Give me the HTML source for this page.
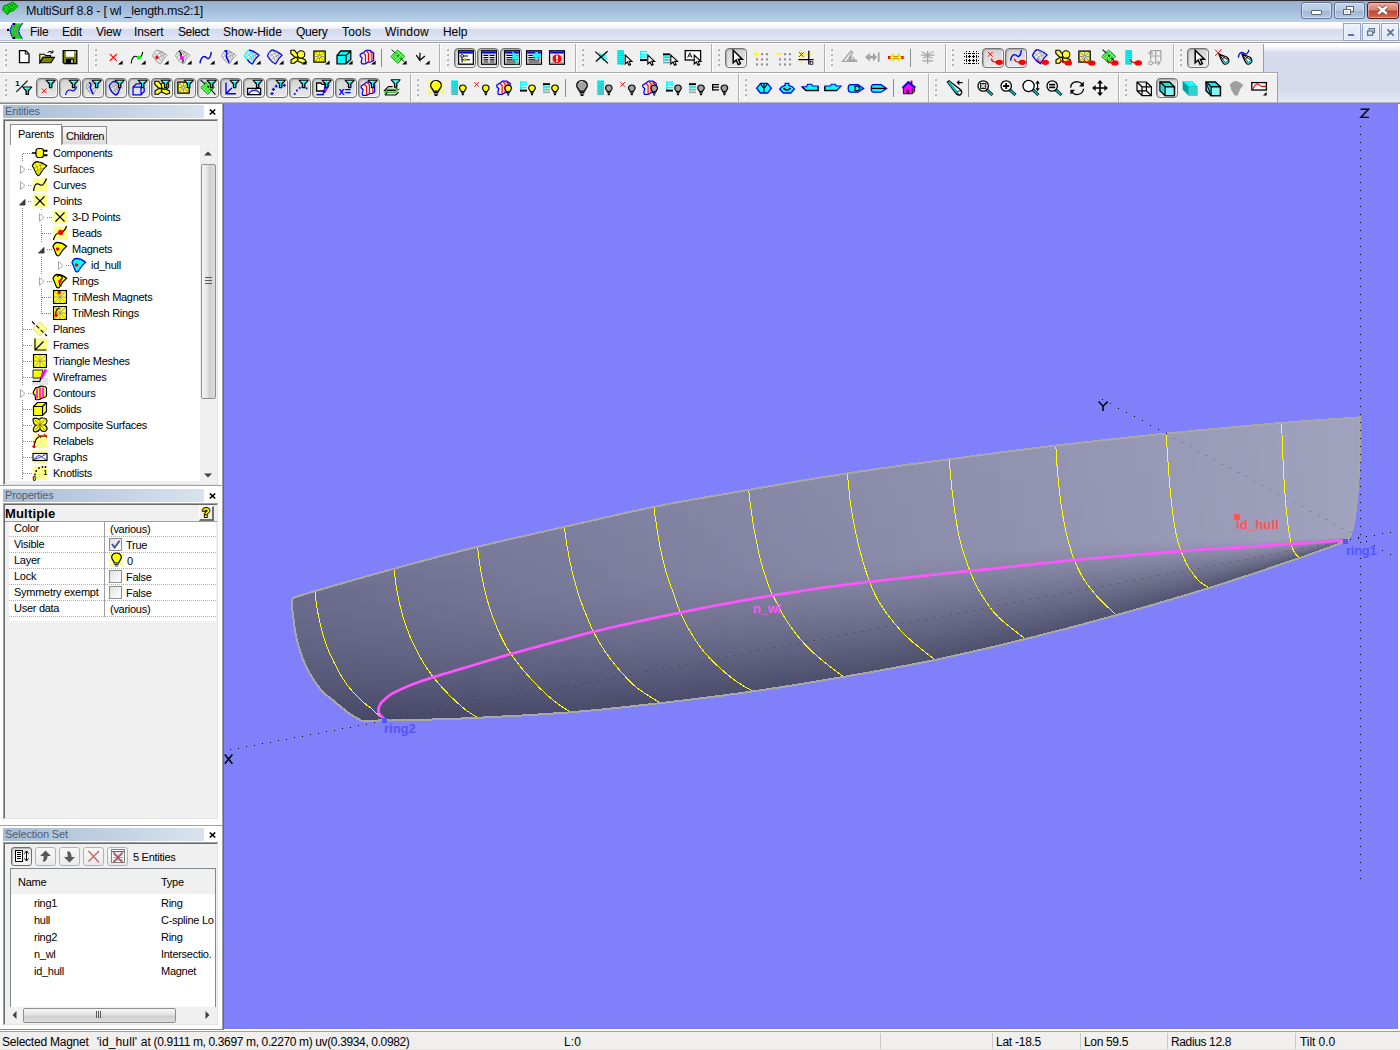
<!DOCTYPE html>
<html><head><meta charset="utf-8"><title>MultiSurf 8.8</title>
<style>

html,body{margin:0;padding:0;}
body{width:1400px;height:1050px;position:relative;overflow:hidden;background:#f0f0f0;
 font-family:"Liberation Sans",sans-serif;font-size:11px;color:#000;}
.a{position:absolute;}
.t{position:absolute;white-space:nowrap;line-height:1;}
/* title bar */
#title{left:0;top:0;width:1400px;height:22px;background:linear-gradient(#7f99b8 0px,#98b3d2 2px,#9eb9d7 8px,#adc6e1 15px,#b9d1ea 22px);}
#titletop{left:0;top:0;width:1400px;height:1px;background:#2b2b30;}
#menubar{left:0;top:22px;width:1400px;height:20px;background:linear-gradient(#ffffff 0px,#fafbfe 3px,#eceef8 7px,#d4d8ec 7px,#e2e7f6 18px,#b5bbd0 18px,#b5bbd0 19px,#f4f4f4 19px);}
.menu{font-size:12px;top:26px;color:#000;}
#rebar{left:0;top:42px;width:1400px;height:61px;background:linear-gradient(#ffffff 0,#ffffff 2px,#fdfdfe 4px,#d6daed 11px,#d5d9ec 48px,#e3e8f6 60px);}
.tb{position:absolute;background:#f0f0f0;height:29px;}
.grip{position:absolute;width:4px;height:22px;
 background:repeating-linear-gradient(#b4b4b4 0,#b4b4b4 2px,transparent 2px,transparent 5px) 1.5px 1px/2px 18px no-repeat,
 repeating-linear-gradient(#ffffff 0,#ffffff 2px,transparent 2px,transparent 5px) 0.5px 0px/2px 22px no-repeat;}
.vsep{position:absolute;width:1px;background:#a0a0a0;}
.btnp{position:absolute;width:20px;height:18px;border:1px solid #727272;border-radius:4px;
 background:linear-gradient(#d3d3d3,#e9e9e9);box-shadow:inset 1px 1px 1px #a8a8a8, inset -1px -1px 0 #f8f8f8;}
svg{position:absolute;overflow:visible;}
/* panels */
.phead{position:absolute;left:3px;width:201px;height:13px;background:linear-gradient(90deg,#a8bdd4,#c4d3e4 60%,#d9e3ef);}
.phead span{position:absolute;left:2px;top:0px;font-size:11px;color:#4f5f74;line-height:13px;letter-spacing:-0.15px;}
.tree{font-size:11px;letter-spacing:-0.28px;}
.dot-h{position:absolute;height:1px;background-image:linear-gradient(90deg,#808080 1px,transparent 1px);background-size:2px 1px;}
.dot-v{position:absolute;width:1px;background-image:linear-gradient(#808080 1px,transparent 1px);background-size:1px 2px;}
.dotl-h{position:absolute;height:1px;background-image:linear-gradient(90deg,#b0b0b0 1px,transparent 1px);background-size:2px 1px;}
</style></head>
<body>
<div class="a" id="title"></div><div class="a" id="titletop"></div>
<svg style="left:0px;top:0px" width="20" height="17" viewBox="0 0 20 17"><path d="M3 7.3 L4.5 5.3 L7 5 L9.5 3.5 L12.9 1.9 L18 6.4 L14.1 10.3 L9.3 12.2 L7.5 14.8 L3 10.3 Z" fill="#00f000" stroke="#008000" stroke-width="0.9"/><path d="M4.5 5.3 L8.6 9.6 L7.5 14.8 M7 5 L11.3 9 L9.3 12.2 M9.5 3.5 L14.3 7.8 M3 10.3 L5.2 8 M5 12.4 L7 9.6 L9 7 L11.4 5 L15.4 4.2 M8.6 9.6 L11.3 9 L14.3 7.8 L16.4 5" fill="none" stroke="#008000" stroke-width="0.8"/></svg>
<div class="t" style="left:26px;top:5px;font-size:12.5px;letter-spacing:-0.24px;color:#0a0a14">MultiSurf 8.8 - [ wl _length.ms2:1]</div>
<div class="a" style="left:1301px;top:2px;width:29px;height:15px;border:1px solid #5f7696;border-radius:3px;box-shadow:inset 0 0 0 1px rgba(255,255,255,0.45);background:linear-gradient(#c3d5ea,#b4c9e2 50%,#9cb4d3 51%,#b4c8e0)"></div>
<div class="a" style="left:1311px;top:10px;width:9px;height:3px;background:#fff;border:1px solid #56657a;border-radius:1px"></div>
<div class="a" style="left:1334px;top:2px;width:29px;height:15px;border:1px solid #5f7696;border-radius:3px;box-shadow:inset 0 0 0 1px rgba(255,255,255,0.45);background:linear-gradient(#c3d5ea,#b4c9e2 50%,#9cb4d3 51%,#b4c8e0)"></div>
<svg style="left:1342px;top:5px" width="13" height="11" viewBox="0 0 13 11"><rect x="4.5" y="1.5" width="7" height="5" fill="#fff" stroke="#56657a"/><rect x="1.5" y="4.5" width="7" height="5" fill="#fff" stroke="#56657a"/><rect x="3.5" y="6.5" width="3" height="1" fill="#9ab2d2" stroke="none"/></svg>
<div class="a" style="left:1367px;top:2px;width:30px;height:15px;border:1px solid #5c1c16;border-radius:3px;box-shadow:inset 0 0 0 1px rgba(255,200,190,0.55);background:linear-gradient(#e6aca2,#d4806f 48%,#c0432f 52%,#cf6e56)"></div>
<svg style="left:1376px;top:5px" width="13" height="10" viewBox="0 0 13 10"><path d="M2.2 1.4 L10.8 8.8 M10.8 1.4 L2.2 8.8" stroke="#6a3630" stroke-width="4"/><path d="M2.2 1.4 L10.8 8.8 M10.8 1.4 L2.2 8.8" stroke="#fff" stroke-width="2.6"/></svg>
<div class="a" id="menubar"></div>
<svg style="left:6px;top:23px" width="18" height="17" viewBox="0 0 18 17"><path d="M7.3 0.4 H16.7 Q13.6 3.4 12.9 8 Q13.6 12.8 16.7 15.8 H7.3 Q4.8 12.4 4.3 8 Q4.8 3.6 7.3 0.4 Z" fill="#00f000"/><path d="M10 0.6 Q7.4 4 7.2 8 Q7.4 12 10 15.6 M13.2 0.6 Q10.4 4 10 8 Q10.4 12 13.2 15.6 M5.4 4.2 H13.6 M4.4 8 H13 M5.4 11.8 H13.6" stroke="#808080" stroke-width="0.9" fill="none"/><path d="M7.3 0.4 Q4.8 3.6 4.3 8 Q4.8 12.4 7.3 15.8 M16.7 0.4 Q13.6 3.4 12.9 8 Q13.6 12.8 16.7 15.8" stroke="#0000ff" stroke-width="1.3" fill="none" stroke-dasharray="1.6 0.8"/><rect x="1" y="5.8" width="2.2" height="2.2" rx="0.6" fill="#000"/><rect x="7" y="0" width="2.2" height="2.2" rx="0.6" fill="#000"/><rect x="7" y="13.8" width="2.2" height="2.2" rx="0.6" fill="#000"/></svg>
<div class="t menu" style="left:30px;letter-spacing:-0.21px">File</div>
<div class="t menu" style="left:62px;letter-spacing:-0.17px">Edit</div>
<div class="t menu" style="left:96px;letter-spacing:-0.2px">View</div>
<div class="t menu" style="left:134px;letter-spacing:-0.09px">Insert</div>
<div class="t menu" style="left:178px;letter-spacing:-0.39px">Select</div>
<div class="t menu" style="left:223px;letter-spacing:0.03px">Show-Hide</div>
<div class="t menu" style="left:296px;letter-spacing:-0.24px">Query</div>
<div class="t menu" style="left:342px;letter-spacing:0.2px">Tools</div>
<div class="t menu" style="left:385px;letter-spacing:0.22px">Window</div>
<div class="t menu" style="left:443px;letter-spacing:-0.05px">Help</div>
<div class="a" style="left:1343px;top:23px;width:16px;height:16px;border:1px solid #94a3bf;background:linear-gradient(#eaf1fb,#dde8f7);box-shadow:inset 0 0 0 1px #f2f6fc"></div>
<div class="a" style="left:1362px;top:23px;width:16px;height:16px;border:1px solid #94a3bf;background:linear-gradient(#eaf1fb,#dde8f7);box-shadow:inset 0 0 0 1px #f2f6fc"></div>
<div class="a" style="left:1381px;top:23px;width:16px;height:16px;border:1px solid #94a3bf;background:linear-gradient(#eaf1fb,#dde8f7);box-shadow:inset 0 0 0 1px #f2f6fc"></div>
<div class="a" style="left:1348px;top:34px;width:6px;height:2px;background:#66758f"></div>
<svg style="left:1366px;top:27px" width="10" height="10" viewBox="0 0 10 10"><path d="M3.2 3.4 V1.6 H8.4 V5.6 H6.6" fill="none" stroke="#66758f" stroke-width="1.3"/><rect x="1.6" y="4" width="5" height="4.2" fill="none" stroke="#66758f" stroke-width="1.3"/></svg>
<svg style="left:1386px;top:28px" width="9" height="9" viewBox="0 0 9 9"><path d="M1.4 1.4 L7.6 7.6 M7.6 1.4 L1.4 7.6" stroke="#66758f" stroke-width="1.9"/></svg>
<div class="a" id="rebar"></div>
<div class="a" style="left:0;top:42px;width:1400px;height:1px;background:#a0a0a0"></div>
<div class="a" style="left:0;top:43px;width:1400px;height:1px;background:#ffffff"></div>
<div class="tb" style="left:0;top:44px;width:1263px;height:28px"></div>
<div class="a" style="left:0;top:72px;width:1278px;height:1px;background:#a8a8a8"></div>
<div class="a" style="left:0;top:73px;width:1278px;height:1px;background:#ffffff"></div>
<div class="tb" style="left:0;top:74px;width:1278px;height:28px"></div>
<div class="a" style="left:1263px;top:44px;width:1px;height:29px;background:#a0a0a0"></div>
<div class="a" style="left:1277px;top:73px;width:1px;height:29px;background:#a0a0a0"></div>
<div class="a" style="left:0;top:102px;width:1400px;height:1px;background:#b4b4b4"></div>
<div class="a" style="left:0;top:103px;width:1400px;height:1px;background:#8c8c8c"></div>
<div class="a" style="left:0;top:1030px;width:1400px;height:1px;background:#ffffff"></div>
<div class="a" style="left:0;top:1031px;width:1400px;height:1px;background:#a0a0a0"></div>
<div class="a" style="left:0;top:1032px;width:1400px;height:18px;background:#f1eeee"></div>
<div class="t" style="left:2px;top:1036px;font-size:12px;letter-spacing:-0.23px">Selected Magnet</div>
<div class="t" style="left:96.7px;top:1036px;font-size:12px;letter-spacing:0.14px">'id_hull' at</div>
<div class="t" style="left:153.6px;top:1036px;font-size:12px;letter-spacing:-0.364px">(0.9111 m, 0.3697 m, 0.2270 m) uv(0.3934, 0.0982)</div>
<div class="t" style="left:564px;top:1036px;font-size:12px;letter-spacing:0.1px">L:0</div>
<div class="a" style="left:880px;top:1033px;width:1px;height:16px;background:#c8c8c8"></div>
<div class="a" style="left:992px;top:1033px;width:1px;height:16px;background:#c8c8c8"></div>
<div class="a" style="left:1080px;top:1033px;width:1px;height:16px;background:#c8c8c8"></div>
<div class="a" style="left:1167px;top:1033px;width:1px;height:16px;background:#c8c8c8"></div>
<div class="a" style="left:1295px;top:1033px;width:1px;height:16px;background:#c8c8c8"></div>
<div class="t" style="left:996px;top:1036px;font-size:12px;letter-spacing:-0.26px">Lat -18.5</div>
<div class="t" style="left:1084px;top:1036px;font-size:12px;letter-spacing:-0.34px">Lon 59.5</div>
<div class="t" style="left:1171px;top:1036px;font-size:12px;letter-spacing:-0.37px">Radius 12.8</div>
<div class="t" style="left:1300px;top:1036px;font-size:12px;letter-spacing:-0.07px">Tilt 0.0</div>
<div class="a" style="left:0;top:1049px;width:1400px;height:1px;background:#e0e0e0"></div>
<div class="grip" style="left:3px;top:48px"></div>
<svg style="left:15px;top:48px" width="18" height="18" viewBox="0 0 18 18"><path d="M4.5 2.6 H10.7 L14 5.9 V14.6 H4.5 Z" fill="#fff" stroke="#000" stroke-width="1.3"/><path d="M10.3 2.8 V6 H13.4" fill="none" stroke="#000" stroke-width="1"/></svg>
<svg style="left:38px;top:48px" width="18" height="18" viewBox="0 0 18 18"><path d="M1.8 6.2 H6.4 L7.6 7.6 H12.6 V9.4 H5 L1.8 14.6 Z" fill="#ffff80" stroke="#000" stroke-width="1.1"/><path d="M1.8 14.8 L5 9.4 H16.4 L13 14.8 Z" fill="#808000" stroke="#000" stroke-width="1.1"/><path d="M9.6 4.6 Q12 2 14.4 4.4 M14.8 2.4 V4.9 H12.3" fill="none" stroke="#000" stroke-width="1"/></svg>
<svg style="left:61px;top:48px" width="18" height="18" viewBox="0 0 18 18"><path d="M2.2 2.6 H15.8 V15.6 H3.4 L2.2 14.4 Z" fill="#808000" stroke="#000" stroke-width="1.3"/><rect x="4.8" y="3.2" width="8.4" height="5.6" fill="#fff"/><rect x="5" y="10.8" width="8" height="4.6" fill="#000"/><rect x="10" y="11.8" width="2" height="3" fill="#c0c0c0"/><rect x="13.9" y="3.6" width="1.2" height="1.2" fill="#fff"/></svg>
<div class="vsep" style="left:88px;top:44px;height:28px;background:#b0b0b0"></div>
<div class="vsep" style="left:89px;top:44px;height:28px;background:#ffffff"></div>
<div class="grip" style="left:93px;top:48px"></div>
<svg style="left:105px;top:48px" width="18" height="18" viewBox="0 0 18 18"><path d="M4.8 5.8 L11.8 12.8 M11.8 5.8 L4.8 12.8" stroke="#ff0000" stroke-width="1.1"/><path d="M13 16.6 H17.6 V12.6 Z" fill="#000"/></svg>
<svg style="left:128px;top:48px" width="18" height="18" viewBox="0 0 18 18"><path d="M3.2 15.6 Q3.4 11 5.6 8.8 Q8 7.4 11 9.8 Q14 9 14.7 4" fill="none" stroke="#000" stroke-width="1.15"/><circle cx="10.9" cy="9.7" r="2.1" fill="#00ff00"/><path d="M13 16.6 H17.6 V12.6 Z" fill="#000"/></svg>
<svg style="left:151px;top:48px" width="18" height="18" viewBox="0 0 18 18"><path d="M1.5 8 Q3 3.5 6 2 Q11.5 3 16 7.3 Q12.5 10 9.5 16 Q5.5 14 4 11.5 Q2.5 9.5 1.5 8 Z" fill="none" stroke="#909090" stroke-width="0.9"/><path d="M3.6 5 Q8 7.5 9.8 13.5 M6 2.2 Q11 6 11.2 12.5 M9 2.8 Q13 6 13 10.3 M2.5 9.5 Q7 5 12 4.2 M4.5 12 Q9 8 14.5 6.2" fill="none" stroke="#909090" stroke-width="0.7"/><path d="M4.4 9.4 L5.9 7.6 L7.6 9.4 L5.9 11 Z" fill="#ff0000"/><circle cx="5.9" cy="9.4" r="1.5" fill="#ff0000"/><path d="M13 16.6 H17.6 V12.6 Z" fill="#000"/></svg>
<svg style="left:174px;top:48px" width="18" height="18" viewBox="0 0 18 18"><path d="M1.5 8 Q3 3.5 6 2 Q11.5 3 16 7.3 Q12.5 10 9.5 16 Q5.5 14 4 11.5 Q2.5 9.5 1.5 8 Z" fill="none" stroke="#909090" stroke-width="0.9"/><path d="M3.6 5 Q8 7.5 9.8 13.5 M6 2.2 Q11 6 11.2 12.5 M9 2.8 Q13 6 13 10.3 M2.5 9.5 Q7 5 12 4.2 M4.5 12 Q9 8 14.5 6.2" fill="none" stroke="#909090" stroke-width="0.7"/><path d="M4.8 3 Q7 4.4 7.2 6.6 Q6.6 9 8 10.4 Q9.6 12 8.8 14.6" fill="none" stroke="#000" stroke-width="1.3"/><circle cx="7.9" cy="10" r="2.1" fill="#ff00ff"/><path d="M13 16.6 H17.6 V12.6 Z" fill="#000"/></svg>
<svg style="left:197px;top:48px" width="18" height="18" viewBox="0 0 18 18"><path d="M3 15.4 Q3.4 10.6 6.4 8.6 Q8.4 8.2 10.4 10.4 Q12.6 11.2 13.6 7.4 L14.3 4" fill="none" stroke="#0000ff" stroke-width="1.4"/><path d="M13 16.6 H17.6 V12.6 Z" fill="#000"/></svg>
<svg style="left:220px;top:48px" width="18" height="18" viewBox="0 0 18 18"><path d="M1.5 8 Q3 3.5 6 2 Q11.5 3 16 7.3 Q12.5 10 9.5 16 Q5.5 14 4 11.5 Q2.5 9.5 1.5 8 Z" fill="none" stroke="#909090" stroke-width="0.9"/><path d="M3.6 5 Q8 7.5 9.8 13.5 M6 2.2 Q11 6 11.2 12.5 M9 2.8 Q13 6 13 10.3 M2.5 9.5 Q7 5 12 4.2 M4.5 12 Q9 8 14.5 6.2" fill="none" stroke="#909090" stroke-width="0.7"/><path d="M5 3 Q7.4 4 6.8 6 Q5.6 8.6 7.2 10.8 Q8.4 13 9.2 14.8" fill="none" stroke="#0000ff" stroke-width="1.4"/><path d="M4.4 3.2 Q6 2.2 7 3.4" fill="none" stroke="#0000ff" stroke-width="1.2"/><path d="M13 16.6 H17.6 V12.6 Z" fill="#000"/></svg>
<svg style="left:243px;top:48px" width="18" height="18" viewBox="0 0 18 18"><path d="M3.6 5 Q8 7.5 9.8 13.5 M6 2.2 Q11 6 11.2 12.5 M9 2.8 Q13 6 13 10.3 M2.5 9.5 Q7 5 12 4.2 M4.5 12 Q9 8 14.5 6.2" fill="none" stroke="#909090" stroke-width="0.7"/><path d="M9.5 16 Q5.5 14 4 11.5 Q2.5 9.5 1.5 8 Q3 3.5 6 2" fill="none" stroke="#00ffff" stroke-width="1.3"/><path d="M6 2 Q11.5 3 16 7.3 Q12.5 10 9.5 16 Q6 14.4 4.4 11.6" fill="none" stroke="#0000ff" stroke-width="1.3"/><path d="M4 5.2 Q8 8 9.2 13.4 M6.6 3.6 Q10.6 7 10.8 12" fill="none" stroke="#00ffff" stroke-width="1"/><path d="M13 16.6 H17.6 V12.6 Z" fill="#000"/></svg>
<svg style="left:266px;top:48px" width="18" height="18" viewBox="0 0 18 18"><path d="M1.5 8 Q3 3.5 6 2 Q11.5 3 16 7.3 Q12.5 10 9.5 16 Q5.5 14 4 11.5 Q2.5 9.5 1.5 8 Z" fill="none" stroke="#0000ff" stroke-width="1.3"/><path d="M3.6 5 Q8 7.5 9.8 13.5 M6 2.2 Q11 6 11.2 12.5 M9 2.8 Q13 6 13 10.3 M2.5 9.5 Q7 5 12 4.2 M4.5 12 Q9 8 14.5 6.2" fill="none" stroke="#909090" stroke-width="0.7"/><path d="M13 16.6 H17.6 V12.6 Z" fill="#000"/></svg>
<svg style="left:289px;top:48px" width="18" height="18" viewBox="0 0 18 18"><path d="M1.8 2.2 H5.4 L9.2 6.8 L8.4 9.2 L5.6 9 L1.8 5.4 Z" fill="#ffff00" stroke="#000" stroke-width="1.1" stroke-linejoin="round"/><path d="M2 15.2 V12 L6 9.4 L8.8 10 L8.4 12.6 L5.2 15.2 Z" fill="#ffff00" stroke="#000" stroke-width="1.1" stroke-linejoin="round"/><path d="M8.6 10.2 L11.4 9.4 L16.2 11.8 L16.6 14.2 L13.6 15.2 L9 13.2 Z" fill="#ffff00" stroke="#000" stroke-width="1.1" stroke-linejoin="round"/><circle cx="12.1" cy="6.4" r="3.7" fill="#ffff00" stroke="#000" stroke-width="1.1"/><path d="M10.6 4.8 h1.2 v1.2 h-1.2 Z M12.8 4.8 h1.2 v1.2 h-1.2 Z M11.7 6 h1.2 v1.2 h-1.2 Z M10.6 7.2 h1.2 v1.2 h-1.2 Z M12.8 7.2 h1.2 v1.2 h-1.2 Z" fill="#ffffc8"/><path d="M3.4 3.6 L7.4 7.8 M3.4 13.8 L7 11 M10 11.4 L14.8 13.6" stroke="#ffffb0" stroke-width="0.9" fill="none"/><path d="M13 16.6 H17.6 V12.6 Z" fill="#000"/></svg>
<svg style="left:312px;top:48px" width="18" height="18" viewBox="0 0 18 18"><rect x="1.9" y="3.1" width="11.3" height="11" fill="#ffff00" stroke="#000" stroke-width="1.3"/><path d="M2.6 3.8 L12.5 13.4 M12.5 3.8 L2.6 13.4 M7.55 3.8 V13.4 M2.6 8.6 H12.5" stroke="#8c8c8c" stroke-width="1"/><circle cx="7.55" cy="8.6" r="0.9" fill="#e8e8e8"/><path d="M13 16.6 H17.6 V12.6 Z" fill="#000"/></svg>
<svg style="left:335px;top:48px" width="18" height="18" viewBox="0 0 18 18"><path d="M2 7.4 L5.7 3 H15.8 V11.4 L11.1 15.8 H2 Z" fill="#00ffff" stroke="#000" stroke-width="1.3"/><path d="M2 7.4 H11.1 V15.8 M11.1 7.4 L15.8 3" fill="none" stroke="#000" stroke-width="1.3"/><path d="M13 16.6 H17.6 V12.6 Z" fill="#000"/></svg>
<svg style="left:358px;top:48px" width="18" height="18" viewBox="0 0 18 18"><path d="M2.2 6.4 L6.2 4 L7.9 2.4 H12.2 L15.6 5 V12.4 L13.2 13.8 L10.2 14.1 L7.5 15.8 H3.8 L3.2 13.8 L4.2 10.1 L2.2 8.1 Z" fill="#f0f0f0" stroke="#0000ff" stroke-width="1.25" stroke-linejoin="round"/><path d="M5.2 4.7 L7.5 7 V14.8 M8.5 3 L10.5 5.4 V13.8 M11.9 3.4 L13.9 5.4 V12.8" fill="none" stroke="#ff0000" stroke-width="1.2"/><path d="M13 16.6 H17.6 V12.6 Z" fill="#000"/></svg>
<div class="vsep" style="left:381px;top:49px;height:18px;background:#8c8c8c"></div>
<svg style="left:389px;top:48px" width="18" height="18" viewBox="0 0 18 18"><path d="M8.6 2 L15.5 8.2 L8.8 15.4 L1.8 8.6 Z" fill="#80ff80" stroke="#00a000" stroke-width="1"/><path d="M5 5.6 L12 12.2 M6.8 3.8 L13.8 10.2 M3.4 7.2 L10.4 13.8 M3.2 10 L10.2 3.4 M5 11.8 L12 5 M7 13.6 L14 6.8" stroke="#00c000" stroke-width="0.7"/><path d="M2.6 1.6 L6.4 5.2 M8.2 7 L10 8.6 M11.4 10 L15.4 14" stroke="#000" stroke-width="0.9"/><path d="M13 16.6 H17.6 V12.6 Z" fill="#000"/></svg>
<svg style="left:412px;top:48px" width="18" height="18" viewBox="0 0 18 18"><path d="M4.2 7.2 L7.8 12.2 L8 4.8 M7.8 12.2 L13 8" fill="none" stroke="#000" stroke-width="1.2"/><path d="M13 16.6 H17.6 V12.6 Z" fill="#000"/></svg>
<div class="vsep" style="left:439px;top:44px;height:28px;background:#b0b0b0"></div>
<div class="vsep" style="left:440px;top:44px;height:28px;background:#ffffff"></div>
<div class="grip" style="left:445px;top:48px"></div>
<div class="btnp" style="left:454px;top:48px"></div>
<svg style="left:457px;top:48px" width="18" height="18" viewBox="0 0 18 18"><rect x="1.6" y="2.8" width="14.8" height="13.4" fill="#fff" stroke="#000" stroke-width="1.3"/><rect x="2.2" y="3.4" width="13.6" height="2.2" fill="#0000f0"/><path d="M5 7.6 V14.6 M5.6 8 H11 M5.2 11.8 H7 M9 11.8 H13" stroke="#000" stroke-width="1.1" fill="none"/><circle cx="5.2" cy="8" r="1.4" fill="#fff" stroke="#000" stroke-width="0.9"/><circle cx="7.8" cy="11.8" r="1.2" fill="#ffff00" stroke="#606000" stroke-width="0.6"/></svg>
<div class="btnp" style="left:477px;top:48px"></div>
<svg style="left:480px;top:48px" width="18" height="18" viewBox="0 0 18 18"><rect x="1.6" y="2.8" width="14.8" height="13.4" fill="#fff" stroke="#000" stroke-width="1.3"/><rect x="2.2" y="3.4" width="13.6" height="2.2" fill="#0000f0"/><path d="M3.4 7.4 H8.2 M9.8 7.4 H14.6 M3.4 9.6 H8.2 M9.8 9.6 H14.6 M3.4 11.8 H8.2 M9.8 11.8 H14.6 M3.4 14 H8.2 M9.8 14 H14.6" stroke="#000" stroke-width="1.2"/><path d="M9 6 V15.6" stroke="#909090" stroke-width="0.7"/></svg>
<div class="btnp" style="left:500px;top:48px"></div>
<svg style="left:503px;top:48px" width="18" height="18" viewBox="0 0 18 18"><rect x="1.6" y="2.8" width="14.8" height="13.4" fill="#fff" stroke="#000" stroke-width="1.3"/><rect x="2.2" y="3.4" width="13.6" height="2.2" fill="#0000f0"/><path d="M3.4 7.4 H14.6 M3.4 9.6 H14.6 M3.4 11.8 H14.6 M3.4 14 H14.6" stroke="#000" stroke-width="1.2"/><path d="M9.4 3 V12.6 L11.6 10.8 L13.2 16.4 L14.6 16 L13.4 10.6 L16.6 10.2 Z" fill="#00ffff"/></svg>
<svg style="left:525px;top:48px" width="18" height="18" viewBox="0 0 18 18"><rect x="1.6" y="2.8" width="14.8" height="13.4" fill="#fff" stroke="#000" stroke-width="1.3"/><rect x="2.2" y="3.4" width="13.6" height="2.2" fill="#0000f0"/><path d="M3.4 7.4 H14.6 M3.4 9.6 H14.6 M3.4 11.8 H14.6 M3.4 14 H14.6" stroke="#000" stroke-width="1.2"/><path d="M10.2 4 H13 V6.6 H15.6 V9.4 H13 V12 H10.2 V9.4 H7.6 V6.6 H10.2 Z" fill="#00ffff"/></svg>
<svg style="left:548px;top:48px" width="18" height="18" viewBox="0 0 18 18"><rect x="1.6" y="2.8" width="14.8" height="13.4" fill="#fff" stroke="#000" stroke-width="1.3"/><rect x="2.2" y="3.4" width="13.6" height="2.2" fill="#0000f0"/><path d="M3.4 8 H14.6 M3.4 10.4 H14.6 M3.4 12.8 H14.6 M3.4 14.6 H14.6" stroke="#909090" stroke-width="0.9"/><path d="M7.2 6.4 H10.8 L13.2 8.8 V12.4 L10.8 14.8 H7.2 L4.8 12.4 V8.8 Z" fill="#ff0000"/><path d="M9 7.6 V11.4" stroke="#fff" stroke-width="1.8"/><rect x="8.1" y="12.3" width="1.8" height="1.6" fill="#fff"/></svg>
<div class="vsep" style="left:575px;top:44px;height:28px;background:#b0b0b0"></div>
<div class="vsep" style="left:576px;top:44px;height:28px;background:#ffffff"></div>
<div class="grip" style="left:580px;top:48px"></div>
<svg style="left:592px;top:48px" width="18" height="18" viewBox="0 0 18 18"><path d="M5.6 6.4 V14.4 L7.8 12.4 L9.6 16 L11.4 15.2 L9.8 12 H13 Z" fill="#00ffff" transform="translate(1.5 -2.4)"/><text x="10.2" y="12.4" font-size="7" font-weight="bold" fill="#00ffff" font-family="Liberation Sans">S</text><path d="M3.4 3.6 L16 15.4 M15.6 3.2 L3.8 13.6" stroke="#000" stroke-width="1.3"/></svg>
<svg style="left:615px;top:48px" width="18" height="18" viewBox="0 0 18 18"><rect x="2" y="2" width="7" height="14.6" fill="#00ffff"/><rect x="3.3" y="2.7" width="5.7" height="1.04286" fill="#909090"/><rect x="3.3" y="4.78571" width="5.7" height="1.04286" fill="#909090"/><rect x="3.3" y="6.87143" width="5.7" height="1.04286" fill="#909090"/><rect x="3.3" y="8.95714" width="5.7" height="1.04286" fill="#909090"/><rect x="3.3" y="11.0429" width="5.7" height="1.04286" fill="#909090"/><rect x="3.3" y="13.1286" width="5.7" height="1.04286" fill="#909090"/><rect x="3.3" y="15.2143" width="5.7" height="1.04286" fill="#909090"/><g transform="translate(10.2 7)"><path d="M0 0 V9 L2.2 7 L3.8 10.3 L5.4 9.6 L3.9 6.4 H6.8 Z" fill="#fff" stroke="#000" stroke-width="1.1" stroke-linejoin="miter"/></g></svg>
<svg style="left:638px;top:48px" width="18" height="18" viewBox="0 0 18 18"><rect x="2" y="2.9" width="1.4" height="10.2" fill="#00ffff"/><rect x="2" y="2.9" width="7" height="1.4" fill="#00ffff"/><rect x="2" y="5.65" width="7" height="1.4" fill="#00ffff"/><rect x="2" y="8.4" width="7" height="1.4" fill="#00ffff"/><rect x="2" y="11.15" width="7" height="1.9" fill="#000"/><g transform="translate(9.8 7)"><path d="M0 0 V9 L2.2 7 L3.8 10.3 L5.4 9.6 L3.9 6.4 H6.8 Z" fill="#fff" stroke="#000" stroke-width="1.1" stroke-linejoin="miter"/></g></svg>
<svg style="left:661px;top:48px" width="18" height="18" viewBox="0 0 18 18"><rect x="2" y="5.4" width="1.4" height="10.2" fill="#00ffff"/><rect x="2" y="5.4" width="7" height="1.9" fill="#000"/><rect x="2" y="8.15" width="7" height="1.4" fill="#00ffff"/><rect x="2" y="10.9" width="7" height="1.4" fill="#00ffff"/><rect x="2" y="13.65" width="7" height="1.4" fill="#00ffff"/><rect x="3.4" y="8.9" width="5.6" height="1" fill="#909090"/><rect x="3.4" y="11.6" width="5.6" height="1" fill="#909090"/><rect x="3.4" y="14.3" width="5.6" height="1" fill="#909090"/><g transform="translate(9.8 7)"><path d="M0 0 V9 L2.2 7 L3.8 10.3 L5.4 9.6 L3.9 6.4 H6.8 Z" fill="#fff" stroke="#000" stroke-width="1.1" stroke-linejoin="miter"/></g></svg>
<svg style="left:684px;top:48px" width="18" height="18" viewBox="0 0 18 18"><rect x="1.2" y="2.6" width="15.4" height="9.4" fill="#fff" stroke="#000" stroke-width="1.3"/><path d="M3.6 9.6 L5.8 4.8 L8 9.6 M4.5 8 H7.1" fill="none" stroke="#000" stroke-width="0.9"/><g transform="translate(10.2 7)"><path d="M0 0 V9 L2.2 7 L3.8 10.3 L5.4 9.6 L3.9 6.4 H6.8 Z" fill="#fff" stroke="#000" stroke-width="1.1" stroke-linejoin="miter"/></g></svg>
<div class="vsep" style="left:711px;top:44px;height:28px;background:#b0b0b0"></div>
<div class="vsep" style="left:712px;top:44px;height:28px;background:#ffffff"></div>
<div class="grip" style="left:716px;top:48px"></div>
<div class="btnp" style="left:725px;top:48px"></div>
<svg style="left:728px;top:48px" width="18" height="18" viewBox="0 0 18 18"><path d="M5.2 2.2 V14.8 L8.2 12 L10.2 16.6 L12.4 15.6 L10.4 11.2 H14.4 Z" fill="#fff" stroke="#000" stroke-width="1.5" stroke-linejoin="miter"/></svg>
<svg style="left:751px;top:48px" width="18" height="18" viewBox="0 0 18 18"><rect x="5" y="5.2" width="2" height="2" fill="#8c8c8c"/><rect x="10" y="5.2" width="2" height="2" fill="#8c8c8c"/><rect x="15" y="5.2" width="2" height="2" fill="#8c8c8c"/><rect x="5" y="10.4" width="2" height="2" fill="#8c8c8c"/><rect x="10" y="10.4" width="2" height="2" fill="#8c8c8c"/><rect x="15" y="10.4" width="2" height="2" fill="#8c8c8c"/><rect x="5" y="15.4" width="2" height="2" fill="#8c8c8c"/><rect x="10" y="15.4" width="2" height="2" fill="#8c8c8c"/><rect x="15" y="15.4" width="2" height="2" fill="#8c8c8c"/><rect x="1.6" y="2.6" width="7" height="6.4" fill="#f0f0f0"/><path d="M2 5.8 H8 M5 2.8 V8.6" stroke="#ffff00" stroke-width="1.8"/></svg>
<svg style="left:774px;top:48px" width="18" height="18" viewBox="0 0 18 18"><rect x="5" y="5.2" width="2" height="2" fill="#8c8c8c"/><rect x="10" y="5.2" width="2" height="2" fill="#8c8c8c"/><rect x="15" y="5.2" width="2" height="2" fill="#8c8c8c"/><rect x="5" y="10.4" width="2" height="2" fill="#8c8c8c"/><rect x="10" y="10.4" width="2" height="2" fill="#8c8c8c"/><rect x="15" y="10.4" width="2" height="2" fill="#8c8c8c"/><rect x="5" y="15.4" width="2" height="2" fill="#8c8c8c"/><rect x="10" y="15.4" width="2" height="2" fill="#8c8c8c"/><rect x="15" y="15.4" width="2" height="2" fill="#8c8c8c"/><rect x="1.6" y="4" width="7" height="4" fill="#f0f0f0"/><path d="M2 5.8 H8" stroke="#ffff00" stroke-width="1.8"/></svg>
<svg style="left:797px;top:48px" width="18" height="18" viewBox="0 0 18 18"><path d="M4.4 1.8 V16.6 M1.4 6.6 H15" stroke="#ffff00" stroke-width="1.3"/><path d="M11.8 2.8 V16.6 M1.4 11.6 H16.6" stroke="#000" stroke-width="1.3"/><path d="M2 4 L6.8 9 M6.8 4 L2 9" stroke="#ff0000" stroke-width="1"/><text x="12.6" y="17" font-size="5.6" font-weight="bold" font-family="Liberation Sans">D</text></svg>
<div class="vsep" style="left:824px;top:44px;height:28px;background:#b0b0b0"></div>
<div class="vsep" style="left:825px;top:44px;height:28px;background:#ffffff"></div>
<div class="grip" style="left:829px;top:48px"></div>
<svg style="left:840px;top:48px" width="18" height="18" viewBox="0 0 18 18"><path d="M2.6 13.4 L11 3 L12.6 4.6 L7 13.4 Z M2.6 13.4 H16.4 V11.8" fill="none" stroke="#a4a4a4" stroke-width="1.4"/><path d="M9.6 8.2 Q14.2 7.8 15.8 12.6 L15 13 H9 Z" fill="#a4a4a4"/><circle cx="12.4" cy="10.6" r="1.1" fill="#f0f0f0"/></svg>
<svg style="left:863px;top:48px" width="18" height="18" viewBox="0 0 18 18"><path d="M2 9.2 L6.8 4.8 V7.8 H10 V4.8 L14 9.2 L10 13.6 V10.6 H6.8 V13.6 Z" fill="#a4a4a4"/><rect x="14.8" y="4.4" width="1.8" height="9.6" fill="#a4a4a4"/></svg>
<svg style="left:886px;top:48px" width="18" height="18" viewBox="0 0 18 18"><rect x="2" y="8" width="15.6" height="3" fill="#ff0000"/><path d="M3.6 9.5 L7.4 5.8 V8.4 H12.2 V5.8 L16 9.5 L12.2 13.2 V10.6 H7.4 V13.2 Z" fill="#ffff00" stroke="#a0a000" stroke-width="0.4"/></svg>
<div class="vsep" style="left:910px;top:49px;height:18px;background:#8c8c8c"></div>
<svg style="left:918px;top:48px" width="18" height="18" viewBox="0 0 18 18"><path d="M9.6 2.8 V15.8 M3 7.2 H16.4 M4.4 12.8 H15" stroke="#a4a4a4" stroke-width="1.3" fill="none"/><path d="M3.6 4 Q6.4 4.4 9.4 7.2 Q12.4 4.6 15.6 3.6 M4.8 10 Q7.4 10 9.4 7.4 Q11.6 10.2 14.6 10" stroke="#a4a4a4" stroke-width="1.1" fill="none"/></svg>
<div class="vsep" style="left:945px;top:44px;height:28px;background:#b0b0b0"></div>
<div class="vsep" style="left:946px;top:44px;height:28px;background:#ffffff"></div>
<div class="grip" style="left:950px;top:48px"></div>
<svg style="left:961px;top:48px" width="18" height="18" viewBox="0 0 18 18"><g shape-rendering="crispEdges"><path d="M5.5 3 V17" stroke="#000" stroke-width="1" stroke-dasharray="1 1"/><path d="M8.5 3 V17" stroke="#000" stroke-width="1" stroke-dasharray="1 1"/><path d="M12.5 3 V17" stroke="#000" stroke-width="1" stroke-dasharray="1 1"/><path d="M15.5 3 V17" stroke="#000" stroke-width="1" stroke-dasharray="1 1"/><path d="M3 5.5 H18" stroke="#000" stroke-width="1" stroke-dasharray="1 1"/><path d="M3 8.5 H18" stroke="#000" stroke-width="1" stroke-dasharray="1 1"/><path d="M3 12.5 H18" stroke="#000" stroke-width="1" stroke-dasharray="1 1"/><path d="M3 15.5 H18" stroke="#000" stroke-width="1" stroke-dasharray="1 1"/><rect x="5" y="5" width="1" height="1" fill="#000"/><rect x="5" y="8" width="1" height="1" fill="#000"/><rect x="5" y="12" width="1" height="1" fill="#000"/><rect x="5" y="15" width="1" height="1" fill="#000"/><rect x="8" y="5" width="1" height="1" fill="#000"/><rect x="8" y="8" width="1" height="1" fill="#000"/><rect x="8" y="12" width="1" height="1" fill="#000"/><rect x="8" y="15" width="1" height="1" fill="#000"/><rect x="12" y="5" width="1" height="1" fill="#000"/><rect x="12" y="8" width="1" height="1" fill="#000"/><rect x="12" y="12" width="1" height="1" fill="#000"/><rect x="12" y="15" width="1" height="1" fill="#000"/><rect x="15" y="5" width="1" height="1" fill="#000"/><rect x="15" y="8" width="1" height="1" fill="#000"/><rect x="15" y="12" width="1" height="1" fill="#000"/><rect x="15" y="15" width="1" height="1" fill="#000"/></g></svg>
<div class="btnp" style="left:982px;top:48px"></div>
<svg style="left:985px;top:48px" width="18" height="18" viewBox="0 0 18 18"><path d="M3 4 L7.6 8.6 M7.6 4 L3 8.6" stroke="#ff0000" stroke-width="1"/><path d="M6.4 10.6 Q6.8 13.8 10 14 L11.5 14.2" fill="none" stroke="#ff0000" stroke-width="1.2"/><ellipse cx="14.3" cy="14.3" rx="3.7" ry="2.6" fill="#ff0000"/></svg>
<div class="btnp" style="left:1005px;top:48px"></div>
<svg style="left:1008px;top:48px" width="18" height="18" viewBox="0 0 18 18"><path d="M2.6 12.6 Q3 8 6 6.6 Q8 6.4 9.6 8.4 Q11.8 9 12.8 5 L13.4 2.2" fill="none" stroke="#0000ff" stroke-width="1.4"/><path d="M6.4 10.6 Q6.8 13.8 10 14 L11.5 14.2" fill="none" stroke="#ff0000" stroke-width="1.2"/><ellipse cx="14.3" cy="14.3" rx="3.7" ry="2.6" fill="#ff0000"/></svg>
<svg style="left:1031px;top:48px" width="18" height="18" viewBox="0 0 18 18"><g transform="translate(0 -0.4)"><path d="M1.5 8 Q3 3.5 6 2 Q11.5 3 16 7.3 Q12.5 10 9.5 16 Q5.5 14 4 11.5 Q2.5 9.5 1.5 8 Z" fill="none" stroke="#0000ff" stroke-width="1.3"/><path d="M3.6 5 Q8 7.5 9.8 13.5 M6 2.2 Q11 6 11.2 12.5 M9 2.8 Q13 6 13 10.3 M2.5 9.5 Q7 5 12 4.2 M4.5 12 Q9 8 14.5 6.2" fill="none" stroke="#909090" stroke-width="0.7"/></g><path d="M6.4 10.6 Q6.8 13.8 10 14 L11.5 14.2" fill="none" stroke="#ff0000" stroke-width="1.2"/><ellipse cx="14.3" cy="14.3" rx="3.7" ry="2.6" fill="#ff0000"/></svg>
<svg style="left:1054px;top:48px" width="18" height="18" viewBox="0 0 18 18"><path d="M1.8 2.2 H5.4 L9.2 6.8 L8.4 9.2 L5.6 9 L1.8 5.4 Z" fill="#ffff00" stroke="#000" stroke-width="1.1" stroke-linejoin="round"/><path d="M2 15.2 V12 L6 9.4 L8.8 10 L8.4 12.6 L5.2 15.2 Z" fill="#ffff00" stroke="#000" stroke-width="1.1" stroke-linejoin="round"/><path d="M8.6 10.2 L11.4 9.4 L16.2 11.8 L16.6 14.2 L13.6 15.2 L9 13.2 Z" fill="#ffff00" stroke="#000" stroke-width="1.1" stroke-linejoin="round"/><circle cx="12.1" cy="6.4" r="3.7" fill="#ffff00" stroke="#000" stroke-width="1.1"/><path d="M10.6 4.8 h1.2 v1.2 h-1.2 Z M12.8 4.8 h1.2 v1.2 h-1.2 Z M11.7 6 h1.2 v1.2 h-1.2 Z M10.6 7.2 h1.2 v1.2 h-1.2 Z M12.8 7.2 h1.2 v1.2 h-1.2 Z" fill="#ffffc8"/><path d="M3.4 3.6 L7.4 7.8 M3.4 13.8 L7 11 M10 11.4 L14.8 13.6" stroke="#ffffb0" stroke-width="0.9" fill="none"/><g transform="translate(0 0.6)"><path d="M6.4 10.6 Q6.8 13.8 10 14 L11.5 14.2" fill="none" stroke="#ff0000" stroke-width="1.2"/><ellipse cx="14.3" cy="14.3" rx="3.7" ry="2.6" fill="#ff0000"/></g></svg>
<svg style="left:1077px;top:48px" width="18" height="18" viewBox="0 0 18 18"><rect x="1.9" y="3.1" width="11.3" height="11" fill="#ffff00" stroke="#000" stroke-width="1.3"/><path d="M2.6 3.8 L12.5 13.4 M12.5 3.8 L2.6 13.4 M7.55 3.8 V13.4 M2.6 8.6 H12.5" stroke="#8c8c8c" stroke-width="1"/><circle cx="7.55" cy="8.6" r="0.9" fill="#e8e8e8"/><g transform="translate(0.6 0.8)"><path d="M6.4 10.6 Q6.8 13.8 10 14 L11.5 14.2" fill="none" stroke="#ff0000" stroke-width="1.2"/><ellipse cx="14.3" cy="14.3" rx="3.7" ry="2.6" fill="#ff0000"/></g></svg>
<svg style="left:1100px;top:48px" width="18" height="18" viewBox="0 0 18 18"><path d="M8.6 2 L15.5 8.2 L8.8 15.4 L1.8 8.6 Z" fill="#80ff80" stroke="#00a000" stroke-width="1"/><path d="M5 5.6 L12 12.2 M6.8 3.8 L13.8 10.2 M3.4 7.2 L10.4 13.8 M3.2 10 L10.2 3.4 M5 11.8 L12 5 M7 13.6 L14 6.8" stroke="#00c000" stroke-width="0.7"/><path d="M2.6 1.6 L6.4 5.2 M8.2 7 L10 8.6 M11.4 10 L14 12.6" stroke="#000" stroke-width="1.1"/><g transform="translate(0.6 0.6)"><path d="M6.4 10.6 Q6.8 13.8 10 14 L11.5 14.2" fill="none" stroke="#ff0000" stroke-width="1.2"/><ellipse cx="14.3" cy="14.3" rx="3.7" ry="2.6" fill="#ff0000"/></g></svg>
<svg style="left:1123px;top:48px" width="18" height="18" viewBox="0 0 18 18"><rect x="2" y="2" width="7" height="14.6" fill="#00ffff"/><rect x="3.3" y="2.7" width="5.7" height="1.04286" fill="#909090"/><rect x="3.3" y="4.78571" width="5.7" height="1.04286" fill="#909090"/><rect x="3.3" y="6.87143" width="5.7" height="1.04286" fill="#909090"/><rect x="3.3" y="8.95714" width="5.7" height="1.04286" fill="#909090"/><rect x="3.3" y="11.0429" width="5.7" height="1.04286" fill="#909090"/><rect x="3.3" y="13.1286" width="5.7" height="1.04286" fill="#909090"/><rect x="3.3" y="15.2143" width="5.7" height="1.04286" fill="#909090"/><g transform="translate(1 0.6)"><path d="M6.4 10.6 Q6.8 13.8 10 14 L11.5 14.2" fill="none" stroke="#ff0000" stroke-width="1.2"/><ellipse cx="14.3" cy="14.3" rx="3.7" ry="2.6" fill="#ff0000"/></g></svg>
<svg style="left:1146px;top:48px" width="18" height="18" viewBox="0 0 18 18"><path d="M4.6 2.6 H14.8 V13.4 M4.6 2.6 V12 M9.6 2.6 V15 M4.6 8 H14.8 M6 15 H13 M2.4 6 L4.6 3.4 L6.8 6 M11.6 13 L13.8 15 L11.6 17" fill="none" stroke="#a4a4a4" stroke-width="1.2"/><circle cx="4.6" cy="15" r="1.8" fill="none" stroke="#a4a4a4" stroke-width="1.1"/></svg>
<div class="vsep" style="left:1173px;top:44px;height:28px;background:#b0b0b0"></div>
<div class="vsep" style="left:1174px;top:44px;height:28px;background:#ffffff"></div>
<div class="grip" style="left:1178px;top:48px"></div>
<div class="btnp" style="left:1187px;top:48px"></div>
<svg style="left:1190px;top:48px" width="18" height="18" viewBox="0 0 18 18"><path d="M5.2 2.2 V14.8 L8.2 12 L10.2 16.6 L12.4 15.6 L10.4 11.2 H14.4 Z" fill="#fff" stroke="#000" stroke-width="1.5" stroke-linejoin="miter"/></svg>
<svg style="left:1213px;top:48px" width="18" height="18" viewBox="0 0 18 18"><path d="M2 1.6 L9 8.6 M8.6 1.4 L2 7.8" stroke="#ff0000" stroke-width="1"/><path d="M6 6 L13.6 9 Q16.6 11.4 15.6 14 Q14.4 16.8 11 15.8 Q8.6 13.6 6 6 Z" fill="#fff" stroke="#000" stroke-width="1.3"/><path d="M6.4 6.6 L12.6 15.2 M6.6 6.4 L15 12.4 M9 10.6 L12 9.4" stroke="#000" stroke-width="0.8"/><path d="M10.2 13.6 Q12.6 14.6 15 11.8 L15.4 13.8 Q14 16.4 11.2 15.6 Z" fill="#00d0d0"/></svg>
<svg style="left:1236px;top:48px" width="18" height="18" viewBox="0 0 18 18"><path d="M2.4 9.6 Q2.6 5.4 5.6 4.4 Q7.6 4.6 9 6 Q11.4 6.4 12.4 3.4 L12.8 1.8" fill="none" stroke="#0000ff" stroke-width="1.3"/><path d="M6 6 L13.6 9 Q16.6 11.4 15.6 14 Q14.4 16.8 11 15.8 Q8.6 13.6 6 6 Z" fill="#fff" stroke="#000" stroke-width="1.3"/><path d="M6.4 6.6 L12.6 15.2 M6.6 6.4 L15 12.4 M9 10.6 L12 9.4" stroke="#000" stroke-width="0.8"/><path d="M10.2 13.6 Q12.6 14.6 15 11.8 L15.4 13.8 Q14 16.4 11.2 15.6 Z" fill="#00d0d0"/></svg>
<div class="grip" style="left:3px;top:78px"></div>
<svg style="left:14px;top:79px" width="18" height="18" viewBox="0 0 18 18"><text x="1.2" y="6.8" font-size="8" font-weight="bold" font-family="Liberation Sans">1</text><path d="M2.4 12.8 L13.6 1.6" stroke="#000" stroke-width="1.1"/><g transform="translate(0.6 6.8)"><path d="M8.3 1.3 H17 L13.8 5 V8.6 H11.5 V5 Z" fill="#00ffff" stroke="#000" stroke-width="1.3" stroke-linejoin="round"/><path d="M9.5 2.2 H15.8" stroke="#a0ffff" stroke-width="0.8"/></g></svg>
<div class="btnp" style="left:36px;top:78px"></div>
<svg style="left:38px;top:79px" width="18" height="18" viewBox="0 0 18 18"><path d="M3.8 9.4 L8.6 14.2 M8.6 9.4 L3.8 14.2" stroke="#ff0000" stroke-width="1"/><g transform="translate(0 0)"><path d="M8.3 1.3 H17 L13.8 5 V8.6 H11.5 V5 Z" fill="#00ffff" stroke="#000" stroke-width="1.3" stroke-linejoin="round"/><path d="M9.5 2.2 H15.8" stroke="#a0ffff" stroke-width="0.8"/></g></svg>
<div class="btnp" style="left:59px;top:78px"></div>
<svg style="left:61px;top:79px" width="18" height="18" viewBox="0 0 18 18"><path d="M4.6 16 Q5.2 12 8 11 Q10 10.8 11.4 11.8 Q13.8 12 15.8 7.4" fill="none" stroke="#0000ff" stroke-width="1.15"/><g transform="translate(0 0)"><path d="M8.3 1.3 H17 L13.8 5 V8.6 H11.5 V5 Z" fill="#00ffff" stroke="#000" stroke-width="1.3" stroke-linejoin="round"/><path d="M9.5 2.2 H15.8" stroke="#a0ffff" stroke-width="0.8"/></g></svg>
<div class="btnp" style="left:82px;top:78px"></div>
<svg style="left:84px;top:79px" width="18" height="18" viewBox="0 0 18 18"><g transform="translate(0 0)"><path d="M2 8 Q3 4.4 5.4 3 Q8 3.4 9.6 5 M2 8 Q4.4 13 9.4 16 Q10.4 13 12 10.6" fill="none" stroke="#909090" stroke-width="0.8"/><path d="M3.6 5.4 Q7 8 8.6 14 M2.6 10 Q6 7 9 5.6 M4.6 12.6 Q8 9.4 11 9.4" stroke="#909090" stroke-width="0.7" fill="none"/><path d="M5 3.6 Q7.4 4.6 6.8 6.6 Q5.6 9 7.2 11.2 Q8.4 13.2 9 15" fill="none" stroke="#0000ff" stroke-width="1.4"/></g><g transform="translate(0 0)"><path d="M8.3 1.3 H17 L13.8 5 V8.6 H11.5 V5 Z" fill="#00ffff" stroke="#000" stroke-width="1.3" stroke-linejoin="round"/><path d="M9.5 2.2 H15.8" stroke="#a0ffff" stroke-width="0.8"/></g></svg>
<div class="btnp" style="left:105px;top:78px"></div>
<svg style="left:107px;top:79px" width="18" height="18" viewBox="0 0 18 18"><path d="M2.2 7 Q3.6 3.6 6.6 2.4 L9.4 3.4 M2.2 7 Q3.4 12.6 8.6 16 Q11 15.6 11.6 12.4 L13 9" fill="none" stroke="#0000ff" stroke-width="1.3"/><path d="M4.2 4.6 Q8 8 9 14 M6.6 3 Q10 7 10.6 12 M2.8 9.6 Q7 7 10 5.4 M5 13 Q9 10 12 9.6" fill="none" stroke="#909090" stroke-width="0.7"/><g transform="translate(0 0)"><path d="M8.3 1.3 H17 L13.8 5 V8.6 H11.5 V5 Z" fill="#00ffff" stroke="#000" stroke-width="1.3" stroke-linejoin="round"/><path d="M9.5 2.2 H15.8" stroke="#a0ffff" stroke-width="0.8"/></g></svg>
<div class="btnp" style="left:128px;top:78px"></div>
<svg style="left:130px;top:79px" width="18" height="18" viewBox="0 0 18 18"><path d="M3 8.2 L6.2 4.8 H10 M14.2 8.8 V12.4 L11 15.8 H3 V8.2 H11 V15.8 M11 8.2 L12.6 6.6" fill="none" stroke="#0000ff" stroke-width="1.3"/><g transform="translate(0 0)"><path d="M8.3 1.3 H17 L13.8 5 V8.6 H11.5 V5 Z" fill="#00ffff" stroke="#000" stroke-width="1.3" stroke-linejoin="round"/><path d="M9.5 2.2 H15.8" stroke="#a0ffff" stroke-width="0.8"/></g></svg>
<div class="btnp" style="left:151px;top:78px"></div>
<svg style="left:153px;top:79px" width="18" height="18" viewBox="0 0 18 18"><path d="M1.8 2.2 H5.4 L9.2 6.8 L8.4 9.2 L5.6 9 L1.8 5.4 Z" fill="#ffff00" stroke="#000" stroke-width="1.1" stroke-linejoin="round"/><path d="M2 15.2 V12 L6 9.4 L8.8 10 L8.4 12.6 L5.2 15.2 Z" fill="#ffff00" stroke="#000" stroke-width="1.1" stroke-linejoin="round"/><path d="M8.6 10.2 L11.4 9.4 L16.2 11.8 L16.6 14.2 L13.6 15.2 L9 13.2 Z" fill="#ffff00" stroke="#000" stroke-width="1.1" stroke-linejoin="round"/><circle cx="12.1" cy="6.4" r="3.7" fill="#ffff00" stroke="#000" stroke-width="1.1"/><path d="M10.6 4.8 h1.2 v1.2 h-1.2 Z M12.8 4.8 h1.2 v1.2 h-1.2 Z M11.7 6 h1.2 v1.2 h-1.2 Z M10.6 7.2 h1.2 v1.2 h-1.2 Z M12.8 7.2 h1.2 v1.2 h-1.2 Z" fill="#ffffc8"/><path d="M3.4 3.6 L7.4 7.8 M3.4 13.8 L7 11 M10 11.4 L14.8 13.6" stroke="#ffffb0" stroke-width="0.9" fill="none"/><g transform="translate(0 0)"><path d="M8.3 1.3 H17 L13.8 5 V8.6 H11.5 V5 Z" fill="#00ffff" stroke="#000" stroke-width="1.3" stroke-linejoin="round"/><path d="M9.5 2.2 H15.8" stroke="#a0ffff" stroke-width="0.8"/></g></svg>
<div class="btnp" style="left:174px;top:78px"></div>
<svg style="left:176px;top:79px" width="18" height="18" viewBox="0 0 18 18"><rect x="1.9" y="3.1" width="11.3" height="11" fill="#ffff00" stroke="#000" stroke-width="1.3"/><path d="M2.6 3.8 L12.5 13.4 M12.5 3.8 L2.6 13.4 M7.55 3.8 V13.4 M2.6 8.6 H12.5" stroke="#8c8c8c" stroke-width="1"/><circle cx="7.55" cy="8.6" r="0.9" fill="#e8e8e8"/><g transform="translate(0 0)"><path d="M8.3 1.3 H17 L13.8 5 V8.6 H11.5 V5 Z" fill="#00ffff" stroke="#000" stroke-width="1.3" stroke-linejoin="round"/><path d="M9.5 2.2 H15.8" stroke="#a0ffff" stroke-width="0.8"/></g></svg>
<div class="btnp" style="left:197px;top:78px"></div>
<svg style="left:199px;top:79px" width="18" height="18" viewBox="0 0 18 18"><path d="M8.6 2 L15.5 8.2 L8.8 15.4 L1.8 8.6 Z" fill="#80ff80" stroke="#00a000" stroke-width="1"/><path d="M5 5.6 L12 12.2 M6.8 3.8 L13.8 10.2 M3.4 7.2 L10.4 13.8 M3.2 10 L10.2 3.4 M5 11.8 L12 5 M7 13.6 L14 6.8" stroke="#00c000" stroke-width="0.7"/><path d="M1.6 1.2 L6.4 5.2 M8.2 7 L10 8.6 M11.4 10 L16.4 15.6" stroke="#000" stroke-width="1.1"/><g transform="translate(0 0)"><path d="M8.3 1.3 H17 L13.8 5 V8.6 H11.5 V5 Z" fill="#00ffff" stroke="#000" stroke-width="1.3" stroke-linejoin="round"/><path d="M9.5 2.2 H15.8" stroke="#a0ffff" stroke-width="0.8"/></g></svg>
<div class="btnp" style="left:220px;top:78px"></div>
<svg style="left:222px;top:79px" width="18" height="18" viewBox="0 0 18 18"><path d="M4 3.4 V14.8 H14 M4 14.8 L9.8 9" fill="none" stroke="#0000ff" stroke-width="1.4"/><g transform="translate(0 0)"><path d="M8.3 1.3 H17 L13.8 5 V8.6 H11.5 V5 Z" fill="#00ffff" stroke="#000" stroke-width="1.3" stroke-linejoin="round"/><path d="M9.5 2.2 H15.8" stroke="#a0ffff" stroke-width="0.8"/></g></svg>
<div class="btnp" style="left:243px;top:78px"></div>
<svg style="left:245px;top:79px" width="18" height="18" viewBox="0 0 18 18"><rect x="2.6" y="9.4" width="13" height="6.2" fill="#fff" stroke="#000" stroke-width="1.3"/><path d="M3.4 15 Q6 10 9 11.4 Q12 9 14.8 15 M3.6 14.8 Q9 8.6 14.6 14" fill="none" stroke="#0000ff" stroke-width="0.9"/><path d="M12.6 8.6 V9.6" stroke="#000" stroke-width="2.2"/><g transform="translate(0 0)"><path d="M8.3 1.3 H17 L13.8 5 V8.6 H11.5 V5 Z" fill="#00ffff" stroke="#000" stroke-width="1.3" stroke-linejoin="round"/><path d="M9.5 2.2 H15.8" stroke="#a0ffff" stroke-width="0.8"/></g></svg>
<div class="btnp" style="left:266px;top:78px"></div>
<svg style="left:268px;top:79px" width="18" height="18" viewBox="0 0 18 18"><path d="M2.4 14.6 h3.2 M4 13 v3.2" stroke="#0000ff" stroke-width="1.1"/><path d="M3.8 10.4 h3.2 M5.4 8.8 v3.2" stroke="#0000ff" stroke-width="1.1"/><path d="M6.6 7.2 h3.2 M8.2 5.6 v3.2" stroke="#0000ff" stroke-width="1.1"/><path d="M14.6 6.4 h3.2 M16.2 4.8 v3.2" stroke="#0000ff" stroke-width="1.1"/><g transform="translate(0 0)"><path d="M8.3 1.3 H17 L13.8 5 V8.6 H11.5 V5 Z" fill="#00ffff" stroke="#000" stroke-width="1.3" stroke-linejoin="round"/><path d="M9.5 2.2 H15.8" stroke="#a0ffff" stroke-width="0.8"/></g></svg>
<div class="btnp" style="left:289px;top:78px"></div>
<svg style="left:291px;top:79px" width="18" height="18" viewBox="0 0 18 18"><rect x="2.8" y="14" width="1.8" height="1.8" fill="#0000ff"/><rect x="5" y="10.6" width="1.8" height="1.8" fill="#0000ff"/><rect x="7.8" y="8" width="1.8" height="1.8" fill="#0000ff"/><rect x="10.6" y="7" width="1.8" height="1.8" fill="#0000ff"/><rect x="14.6" y="8.4" width="1.8" height="1.8" fill="#0000ff"/><g transform="translate(0 0)"><path d="M8.3 1.3 H17 L13.8 5 V8.6 H11.5 V5 Z" fill="#00ffff" stroke="#000" stroke-width="1.3" stroke-linejoin="round"/><path d="M9.5 2.2 H15.8" stroke="#a0ffff" stroke-width="0.8"/></g></svg>
<div class="btnp" style="left:312px;top:78px"></div>
<svg style="left:314px;top:79px" width="18" height="18" viewBox="0 0 18 18"><path d="M2.6 4 H7 L8 5.4 H11 V12 H2.6 Z" fill="#fff" stroke="#000" stroke-width="1.3"/><path d="M2.4 15.6 H10" stroke="#0000ff" stroke-width="1.4"/><path d="M14.2 5 L9.6 13.4" stroke="#0000ff" stroke-width="3.2"/><path d="M13 7.4 L10.6 11.6" stroke="#ff00ff" stroke-width="1.8"/><path d="M9.6 13.2 L8.8 15.4" stroke="#0000ff" stroke-width="1.2"/><g transform="translate(0 0)"><path d="M8.3 1.3 H17 L13.8 5 V8.6 H11.5 V5 Z" fill="#00ffff" stroke="#000" stroke-width="1.3" stroke-linejoin="round"/><path d="M9.5 2.2 H15.8" stroke="#a0ffff" stroke-width="0.8"/></g></svg>
<div class="btnp" style="left:335px;top:78px"></div>
<svg style="left:337px;top:79px" width="18" height="18" viewBox="0 0 18 18"><text x="1.4" y="15.8" font-size="11" font-weight="bold" fill="#0000ff" font-family="Liberation Sans">x=</text><g transform="translate(0 0)"><path d="M8.3 1.3 H17 L13.8 5 V8.6 H11.5 V5 Z" fill="#00ffff" stroke="#000" stroke-width="1.3" stroke-linejoin="round"/><path d="M9.5 2.2 H15.8" stroke="#a0ffff" stroke-width="0.8"/></g></svg>
<div class="btnp" style="left:358px;top:78px"></div>
<svg style="left:360px;top:79px" width="18" height="18" viewBox="0 0 18 18"><g transform="translate(-1 0.6)"><path d="M2.2 6.4 L6.2 4 L7.9 2.4 H12.2 L15.6 5 V12.4 L13.2 13.8 L10.2 14.1 L7.5 15.8 H3.8 L3.2 13.8 L4.2 10.1 L2.2 8.1 Z" fill="#f0f0f0" stroke="#0000ff" stroke-width="1.25" stroke-linejoin="round"/><path d="M5.2 4.7 L7.5 7 V14.8 M8.5 3 L10.5 5.4 V13.8 M11.9 3.4 L13.9 5.4 V12.8" fill="none" stroke="#ff0000" stroke-width="1.2"/></g><g transform="translate(0 0)"><path d="M8.3 1.3 H17 L13.8 5 V8.6 H11.5 V5 Z" fill="#00ffff" stroke="#000" stroke-width="1.3" stroke-linejoin="round"/><path d="M9.5 2.2 H15.8" stroke="#a0ffff" stroke-width="0.8"/></g></svg>
<svg style="left:383px;top:79px" width="18" height="18" viewBox="0 0 18 18"><path d="M5.4 7.6 H9.6 M14 9.4 L12 11.4 H1.6 L5.4 7.6" fill="none" stroke="#000" stroke-width="1.1"/><path d="M1.8 13.2 L4.6 10.4 H15.6 L12.6 13.2 Z" fill="none" stroke="#00c000" stroke-width="1.2"/><path d="M1.8 16 L4.6 13.4 M12.6 16 H1.8 M12.6 16 L15.6 13.2" fill="none" stroke="#000" stroke-width="1.1"/><g transform="translate(0 -0.4)"><path d="M8.3 1.3 H17 L13.8 5 V8.6 H11.5 V5 Z" fill="#00ffff" stroke="#000" stroke-width="1.3" stroke-linejoin="round"/><path d="M9.5 2.2 H15.8" stroke="#a0ffff" stroke-width="0.8"/></g></svg>
<div class="vsep" style="left:410px;top:74px;height:28px;background:#b0b0b0"></div>
<div class="vsep" style="left:411px;top:74px;height:28px;background:#ffffff"></div>
<div class="grip" style="left:415px;top:78px"></div>
<svg style="left:427px;top:79px" width="18" height="18" viewBox="0 0 18 18"><path d="M1 1.4 L4.4 4.2 M17 1.4 L13.6 4.2 M0.6 7 H3.2 M17.4 7 H14.8 M1 15.6 L5.4 11.4 M17 15.6 L12.6 11.4 M1.4 11.4 L4 9.8 M16.6 11.4 L14 9.8" stroke="#ffff00" stroke-width="1.2"/><path d="M9 1.6 C4.6 1.6 3.2 5 3.8 7.4 C4.4 9.4 6.2 10.4 6.4 12.2 H11.6 C11.8 10.4 13.6 9.4 14.2 7.4 C14.8 5 13.4 1.6 9 1.6 Z" fill="#ffff00" stroke="#000" stroke-width="1.3"/><path d="M6.2 3.4 Q8 2.2 10 2.6" stroke="#ffffc0" stroke-width="1.2" fill="none"/><path d="M6.6 13.4 H11.4 M6.8 15 H11.2 M7.6 16.4 H10.4" stroke="#000" stroke-width="1.1"/></svg>
<svg style="left:450px;top:79px" width="18" height="18" viewBox="0 0 18 18"><rect x="1" y="1.4" width="7" height="14.6" fill="#00ffff"/><rect x="2.3" y="2.1" width="5.7" height="1.04286" fill="#909090"/><rect x="2.3" y="4.18571" width="5.7" height="1.04286" fill="#909090"/><rect x="2.3" y="6.27143" width="5.7" height="1.04286" fill="#909090"/><rect x="2.3" y="8.35714" width="5.7" height="1.04286" fill="#909090"/><rect x="2.3" y="10.4429" width="5.7" height="1.04286" fill="#909090"/><rect x="2.3" y="12.5286" width="5.7" height="1.04286" fill="#909090"/><rect x="2.3" y="14.6143" width="5.7" height="1.04286" fill="#909090"/><g transform="translate(8.8 5.4)"><path d="M4 0.6 C1.6 0.6 0.6 2.4 0.7 3.8 C0.8 5.3 2.2 6 2.5 7.2 H5.5 C5.8 6 7.2 5.3 7.3 3.8 C7.4 2.4 6.4 0.6 4 0.6 Z" fill="#ffff00" stroke="#000" stroke-width="1.2"/><path d="M2.6 8.6 H5.4 M3 10.2 H5" stroke="#000" stroke-width="1.3"/></g></svg>
<svg style="left:473px;top:79px" width="18" height="18" viewBox="0 0 18 18"><path d="M1.4 3.2 L5.8 7.6 M5.8 3.2 L1.4 7.6" stroke="#ff0000" stroke-width="1"/><g transform="translate(8.8 5.4)"><path d="M4 0.6 C1.6 0.6 0.6 2.4 0.7 3.8 C0.8 5.3 2.2 6 2.5 7.2 H5.5 C5.8 6 7.2 5.3 7.3 3.8 C7.4 2.4 6.4 0.6 4 0.6 Z" fill="#ffff00" stroke="#000" stroke-width="1.2"/><path d="M2.6 8.6 H5.4 M3 10.2 H5" stroke="#000" stroke-width="1.3"/></g></svg>
<svg style="left:496px;top:79px" width="18" height="18" viewBox="0 0 18 18"><g transform="translate(-1.4 -0.4)"><path d="M2.2 6.4 L6.2 4 L7.9 2.4 H12.2 L15.6 5 V12.4 L13.2 13.8 L10.2 14.1 L7.5 15.8 H3.8 L3.2 13.8 L4.2 10.1 L2.2 8.1 Z" fill="#f0f0f0" stroke="#0000ff" stroke-width="1.25" stroke-linejoin="round"/><path d="M5.2 4.7 L7.5 7 V14.8 M8.5 3 L10.5 5.4 V13.8 M11.9 3.4 L13.9 5.4 V12.8" fill="none" stroke="#ff0000" stroke-width="1.2"/></g><g transform="translate(8.2 5.6)"><path d="M4 0.6 C1.6 0.6 0.6 2.4 0.7 3.8 C0.8 5.3 2.2 6 2.5 7.2 H5.5 C5.8 6 7.2 5.3 7.3 3.8 C7.4 2.4 6.4 0.6 4 0.6 Z" fill="#ffff00" stroke="#000" stroke-width="1.2"/><path d="M2.6 8.6 H5.4 M3 10.2 H5" stroke="#000" stroke-width="1.3"/></g></svg>
<svg style="left:519px;top:79px" width="18" height="18" viewBox="0 0 18 18"><rect x="1" y="2.4" width="1.4" height="10.2" fill="#00ffff"/><rect x="1" y="2.4" width="7" height="1.4" fill="#00ffff"/><rect x="1" y="5.15" width="7" height="1.4" fill="#00ffff"/><rect x="1" y="7.9" width="7" height="1.4" fill="#00ffff"/><rect x="1" y="10.65" width="7" height="1.9" fill="#000"/><g transform="translate(9 5.4)"><path d="M4 0.6 C1.6 0.6 0.6 2.4 0.7 3.8 C0.8 5.3 2.2 6 2.5 7.2 H5.5 C5.8 6 7.2 5.3 7.3 3.8 C7.4 2.4 6.4 0.6 4 0.6 Z" fill="#ffff00" stroke="#000" stroke-width="1.2"/><path d="M2.6 8.6 H5.4 M3 10.2 H5" stroke="#000" stroke-width="1.3"/></g></svg>
<svg style="left:542px;top:79px" width="18" height="18" viewBox="0 0 18 18"><rect x="1" y="4.2" width="1.4" height="10.2" fill="#00ffff"/><rect x="1" y="4.2" width="7" height="1.9" fill="#000"/><rect x="1" y="6.95" width="7" height="1.4" fill="#00ffff"/><rect x="1" y="9.7" width="7" height="1.4" fill="#00ffff"/><rect x="1" y="12.45" width="7" height="1.4" fill="#00ffff"/><rect x="2.4" y="7.7" width="5.6" height="1" fill="#c09090"/><rect x="2.4" y="10.4" width="5.6" height="1" fill="#c09090"/><rect x="2.4" y="13.1" width="5.6" height="1" fill="#c09090"/><g transform="translate(9 5.4)"><path d="M4 0.6 C1.6 0.6 0.6 2.4 0.7 3.8 C0.8 5.3 2.2 6 2.5 7.2 H5.5 C5.8 6 7.2 5.3 7.3 3.8 C7.4 2.4 6.4 0.6 4 0.6 Z" fill="#ffff00" stroke="#000" stroke-width="1.2"/><path d="M2.6 8.6 H5.4 M3 10.2 H5" stroke="#000" stroke-width="1.3"/></g></svg>
<div class="vsep" style="left:565px;top:79px;height:18px;background:#8c8c8c"></div>
<svg style="left:573px;top:79px" width="18" height="18" viewBox="0 0 18 18"><path d="M9 1.6 C4.6 1.6 3.2 5 3.8 7.4 C4.4 9.4 6.2 10.4 6.4 12.2 H11.6 C11.8 10.4 13.6 9.4 14.2 7.4 C14.8 5 13.4 1.6 9 1.6 Z" fill="#a0a0a0" stroke="#000" stroke-width="1.3"/><path d="M6.2 3.4 Q8 2.2 10 2.6" stroke="#d0d0d0" stroke-width="1.2" fill="none"/><path d="M6.6 13.4 H11.4 M6.8 15 H11.2 M7.6 16.4 H10.4" stroke="#000" stroke-width="1.1"/></svg>
<svg style="left:596px;top:79px" width="18" height="18" viewBox="0 0 18 18"><rect x="1" y="1.4" width="7" height="14.6" fill="#00ffff"/><rect x="2.3" y="2.1" width="5.7" height="1.04286" fill="#909090"/><rect x="2.3" y="4.18571" width="5.7" height="1.04286" fill="#909090"/><rect x="2.3" y="6.27143" width="5.7" height="1.04286" fill="#909090"/><rect x="2.3" y="8.35714" width="5.7" height="1.04286" fill="#909090"/><rect x="2.3" y="10.4429" width="5.7" height="1.04286" fill="#909090"/><rect x="2.3" y="12.5286" width="5.7" height="1.04286" fill="#909090"/><rect x="2.3" y="14.6143" width="5.7" height="1.04286" fill="#909090"/><g transform="translate(8.8 5.4)"><path d="M4 0.6 C1.6 0.6 0.6 2.4 0.7 3.8 C0.8 5.3 2.2 6 2.5 7.2 H5.5 C5.8 6 7.2 5.3 7.3 3.8 C7.4 2.4 6.4 0.6 4 0.6 Z" fill="#a0a0a0" stroke="#000" stroke-width="1.2"/><path d="M2.6 8.6 H5.4 M3 10.2 H5" stroke="#000" stroke-width="1.3"/></g></svg>
<svg style="left:619px;top:79px" width="18" height="18" viewBox="0 0 18 18"><path d="M1.4 3.2 L5.8 7.6 M5.8 3.2 L1.4 7.6" stroke="#ff0000" stroke-width="1"/><g transform="translate(8.8 5.4)"><path d="M4 0.6 C1.6 0.6 0.6 2.4 0.7 3.8 C0.8 5.3 2.2 6 2.5 7.2 H5.5 C5.8 6 7.2 5.3 7.3 3.8 C7.4 2.4 6.4 0.6 4 0.6 Z" fill="#a0a0a0" stroke="#000" stroke-width="1.2"/><path d="M2.6 8.6 H5.4 M3 10.2 H5" stroke="#000" stroke-width="1.3"/></g></svg>
<svg style="left:642px;top:79px" width="18" height="18" viewBox="0 0 18 18"><g transform="translate(-1.4 -0.4)"><path d="M2.2 6.4 L6.2 4 L7.9 2.4 H12.2 L15.6 5 V12.4 L13.2 13.8 L10.2 14.1 L7.5 15.8 H3.8 L3.2 13.8 L4.2 10.1 L2.2 8.1 Z" fill="#f0f0f0" stroke="#0000ff" stroke-width="1.25" stroke-linejoin="round"/><path d="M5.2 4.7 L7.5 7 V14.8 M8.5 3 L10.5 5.4 V13.8 M11.9 3.4 L13.9 5.4 V12.8" fill="none" stroke="#ff0000" stroke-width="1.2"/></g><g transform="translate(8.2 5.6)"><path d="M4 0.6 C1.6 0.6 0.6 2.4 0.7 3.8 C0.8 5.3 2.2 6 2.5 7.2 H5.5 C5.8 6 7.2 5.3 7.3 3.8 C7.4 2.4 6.4 0.6 4 0.6 Z" fill="#a0a0a0" stroke="#000" stroke-width="1.2"/><path d="M2.6 8.6 H5.4 M3 10.2 H5" stroke="#000" stroke-width="1.3"/></g></svg>
<svg style="left:665px;top:79px" width="18" height="18" viewBox="0 0 18 18"><rect x="1" y="2.4" width="1.4" height="10.2" fill="#00ffff"/><rect x="1" y="2.4" width="7" height="1.4" fill="#00ffff"/><rect x="1" y="5.15" width="7" height="1.4" fill="#00ffff"/><rect x="1" y="7.9" width="7" height="1.4" fill="#00ffff"/><rect x="1" y="10.65" width="7" height="1.9" fill="#000"/><g transform="translate(9 5.4)"><path d="M4 0.6 C1.6 0.6 0.6 2.4 0.7 3.8 C0.8 5.3 2.2 6 2.5 7.2 H5.5 C5.8 6 7.2 5.3 7.3 3.8 C7.4 2.4 6.4 0.6 4 0.6 Z" fill="#a0a0a0" stroke="#000" stroke-width="1.2"/><path d="M2.6 8.6 H5.4 M3 10.2 H5" stroke="#000" stroke-width="1.3"/></g></svg>
<svg style="left:688px;top:79px" width="18" height="18" viewBox="0 0 18 18"><rect x="1" y="4.2" width="1.4" height="10.2" fill="#00ffff"/><rect x="1" y="4.2" width="7" height="1.9" fill="#000"/><rect x="1" y="6.95" width="7" height="1.4" fill="#00ffff"/><rect x="1" y="9.7" width="7" height="1.4" fill="#00ffff"/><rect x="1" y="12.45" width="7" height="1.4" fill="#00ffff"/><rect x="2.4" y="7.7" width="5.6" height="1" fill="#c09090"/><rect x="2.4" y="10.4" width="5.6" height="1" fill="#c09090"/><rect x="2.4" y="13.1" width="5.6" height="1" fill="#c09090"/><g transform="translate(9 5.4)"><path d="M4 0.6 C1.6 0.6 0.6 2.4 0.7 3.8 C0.8 5.3 2.2 6 2.5 7.2 H5.5 C5.8 6 7.2 5.3 7.3 3.8 C7.4 2.4 6.4 0.6 4 0.6 Z" fill="#a0a0a0" stroke="#000" stroke-width="1.2"/><path d="M2.6 8.6 H5.4 M3 10.2 H5" stroke="#000" stroke-width="1.3"/></g></svg>
<svg style="left:711px;top:79px" width="18" height="18" viewBox="0 0 18 18"><path d="M1 5.6 H8 M1 8.2 H8 M1 10.8 H8" stroke="#000" stroke-width="1.3"/><rect x="1" y="5" width="1.3" height="6.4" fill="#000"/><g transform="translate(9.4 5.4)"><path d="M4 0.6 C1.6 0.6 0.6 2.4 0.7 3.8 C0.8 5.3 2.2 6 2.5 7.2 H5.5 C5.8 6 7.2 5.3 7.3 3.8 C7.4 2.4 6.4 0.6 4 0.6 Z" fill="#a0a0a0" stroke="#000" stroke-width="1.2"/><path d="M2.6 8.6 H5.4 M3 10.2 H5" stroke="#000" stroke-width="1.3"/></g></svg>
<div class="vsep" style="left:738px;top:74px;height:28px;background:#b0b0b0"></div>
<div class="vsep" style="left:739px;top:74px;height:28px;background:#ffffff"></div>
<div class="grip" style="left:743px;top:78px"></div>
<svg style="left:755px;top:79px" width="18" height="18" viewBox="0 0 18 18"><path d="M5.6 4.4 H12.4 L16.4 9.2 L12.6 14 H5.4 L1.6 9.2 Z" fill="#00ffff" stroke="#0000ff" stroke-width="1.3"/><path d="M9 4.6 V14 M5.8 5.2 L8.6 9 M12.2 5.2 L9.4 9" stroke="#000" stroke-width="1.1" fill="none"/></svg>
<svg style="left:778px;top:79px" width="18" height="18" viewBox="0 0 18 18"><path d="M7.2 4.4 H10.8 V6.4 Q14.8 7.4 16.4 10 L12.8 14 H5.2 L1.6 10 Q3.2 7.4 7.2 6.4 Z" fill="#00ffff" stroke="#0000ff" stroke-width="1.3"/><path d="M5.4 9 Q9 13 12.6 9" fill="none" stroke="#000" stroke-width="1.6"/></svg>
<svg style="left:801px;top:79px" width="18" height="18" viewBox="0 0 18 18"><path d="M6.6 5.2 H10.6 L11.6 7 H17.2 V11.4 H5 L1 7.8 H5.6 Z" fill="#00ffff" stroke="#0000ff" stroke-width="1.1"/><path d="M1.4 8.2 L5 11.6 H17.2 V8" fill="none" stroke="#000" stroke-width="1.2"/></svg>
<svg style="left:824px;top:79px" width="18" height="18" viewBox="0 0 18 18"><path d="M7.4 5.2 H11.4 L12.4 7 H17 L13 11.4 H0.8 V7 H6.4 Z" fill="#00ffff" stroke="#0000ff" stroke-width="1.1"/><path d="M0.8 7.6 V11.6 H13" fill="none" stroke="#000" stroke-width="1.2"/></svg>
<svg style="left:847px;top:79px" width="18" height="18" viewBox="0 0 18 18"><path d="M3.6 5.6 H11 L16.6 9.4 L11 13.2 H3.6 Q1.2 13 1.2 9.4 Q1.2 5.8 3.6 5.6 Z" fill="#00ffff" stroke="#0000ff" stroke-width="1.3"/><path d="M8 7.2 H11 L13 9.4 L11 11.6 H8 Z" fill="none" stroke="#000" stroke-width="1.2"/></svg>
<svg style="left:870px;top:79px" width="18" height="18" viewBox="0 0 18 18"><path d="M3.6 5.6 H11 L16.6 9.4 L11 13.2 H3.6 Q1.2 13 1.2 9.4 Q1.2 5.8 3.6 5.6 Z" fill="#00ffff" stroke="#0000ff" stroke-width="1.3"/><path d="M1.6 9.4 H15.6" stroke="#000" stroke-width="1.3"/></svg>
<div class="vsep" style="left:893px;top:79px;height:18px;background:#8c8c8c"></div>
<svg style="left:900px;top:79px" width="18" height="18" viewBox="0 0 18 18"><rect x="10.6" y="1.6" width="1.8" height="5" fill="#a00000"/><path d="M3.4 8.6 L8.4 3.6 L14.6 8.6 V12.6 L12.4 14.8 H3.4 Z" fill="#ff00ff" stroke="#000" stroke-width="0.9"/><path d="M2.4 9 L8.4 3 L15.4 8.8" fill="none" stroke="#0000ff" stroke-width="1.8"/><rect x="6.6" y="10.6" width="2.2" height="4.2" fill="#000"/><path d="M12.4 9.6 V14.8" stroke="#000" stroke-width="0.9"/></svg>
<div class="vsep" style="left:928px;top:74px;height:28px;background:#b0b0b0"></div>
<div class="vsep" style="left:929px;top:74px;height:28px;background:#ffffff"></div>
<div class="grip" style="left:933px;top:78px"></div>
<svg style="left:945px;top:79px" width="18" height="18" viewBox="0 0 18 18"><path d="M2.4 3 L4 1.8 L16.2 11.2 Q17.6 14 15.6 15.6 Q13.4 16.8 11.4 15 Z" fill="#fff" stroke="#000" stroke-width="1.2"/><path d="M3.6 3 L13 14.4" stroke="#00c0c0" stroke-width="2.2"/><ellipse cx="14.4" cy="13.6" rx="2.2" ry="1.8" fill="#fff" stroke="#000" stroke-width="0.9"/><path d="M17.6 3.6 H12.6 M14.4 1.6 L12.4 3.6 L14.4 5.6" fill="none" stroke="#000" stroke-width="1.1"/></svg>
<div class="vsep" style="left:968px;top:79px;height:18px;background:#8c8c8c"></div>
<svg style="left:976px;top:79px" width="18" height="18" viewBox="0 0 18 18"><path d="M10.6 10.6 L16.4 16" stroke="#000" stroke-width="3"/><path d="M11 11 L16 15.6" stroke="#00c0c0" stroke-width="1.6"/><circle cx="7.2" cy="7" r="5.2" fill="#fff" stroke="#000" stroke-width="1.3"/><rect x="4.6" y="4.4" width="5.2" height="5.2" fill="#a0a0a0" stroke="#000" stroke-width="0.9"/><path d="M5 4.8 L9.4 9.2 M9.4 4.8 L5 9.2" stroke="#fff" stroke-width="0.7"/></svg>
<svg style="left:999px;top:79px" width="18" height="18" viewBox="0 0 18 18"><path d="M10.6 10.6 L16.4 16" stroke="#000" stroke-width="3"/><path d="M11 11 L16 15.6" stroke="#00c0c0" stroke-width="1.6"/><circle cx="7.2" cy="7" r="5.2" fill="#fff" stroke="#000" stroke-width="1.3"/><path d="M4.2 7 H10.2 M7.2 4 V10" stroke="#000" stroke-width="1.8"/></svg>
<svg style="left:1022px;top:79px" width="18" height="18" viewBox="0 0 18 18"><path d="M10.6 10.6 L16.4 16" stroke="#000" stroke-width="3"/><path d="M11 11 L16 15.6" stroke="#00c0c0" stroke-width="1.6"/><circle cx="6.6" cy="7" r="5.6" fill="#fff" stroke="#000" stroke-width="1.3"/><path d="M15.6 2.6 V11 M14 4.6 L15.6 2.4 L17.2 4.6 M14 9.2 L15.6 11.4 L17.2 9.2" fill="none" stroke="#000" stroke-width="1.1"/></svg>
<svg style="left:1045px;top:79px" width="18" height="18" viewBox="0 0 18 18"><path d="M10.6 10.6 L16.4 16" stroke="#000" stroke-width="3"/><path d="M11 11 L16 15.6" stroke="#00c0c0" stroke-width="1.6"/><circle cx="7.2" cy="7" r="5.2" fill="#fff" stroke="#000" stroke-width="1.3"/><path d="M4.2 5.6 H10.2 M4.2 8.4 H10.2" stroke="#000" stroke-width="1.6"/></svg>
<svg style="left:1068px;top:79px" width="18" height="18" viewBox="0 0 18 18"><path d="M2.6 8.6 Q3 3 9 2.6 Q12.6 2.8 14.6 5.6 M15.6 9.8 Q15 15.2 9 15.6 Q5.4 15.4 3.6 12.6" fill="none" stroke="#000" stroke-width="1.3"/><path d="M15.8 2.6 V7.4 H11 Z M2.4 15.6 V10.8 H7.2 Z" fill="#000"/></svg>
<svg style="left:1091px;top:79px" width="18" height="18" viewBox="0 0 18 18"><path d="M9 2.4 V15.6 M2.4 9 H15.6" stroke="#000" stroke-width="1.6"/><path d="M9 1 L12 4.6 H6 Z M9 17 L12 13.4 H6 Z M1 9 L4.6 6 V12 Z M17 9 L13.4 6 V12 Z" fill="#000"/></svg>
<div class="vsep" style="left:1118px;top:74px;height:28px;background:#b0b0b0"></div>
<div class="vsep" style="left:1119px;top:74px;height:28px;background:#ffffff"></div>
<div class="grip" style="left:1123px;top:78px"></div>
<svg style="left:1135px;top:79px" width="18" height="18" viewBox="0 0 18 18"><path d="M2 3 H11.4 L16.4 7.8 V16.6 H7 L2 11.8 Z M2 3 L7 7.8 H16.4 M7 7.8 V16.6 M11.4 3 V11.8 H2 M11.4 11.8 L16.4 16.6" fill="none" stroke="#000" stroke-width="1.2"/></svg>
<div class="btnp" style="left:1156px;top:78px"></div>
<svg style="left:1158px;top:79px" width="18" height="18" viewBox="0 0 18 18"><path d="M2 3 H11.4 L16.4 7.8 V16.6 H7 L2 11.8 Z" fill="#00f0f0" stroke="#000" stroke-width="1.4"/><path d="M7 7.8 H16.4 V16.6 H7 Z" fill="#80f8f8" stroke="#000" stroke-width="1.4"/><path d="M2 3 L7 7.8" stroke="#000" stroke-width="1.4"/><path d="M2.6 4.6 L6.4 8.2 V15 L2.6 11.4 Z" fill="#40c8d0"/></svg>
<svg style="left:1181px;top:79px" width="18" height="18" viewBox="0 0 18 18"><path d="M1.6 2 H11 L16.4 7.4 V16.4 H7.4 L1.6 10.6 Z" fill="#00a0a0"/><path d="M1.6 2 H11 L16.4 7.4 H7.4 Z" fill="#00ffff"/><path d="M7.4 7.4 H16.4 V16.4 H7.4 Z" fill="#30d0d0"/><path d="M10 3 L12 5 M9 4.4 L10.4 5.8" stroke="#e0ffff" stroke-width="0.9"/></svg>
<svg style="left:1204px;top:79px" width="18" height="18" viewBox="0 0 18 18"><path d="M2 3 H11.4 L16.4 7.8 V16.6 H7 L2 11.8 Z" fill="#00f0f0" stroke="#000" stroke-width="1.4"/><path d="M7 7.8 H16.4 V16.6 H7 Z" fill="#80f8f8" stroke="#000" stroke-width="1.4"/><path d="M2 3 L7 7.8" stroke="#000" stroke-width="1.4"/><path d="M3 4.6 L6.4 8 V14.6 L3 11.2 Z" fill="#40c8d0"/><path d="M2 3.4 L7 16" stroke="#000" stroke-width="1"/></svg>
<svg style="left:1227px;top:79px" width="18" height="18" viewBox="0 0 18 18"><path d="M2.8 5.4 Q6 1.6 9.4 2 Q13 3 16.4 6 Q13 10 12 13 L10.6 16.4 H7.6 Q3.4 11 2.8 5.4 Z" fill="#a0a0a0"/></svg>
<svg style="left:1250px;top:79px" width="18" height="18" viewBox="0 0 18 18"><rect x="1.8" y="3.6" width="14.6" height="7.4" fill="#fff" stroke="#000" stroke-width="1.3"/><path d="M2.8 10 Q4.4 6 7.6 4.6 Q9.6 6.6 11.6 7.4 H16" fill="none" stroke="#ff0000" stroke-width="1.1"/><path d="M13 16.6 H16.6 V13 Z" fill="#000"/></svg>
<div class="a" style="left:0;top:104px;width:222px;height:926px;background:#ffffff"></div>
<div class="a" style="left:222px;top:104px;width:1px;height:926px;background:#a0a0a0"></div>
<div class="a" style="left:223px;top:104px;width:1px;height:926px;background:#696969"></div>
<div class="phead" style="top:105px"><span>Entities</span></div>
<svg style="left:209px;top:109px" width="7" height="6" viewBox="0 0 7 6"><path d="M0.8 0.5 L6.2 5.5 M6.2 0.5 L0.8 5.5" stroke="#000" stroke-width="1.7"/></svg>
<div class="a" style="left:3px;top:119px;width:215px;height:366px;background:#f0f0f0"></div><div class="a" style="left:3px;top:119px;width:215px;height:1px;background:#a0a0a0"></div><div class="a" style="left:3px;top:120px;width:214px;height:1px;background:#696969"></div><div class="a" style="left:3px;top:119px;width:1px;height:366px;background:#a0a0a0"></div><div class="a" style="left:4px;top:120px;width:1px;height:365px;background:#696969"></div><div class="a" style="left:217px;top:120px;width:1px;height:365px;background:#e3e3e3"></div><div class="a" style="left:4px;top:484px;width:214px;height:1px;background:#e3e3e3"></div>
<div class="a" style="left:10px;top:126px;width:97px;height:18px;"></div>
<div class="a" style="left:62px;top:126px;width:45px;height:18px;background:linear-gradient(#f8f8f8,#f0f0f0 45%,#dadada);border:1px solid #8e8e8e;border-bottom:none;box-sizing:border-box"></div>
<div class="a" style="left:10px;top:124px;width:52px;height:21px;background:#ffffff;border:1px solid #8e8e8e;border-bottom:none;box-sizing:border-box"></div>
<div class="t tree" style="left:18px;top:129px;">Parents</div>
<div class="t tree" style="left:66px;top:131px;letter-spacing:-0.37px">Children</div>
<div class="a" style="left:10px;top:145px;width:190px;height:336px;background:#ffffff"></div>
<div class="a" style="left:200px;top:145px;width:17px;height:336px;background:#f0f0f0"></div>
<div class="a" style="left:201px;top:164px;width:13px;height:233px;border:1px solid #8f8f8f;border-radius:2px;background:linear-gradient(90deg,#f6f6f6,#e2e2e2 45%,#cfcfcf 55%,#dcdcdc)"></div>
<div class="a" style="left:205px;top:277px;width:7px;height:1px;background:#5a5a5a"></div>
<div class="a" style="left:205px;top:280px;width:7px;height:1px;background:#5a5a5a"></div>
<div class="a" style="left:205px;top:283px;width:7px;height:1px;background:#5a5a5a"></div>
<svg style="left:204px;top:151px" width="8" height="5" viewBox="0 0 8 5"><path d="M0 4.5 L4 0.5 L8 4.5 Z" fill="#404040"/></svg>
<svg style="left:204px;top:473px" width="8" height="5" viewBox="0 0 8 5"><path d="M0 0.5 L4 4.5 L8 0.5 Z" fill="#404040"/></svg>
<div class="dot-v" style="left:22px;top:154px;height:8px"></div>
<div class="dot-v" style="left:22px;top:208px;height:272px"></div>
<div class="dot-v" style="left:41px;top:209px;height:105px"></div>
<div class="dot-h" style="left:23px;top:153px;width:9px"></div>
<svg style="left:32px;top:145px" width="16" height="16" viewBox="0 0 16 16"><path d="M0 8 H4" stroke="#000" stroke-width="1.6"/><rect x="4" y="3.5" width="7.5" height="9" rx="2.5" fill="#ffff00" stroke="#000" stroke-width="1.2"/><path d="M11.5 5.7 H15.5 M11.5 10.3 H15.5" stroke="#000" stroke-width="2"/></svg>
<div class="t tree" style="left:53px;top:148px">Components</div>
<div class="dot-h" style="left:28px;top:169px;width:4px"></div>
<div class="a" style="left:19px;top:162px;width:7px;height:14px;background:#fff"></div>
<svg style="left:20px;top:165px" width="6" height="9" viewBox="0 0 6 9"><path d="M0.5 0.5 L5 4.5 L0.5 8.5 Z" fill="#fff" stroke="#a6a6a6" stroke-width="1"/></svg>
<svg style="left:32px;top:161px" width="16" height="16" viewBox="0 0 16 16"><path d="M0.3 4.8 Q1.6 1.4 4.8 0.6 Q10 1 14.8 4.8 Q10.8 8.2 8.8 12 Q7.8 14.4 6.4 14.8 Q4.6 14.2 3.6 11.4 Q2 7.4 0.3 4.8 Z" fill="#ffff00" stroke="#000" stroke-width="1.1"/><path d="M2.6 2.2 Q6 6 6.6 13.6 M7.6 1 Q9.6 5 8 11.6 M2 7.4 Q7 4 12.4 3.2 M3.6 11 Q7.6 7.4 11.6 6.8" stroke="#8a8a50" stroke-width="0.7" fill="none"/></svg>
<div class="t tree" style="left:53px;top:164px">Surfaces</div>
<div class="dot-h" style="left:28px;top:185px;width:4px"></div>
<div class="a" style="left:19px;top:178px;width:7px;height:14px;background:#fff"></div>
<svg style="left:20px;top:181px" width="6" height="9" viewBox="0 0 6 9"><path d="M0.5 0.5 L5 4.5 L0.5 8.5 Z" fill="#fff" stroke="#a6a6a6" stroke-width="1"/></svg>
<svg style="left:32px;top:177px" width="16" height="16" viewBox="0 0 16 16"><rect x="0.8" y="1.4" width="14.6" height="13.6" fill="#ffff8c"/><path d="M1.5 14 Q2.5 5.5 6.5 7 Q10 9.5 11.5 7 Q13.5 4.5 14.5 1.5" fill="none" stroke="#000" stroke-width="1.2"/></svg>
<div class="t tree" style="left:53px;top:180px">Curves</div>
<div class="dot-h" style="left:28px;top:201px;width:4px"></div>
<div class="a" style="left:19px;top:194px;width:7px;height:14px;background:#fff"></div>
<svg style="left:19px;top:199px" width="7" height="7" viewBox="0 0 7 7"><path d="M6 0.5 L6 6 L0.5 6 Z" fill="#404040" stroke="#262626" stroke-width="0.8"/></svg>
<svg style="left:32px;top:193px" width="16" height="16" viewBox="0 0 16 16"><rect x="0.8" y="1.4" width="14.6" height="13.6" fill="#ffff8c"/><path d="M3.5 3.5 L12.5 12.5 M12.5 3.5 L3.5 12.5" stroke="#000" stroke-width="1.1"/></svg>
<div class="t tree" style="left:53px;top:196px">Points</div>
<div class="dot-h" style="left:47px;top:217px;width:5px"></div>
<div class="a" style="left:38px;top:210px;width:7px;height:14px;background:#fff"></div>
<svg style="left:39px;top:213px" width="6" height="9" viewBox="0 0 6 9"><path d="M0.5 0.5 L5 4.5 L0.5 8.5 Z" fill="#fff" stroke="#a6a6a6" stroke-width="1"/></svg>
<svg style="left:52px;top:209px" width="16" height="16" viewBox="0 0 16 16"><rect x="0.8" y="1.4" width="14.6" height="13.6" fill="#ffff8c"/><path d="M3.5 3.5 L12.5 12.5 M12.5 3.5 L3.5 12.5" stroke="#000" stroke-width="1.1"/></svg>
<div class="t tree" style="left:72px;top:212px">3-D Points</div>
<div class="dot-h" style="left:42px;top:233px;width:10px"></div>
<svg style="left:52px;top:225px" width="16" height="16" viewBox="0 0 16 16"><rect x="0.8" y="1.4" width="14.6" height="13.6" fill="#ffff8c"/><path d="M1.5 15 Q3 8 8 7.5 Q13 7 14.5 1" fill="none" stroke="#000" stroke-width="1.15"/><circle cx="8.6" cy="7.4" r="2.6" fill="#ff0000"/></svg>
<div class="t tree" style="left:72px;top:228px">Beads</div>
<div class="dot-h" style="left:47px;top:249px;width:5px"></div>
<div class="a" style="left:38px;top:242px;width:7px;height:14px;background:#fff"></div>
<svg style="left:38px;top:247px" width="7" height="7" viewBox="0 0 7 7"><path d="M6 0.5 L6 6 L0.5 6 Z" fill="#404040" stroke="#262626" stroke-width="0.8"/></svg>
<svg style="left:52px;top:241px" width="16" height="16" viewBox="0 0 16 16"><path d="M0.9 5.6 Q2 2.2 5 1.4 Q10.2 1.6 14.6 5.2 Q10.6 8.6 8.6 12.2 Q7.6 14.8 6 15 Q4.4 14.6 3.6 12 Q2.2 8 0.9 5.6 Z" fill="#ffff00" stroke="#000" stroke-width="1.15"/><circle cx="5.6" cy="8" r="1.8" fill="#ff0000"/></svg>
<div class="t tree" style="left:72px;top:244px">Magnets</div>
<div class="dot-h" style="left:66px;top:265px;width:5px"></div>
<div class="a" style="left:57px;top:258px;width:7px;height:14px;background:#fff"></div>
<svg style="left:58px;top:261px" width="6" height="9" viewBox="0 0 6 9"><path d="M0.5 0.5 L5 4.5 L0.5 8.5 Z" fill="#fff" stroke="#a6a6a6" stroke-width="1"/></svg>
<svg style="left:71px;top:257px" width="16" height="16" viewBox="0 0 16 16"><path d="M0.9 5.6 Q2 2.2 5 1.4 Q10.2 1.6 14.6 5.2 Q10.6 8.6 8.6 12.2 Q7.6 14.8 6 15 Q4.4 14.6 3.6 12 Q2.2 8 0.9 5.6 Z" fill="#00ffff" stroke="#0000ff" stroke-width="1.15"/><circle cx="5.6" cy="8" r="1.8" fill="#ff0000"/></svg>
<div class="t tree" style="left:91px;top:260px">id_hull</div>
<div class="dot-h" style="left:47px;top:281px;width:5px"></div>
<div class="a" style="left:38px;top:274px;width:7px;height:14px;background:#fff"></div>
<svg style="left:39px;top:277px" width="6" height="9" viewBox="0 0 6 9"><path d="M0.5 0.5 L5 4.5 L0.5 8.5 Z" fill="#fff" stroke="#a6a6a6" stroke-width="1"/></svg>
<svg style="left:52px;top:273px" width="16" height="16" viewBox="0 0 16 16"><path d="M0.9 5.6 Q2 2.2 5 1.4 Q10.2 1.6 14.6 5.2 Q10.6 8.6 8.6 12.2 Q7.6 14.8 6 15 Q4.4 14.6 3.6 12 Q2.2 8 0.9 5.6 Z" fill="#ffff00" stroke="#000" stroke-width="1.15"/><path d="M5 3.5 Q7 1.5 9.5 3 Q11.5 5 8.5 7 L7.5 10.5 Q7.5 13 9.5 13" fill="none" stroke="#000" stroke-width="1.2"/><circle cx="8" cy="8.3" r="1.8" fill="#ff0000"/></svg>
<div class="t tree" style="left:72px;top:276px">Rings</div>
<div class="dot-h" style="left:42px;top:297px;width:10px"></div>
<svg style="left:52px;top:289px" width="16" height="16" viewBox="0 0 16 16"><rect x="1.5" y="1.5" width="13" height="13" fill="#ffff00" stroke="#000" stroke-width="1.1"/><path d="M2 2 L14 14 M14 2 L2 14 M8 2 V14 M2 8 H14" stroke="#909090" stroke-width="0.8"/><circle cx="7.2" cy="3.6" r="1.8" fill="#ff0000"/></svg>
<div class="t tree" style="left:72px;top:292px">TriMesh Magnets</div>
<div class="dot-h" style="left:42px;top:313px;width:10px"></div>
<svg style="left:52px;top:305px" width="16" height="16" viewBox="0 0 16 16"><rect x="1.5" y="1.5" width="13" height="13" fill="#ffff00" stroke="#000" stroke-width="1.1"/><path d="M2 2 L14 14 M14 2 L2 14 M8 2 V14 M2 8 H14" stroke="#909090" stroke-width="0.8"/><path d="M7.5 3 Q3.5 4 3.8 9" fill="none" stroke="#000" stroke-width="1.1"/><circle cx="4" cy="10.2" r="1.7" fill="#ff0000"/><circle cx="5" cy="4.6" r="1.1" fill="#ff0000"/></svg>
<div class="t tree" style="left:72px;top:308px">TriMesh Rings</div>
<div class="dot-h" style="left:23px;top:329px;width:9px"></div>
<svg style="left:32px;top:321px" width="16" height="16" viewBox="0 0 16 16"><path d="M8 1 L15 8 L8 15 L1 8 Z" fill="#ffff8c" stroke="#c8c860" stroke-width="0.6"/><path d="M0 0.5 L15 15" stroke="#000" stroke-width="1.1" stroke-dasharray="4 2"/></svg>
<div class="t tree" style="left:53px;top:324px">Planes</div>
<div class="dot-h" style="left:23px;top:345px;width:9px"></div>
<svg style="left:32px;top:337px" width="16" height="16" viewBox="0 0 16 16"><rect x="0.8" y="1.4" width="14.6" height="13.6" fill="#ffff8c"/><path d="M3 1.5 V13 H14.5 M3 13 L11.5 4.5" fill="none" stroke="#000" stroke-width="1.15"/></svg>
<div class="t tree" style="left:53px;top:340px">Frames</div>
<div class="dot-h" style="left:23px;top:361px;width:9px"></div>
<svg style="left:32px;top:353px" width="16" height="16" viewBox="0 0 16 16"><rect x="1.5" y="1.5" width="13" height="13" fill="#ffff00" stroke="#000" stroke-width="1.1"/><path d="M2 2 L14 14 M14 2 L2 14 M8 2 V14 M2 8 H14" stroke="#909090" stroke-width="0.8"/></svg>
<div class="t tree" style="left:53px;top:356px">Triangle Meshes</div>
<div class="dot-h" style="left:23px;top:377px;width:9px"></div>
<svg style="left:32px;top:369px" width="16" height="16" viewBox="0 0 16 16"><rect x="0" y="9" width="16" height="7" fill="#e4e4e4"/><path d="M1 1 H11 L9 9 H1 Z" fill="#ffff00" stroke="#202020" stroke-width="1"/><path d="M0.5 12.5 H8" stroke="#000" stroke-width="1.1"/><path d="M14 0.5 L9 9.5" stroke="#ff00ff" stroke-width="2.6"/><path d="M9 9 L7.5 13" stroke="#000" stroke-width="1.15"/></svg>
<div class="t tree" style="left:53px;top:372px">Wireframes</div>
<div class="dot-h" style="left:28px;top:393px;width:4px"></div>
<div class="a" style="left:19px;top:386px;width:7px;height:14px;background:#fff"></div>
<svg style="left:20px;top:389px" width="6" height="9" viewBox="0 0 6 9"><path d="M0.5 0.5 L5 4.5 L0.5 8.5 Z" fill="#fff" stroke="#a6a6a6" stroke-width="1"/></svg>
<svg style="left:32px;top:385px" width="16" height="16" viewBox="0 0 16 16"><path d="M2.5 4.5 Q3.5 2 6 2.5 Q9 0.5 12 1.5 Q15 1.5 14.5 5 L14.5 11 Q13 13 10 13 Q7 15.5 3.5 14.5 L3 10 Q0.5 9 1.5 6.5 Z" fill="#ffff00" stroke="#000" stroke-width="1.15"/><path d="M5 3.5 V13.5 M8 2.5 V13 M11 2.5 V12" stroke="#ff00ff" stroke-width="1.6"/></svg>
<div class="t tree" style="left:53px;top:388px">Contours</div>
<div class="dot-h" style="left:23px;top:409px;width:9px"></div>
<svg style="left:32px;top:401px" width="16" height="16" viewBox="0 0 16 16"><path d="M1.5 5.5 L5.5 1.5 H14.5 V10.5 L10.5 14.5 H1.5 Z" fill="#ffff00" stroke="#000" stroke-width="1.15"/><path d="M1.5 5.5 H10.5 V14.5 M10.5 5.5 L14.5 1.5" fill="none" stroke="#000" stroke-width="1.15"/></svg>
<div class="t tree" style="left:53px;top:404px">Solids</div>
<div class="dot-h" style="left:23px;top:425px;width:9px"></div>
<svg style="left:32px;top:417px" width="16" height="16" viewBox="0 0 16 16"><path d="M1 2 Q4 0 7 2.5 Q8.5 0.5 11 1 Q15 1 15 4.5 Q14.5 7 12.5 8 Q15.5 9.5 15 12.5 Q13.5 15.5 10 14 Q8.5 13 8 11.5 Q7 14.5 3.5 15 Q0.5 14.5 1.5 11.5 Q2 9.5 4 8.5 Q1 7 1 2 Z" fill="#ffff00" stroke="#000" stroke-width="1.1"/><path d="M3 3 L13 13 M12.5 3 L3.5 13 M8 2.5 V13 M3 8 H13.5" stroke="#6a6a30" stroke-width="0.8"/></svg>
<div class="t tree" style="left:53px;top:420px">Composite Surfaces</div>
<div class="dot-h" style="left:23px;top:441px;width:9px"></div>
<svg style="left:32px;top:433px" width="16" height="16" viewBox="0 0 16 16"><rect x="0.8" y="1.4" width="14.6" height="13.6" fill="#ffff8c"/><path d="M2 13 Q3 5 8 3.2 L15 3" fill="none" stroke="#000" stroke-width="1.2"/><path d="M6 1 L9 5 M12 1 L15 4.5 M1 8.5 L4 10" stroke="#ff0000" stroke-width="1.2"/><circle cx="2" cy="13.5" r="1.6" fill="#ff0000"/></svg>
<div class="t tree" style="left:53px;top:436px">Relabels</div>
<div class="dot-h" style="left:23px;top:457px;width:9px"></div>
<svg style="left:32px;top:449px" width="16" height="16" viewBox="0 0 16 16"><rect x="0.8" y="1.4" width="14.6" height="13.6" fill="#ffff8c"/><rect x="1" y="4.5" width="14" height="7" fill="#fff" stroke="#000" stroke-width="1.15"/><path d="M2 11 Q6 4 10 8 Q12 10 14 10.5 M2 10.5 Q8 9 13.5 5.5" fill="none" stroke="#2020e0" stroke-width="0.9"/></svg>
<div class="t tree" style="left:53px;top:452px">Graphs</div>
<div class="dot-h" style="left:23px;top:473px;width:9px"></div>
<svg style="left:32px;top:465px" width="16" height="16" viewBox="0 0 16 16"><rect x="0.8" y="1.4" width="14.6" height="13.6" fill="#ffff8c"/><circle cx="3" cy="9.5" r="0.9"/><circle cx="4.2" cy="6" r="0.9"/><circle cx="7" cy="3" r="0.9"/><circle cx="10.5" cy="2" r="0.9"/><circle cx="13.5" cy="2" r="0.9"/><text x="0.5" y="16" font-size="6.5" font-family="Liberation Sans" font-weight="bold">0</text><text x="11.5" y="9.5" font-size="6.5" font-family="Liberation Sans" font-weight="bold">1</text></svg>
<div class="t tree" style="left:53px;top:468px">Knotlists</div>
<div class="a" style="left:0;top:485px;width:222px;height:1px;background:#a0a0a0"></div>
<div class="phead" style="top:489px"><span>Properties</span></div>
<svg style="left:209px;top:493px" width="7" height="6" viewBox="0 0 7 6"><path d="M0.8 0.5 L6.2 5.5 M6.2 0.5 L0.8 5.5" stroke="#000" stroke-width="1.7"/></svg>
<div class="a" style="left:3px;top:503px;width:215px;height:316px;background:#f0f0f0"></div><div class="a" style="left:3px;top:503px;width:215px;height:1px;background:#a0a0a0"></div><div class="a" style="left:3px;top:504px;width:214px;height:1px;background:#696969"></div><div class="a" style="left:3px;top:503px;width:1px;height:316px;background:#a0a0a0"></div><div class="a" style="left:4px;top:504px;width:1px;height:315px;background:#696969"></div><div class="a" style="left:217px;top:504px;width:1px;height:315px;background:#e3e3e3"></div><div class="a" style="left:4px;top:818px;width:214px;height:1px;background:#e3e3e3"></div>
<div class="t" style="left:5px;top:507px;font-size:13px;font-weight:bold;letter-spacing:0.17px">Multiple</div>
<div class="a" style="left:199px;top:506px;width:15px;height:15px;background:#f0f0f0;border-top:1px solid #fff;border-left:1px solid #fff;border-right:2px solid #707070;border-bottom:2px solid #707070;box-sizing:border-box"></div>
<svg style="left:200px;top:506px" width="12" height="13" viewBox="0 0 12 13"><text x="2.2" y="11" font-family="Liberation Sans" font-weight="bold" font-size="12.5" fill="#ffff00" stroke="#000" stroke-width="2" paint-order="stroke" stroke-linejoin="round">?</text></svg>
<div class="a" style="left:5px;top:521px;width:212px;height:1px;background:#a0a0a0"></div>
<div class="a" style="left:9px;top:522px;width:207px;height:99px;background:#ffffff"></div>
<div class="a" style="left:104px;top:522px;width:1px;height:95px;background:#a0a0a0"></div>
<div class="t tree" style="left:14px;top:523px">Color</div>
<div class="t tree" style="left:110px;top:524px">(various)</div>
<div class="dotl-h" style="left:9px;top:536px;width:207px"></div>
<div class="t tree" style="left:14px;top:539px">Visible</div>
<div class="a" style="left:109px;top:538px;width:13px;height:13px;box-sizing:border-box;border:1px solid #8e8f8f;background:linear-gradient(135deg,#dfdfdf,#ffffff)"></div>
<svg style="left:111px;top:540px" width="10" height="9" viewBox="0 0 10 9"><path d="M1 4 L3.6 7.5 L8.6 0.8" fill="none" stroke="#3a4f9a" stroke-width="1.8"/></svg>
<div class="t tree" style="left:126px;top:540px">True</div>
<div class="dotl-h" style="left:9px;top:552px;width:207px"></div>
<div class="t tree" style="left:14px;top:555px">Layer</div>
<svg style="left:108px;top:552px" width="17" height="16" viewBox="0 0 17 16"><path d="M1 2 L5 5 M16 2 L12 5 M0.5 8 L4 8 M16.5 8 L13 8 M2 14 L5 11 M15 14 L12 11" stroke="#ffff00" stroke-width="1.2"/><path d="M8.5 1 C4.5 1 3.2 4 3.8 6.2 C4.3 8 6 9 6.2 11 L10.8 11 C11 9 12.7 8 13.2 6.2 C13.8 4 12.5 1 8.5 1 Z" fill="#ffff00" stroke="#000" stroke-width="1.2"/><path d="M6.3 12.3 H10.7 M6.8 14 H10.2" stroke="#404040" stroke-width="1.2"/></svg>
<div class="t tree" style="left:127px;top:556px">0</div>
<div class="dotl-h" style="left:9px;top:568px;width:207px"></div>
<div class="t tree" style="left:14px;top:571px">Lock</div>
<div class="a" style="left:109px;top:570px;width:13px;height:13px;box-sizing:border-box;border:1px solid #8e8f8f;background:linear-gradient(135deg,#dfdfdf,#ffffff)"></div>
<div class="t tree" style="left:126px;top:572px">False</div>
<div class="dotl-h" style="left:9px;top:584px;width:207px"></div>
<div class="t tree" style="left:14px;top:587px">Symmetry exempt</div>
<div class="a" style="left:109px;top:586px;width:13px;height:13px;box-sizing:border-box;border:1px solid #8e8f8f;background:linear-gradient(135deg,#dfdfdf,#ffffff)"></div>
<div class="t tree" style="left:126px;top:588px">False</div>
<div class="dotl-h" style="left:9px;top:600px;width:207px"></div>
<div class="t tree" style="left:14px;top:603px">User data</div>
<div class="t tree" style="left:110px;top:604px">(various)</div>
<div class="dotl-h" style="left:9px;top:616px;width:207px"></div>
<div class="a" style="left:0;top:825px;width:222px;height:1px;background:#a0a0a0"></div>
<div class="phead" style="top:828px"><span>Selection Set</span></div>
<svg style="left:209px;top:832px" width="7" height="6" viewBox="0 0 7 6"><path d="M0.8 0.5 L6.2 5.5 M6.2 0.5 L0.8 5.5" stroke="#000" stroke-width="1.7"/></svg>
<div class="a" style="left:3px;top:842px;width:215px;height:183px;background:#f0f0f0"></div><div class="a" style="left:3px;top:842px;width:215px;height:1px;background:#a0a0a0"></div><div class="a" style="left:3px;top:843px;width:214px;height:1px;background:#696969"></div><div class="a" style="left:3px;top:842px;width:1px;height:183px;background:#a0a0a0"></div><div class="a" style="left:4px;top:843px;width:1px;height:182px;background:#696969"></div><div class="a" style="left:217px;top:843px;width:1px;height:182px;background:#e3e3e3"></div><div class="a" style="left:4px;top:1024px;width:214px;height:1px;background:#e3e3e3"></div>
<div class="a" style="left:11px;top:847px;width:21px;height:19px;box-sizing:border-box;border:1px solid #707070;border-radius:3px;background:linear-gradient(#e2e2e2,#f4f4f4);box-shadow:inset 1px 1px 0 #b8b8b8"></div>
<div class="a" style="left:35px;top:847px;width:21px;height:19px;box-sizing:border-box;border:1px solid #b4b4b4;border-radius:3px;background:linear-gradient(#f8f8f8,#ebebeb)"></div>
<div class="a" style="left:59px;top:847px;width:21px;height:19px;box-sizing:border-box;border:1px solid #b4b4b4;border-radius:3px;background:linear-gradient(#f8f8f8,#ebebeb)"></div>
<div class="a" style="left:83px;top:847px;width:21px;height:19px;box-sizing:border-box;border:1px solid #b4b4b4;border-radius:3px;background:linear-gradient(#f8f8f8,#ebebeb)"></div>
<div class="a" style="left:107px;top:847px;width:21px;height:19px;box-sizing:border-box;border:1px solid #b4b4b4;border-radius:3px;background:linear-gradient(#f8f8f8,#ebebeb)"></div>
<svg style="left:15px;top:850px" width="15" height="13" viewBox="0 0 15 13" shape-rendering="crispEdges"><rect x="0.5" y="0.5" width="7" height="11" fill="#fff" stroke="#000"/><path d="M2 2.5 H6 M2 4.5 H6 M2 6.5 H6 M2 8.5 H6" stroke="#000" stroke-width="1"/><path d="M11.5 1 V11" stroke="#000" stroke-width="1"/><path d="M9.5 3.5 L11.5 1 L13.5 3.5 M9.5 8.5 L11.5 11 L13.5 8.5" stroke="#000" stroke-width="1" fill="none" shape-rendering="auto"/></svg>
<svg style="left:39px;top:850px" width="13" height="13" viewBox="0 0 13 13"><path d="M6.5 0.5 L12 6 H8.6 Q8.6 9.6 6 11.6 H3.6 Q5 9 4.6 6 H1 Z" fill="#5a5a5a"/></svg>
<svg style="left:63px;top:850px" width="13" height="13" viewBox="0 0 13 13"><path d="M6.5 12.5 L12 7 H8.6 Q8.6 3.4 6.6 1.4 H4 Q5 4 4.6 7 H1 Z" fill="#5a5a5a"/></svg>
<svg style="left:87px;top:850px" width="14" height="14" viewBox="0 0 14 14"><path d="M1.5 1 L12 12.5 M12 1 L1.5 11.5" stroke="#c07070" stroke-width="1.5"/></svg>
<svg style="left:111px;top:849px" width="14" height="15" viewBox="0 0 14 15"><rect x="0.5" y="0.5" width="13" height="13" fill="#fff" stroke="#808080"/><rect x="1" y="2" width="12" height="1.2" fill="#5050e8"/><path d="M2 6 H12 M2 8.5 H12 M2 11 H12" stroke="#a0a0a0" stroke-width="1"/><path d="M2.5 3.5 L11.5 13.5 M11.5 3.5 L2.5 13.5" stroke="#b05060" stroke-width="1.8"/></svg>
<div class="t tree" style="left:133px;top:852px">5 Entities</div>
<div class="a" style="left:10px;top:868px;width:206px;height:139px;box-sizing:border-box;border:1px solid #828790;border-bottom:none;background:#ffffff"></div>
<div class="a" style="left:11px;top:869px;width:204px;height:25px;background:#f0f0f0"></div>
<div class="t tree" style="left:18px;top:877px">Name</div>
<div class="t tree" style="left:161px;top:877px">Type</div>
<div class="t tree" style="left:34px;top:898px">ring1</div>
<div class="t tree" style="left:161px;top:898px">Ring</div>
<div class="t tree" style="left:34px;top:915px">hull</div>
<div class="t tree" style="left:161px;top:915px">C-spline Lo</div>
<div class="t tree" style="left:34px;top:932px">ring2</div>
<div class="t tree" style="left:161px;top:932px">Ring</div>
<div class="t tree" style="left:34px;top:949px">n_wl</div>
<div class="t tree" style="left:161px;top:949px">Intersectio.</div>
<div class="t tree" style="left:34px;top:966px">id_hull</div>
<div class="t tree" style="left:161px;top:966px">Magnet</div>
<div class="a" style="left:10px;top:1007px;width:206px;height:16px;background:#f0f0f0"></div>
<div class="a" style="left:23px;top:1008px;width:151px;height:13px;border:1px solid #8f8f8f;border-radius:2px;background:linear-gradient(#f6f6f6,#e2e2e2 45%,#cfcfcf 55%,#dcdcdc)"></div>
<div class="a" style="left:96px;top:1011px;width:1px;height:7px;background:#5a5a5a"></div>
<div class="a" style="left:98px;top:1011px;width:1px;height:7px;background:#5a5a5a"></div>
<div class="a" style="left:100px;top:1011px;width:1px;height:7px;background:#5a5a5a"></div>
<svg style="left:12px;top:1011px" width="5" height="8" viewBox="0 0 5 8"><path d="M4.5 0 L0.5 4 L4.5 8 Z" fill="#404040"/></svg>
<svg style="left:205px;top:1011px" width="5" height="8" viewBox="0 0 5 8"><path d="M0.5 0 L4.5 4 L0.5 8 Z" fill="#404040"/></svg>
<div class="a" style="left:0;top:1029px;width:224px;height:1px;background:#868686"></div>
<div class="a" style="left:0;top:1030px;width:224px;height:1px;background:#ffffff"></div>
<div class="a" style="left:224px;top:104px;width:1174px;height:926px;background:#8080fb"></div>
<div class="a" style="left:1398px;top:104px;width:2px;height:926px;background:#ffffff"></div>
<div class="a" style="left:224px;top:1029px;width:1176px;height:1px;background:#ffffff"></div>
<svg style="left:0;top:0" width="1400" height="1050" viewBox="0 0 1400 1050">
<defs><clipPath id="hc"><path d="M291.5 598.6 L292.2 598.4 L292.9 598.1 L293.5 597.9 L294.3 597.6 L295.0 597.4 L295.9 597.1 L296.8 596.7 L297.9 596.4 L299.1 596.0 L300.6 595.5 L302.2 595.0 L304.0 594.4 L306.2 593.7 L308.6 593.0 L311.3 592.2 L314.3 591.3 L317.7 590.3 L321.6 589.2 L325.7 588.0 L330.2 586.7 L335.0 585.3 L340.0 583.9 L345.2 582.4 L350.6 580.8 L356.1 579.3 L361.7 577.7 L367.3 576.1 L372.9 574.6 L378.4 573.0 L383.9 571.5 L389.2 570.0 L394.4 568.6 L399.5 567.2 L404.6 565.8 L409.7 564.4 L414.8 563.1 L419.9 561.7 L425.0 560.3 L430.1 558.9 L435.3 557.6 L440.4 556.2 L445.6 554.9 L450.8 553.5 L456.0 552.2 L461.2 550.8 L466.4 549.5 L471.7 548.2 L477.0 546.9 L482.3 545.6 L487.6 544.3 L493.0 543.1 L498.4 541.8 L503.8 540.6 L509.2 539.3 L514.6 538.1 L520.0 536.9 L525.5 535.6 L531.0 534.4 L536.4 533.2 L541.9 531.9 L547.4 530.7 L553.0 529.5 L558.5 528.2 L564.0 527.0 L569.5 525.7 L575.1 524.5 L580.6 523.2 L586.2 521.9 L591.8 520.6 L597.4 519.3 L603.0 518.0 L608.6 516.8 L614.2 515.5 L619.8 514.2 L625.5 513.0 L631.1 511.7 L636.8 510.5 L642.5 509.3 L648.3 508.1 L654.0 506.9 L659.8 505.8 L665.5 504.6 L671.3 503.5 L677.1 502.4 L682.9 501.4 L688.7 500.3 L694.6 499.3 L700.4 498.2 L706.3 497.2 L712.2 496.2 L718.1 495.2 L724.1 494.1 L730.0 493.1 L736.0 492.1 L742.0 491.0 L748.0 490.0 L754.0 488.9 L760.1 487.9 L766.2 486.8 L772.3 485.8 L778.5 484.7 L784.6 483.6 L790.8 482.6 L797.0 481.5 L803.2 480.5 L809.4 479.4 L815.7 478.4 L821.9 477.4 L828.2 476.4 L834.4 475.4 L840.7 474.4 L847.0 473.4 L853.3 472.4 L859.6 471.5 L865.9 470.6 L872.2 469.7 L878.5 468.8 L884.8 467.9 L891.2 467.0 L897.5 466.2 L903.9 465.3 L910.3 464.4 L916.7 463.6 L923.1 462.7 L929.5 461.9 L936.0 461.0 L942.5 460.2 L949.0 459.3 L955.5 458.4 L962.1 457.6 L968.7 456.7 L975.3 455.8 L981.9 454.9 L988.6 454.1 L995.3 453.2 L1001.9 452.3 L1008.6 451.5 L1015.4 450.6 L1022.1 449.7 L1028.8 448.9 L1035.6 448.1 L1042.4 447.2 L1049.1 446.4 L1055.9 445.6 L1062.7 444.8 L1069.5 444.0 L1076.3 443.2 L1083.1 442.4 L1089.9 441.7 L1096.7 440.9 L1103.6 440.2 L1110.4 439.4 L1117.3 438.7 L1124.2 437.9 L1131.1 437.2 L1138.0 436.5 L1145.0 435.7 L1152.0 435.0 L1159.0 434.3 L1166.0 433.6 L1173.1 432.9 L1180.4 432.2 L1187.8 431.5 L1195.3 430.7 L1202.9 430.0 L1210.4 429.3 L1218.0 428.6 L1225.6 427.9 L1233.1 427.2 L1240.5 426.6 L1247.8 425.9 L1254.9 425.3 L1261.8 424.7 L1268.6 424.1 L1275.1 423.5 L1281.3 423.0 L1287.4 422.5 L1293.5 422.0 L1299.5 421.5 L1305.5 421.1 L1311.3 420.7 L1317.1 420.3 L1322.7 419.9 L1328.1 419.5 L1333.2 419.1 L1338.1 418.8 L1342.7 418.5 L1347.0 418.2 L1351.0 417.9 L1354.5 417.7 L1357.7 417.5 L1360.4 417.3 L1360.4 418.2 L1360.4 419.3 L1360.4 420.5 L1360.4 421.9 L1360.4 423.4 L1360.4 425.0 L1360.4 426.7 L1360.4 428.5 L1360.4 430.3 L1360.3 432.1 L1360.3 434.0 L1360.3 435.8 L1360.3 437.7 L1360.3 439.5 L1360.2 441.2 L1360.2 442.8 L1360.2 444.4 L1360.1 445.9 L1360.1 447.5 L1360.0 449.0 L1360.0 450.6 L1359.9 452.1 L1359.9 453.6 L1359.8 455.2 L1359.8 456.7 L1359.7 458.3 L1359.6 459.8 L1359.6 461.4 L1359.5 463.0 L1359.4 464.7 L1359.3 466.3 L1359.2 468.0 L1359.1 469.7 L1359.0 471.5 L1358.9 473.4 L1358.7 475.3 L1358.6 477.2 L1358.5 479.2 L1358.3 481.1 L1358.2 483.1 L1358.0 485.0 L1357.9 486.9 L1357.7 488.8 L1357.6 490.6 L1357.4 492.4 L1357.3 494.1 L1357.1 495.8 L1357.0 497.3 L1356.9 498.8 L1356.7 500.2 L1356.6 501.5 L1356.5 502.8 L1356.4 504.1 L1356.3 505.3 L1356.2 506.4 L1356.1 507.6 L1355.9 508.7 L1355.8 509.7 L1355.7 510.8 L1355.6 511.8 L1355.4 512.9 L1355.3 513.9 L1355.2 515.0 L1355.0 516.0 L1354.8 517.0 L1354.7 518.1 L1354.5 519.1 L1354.3 520.1 L1354.1 521.1 L1353.9 522.1 L1353.7 523.0 L1353.5 524.0 L1353.3 524.9 L1353.1 525.8 L1352.9 526.7 L1352.7 527.6 L1352.5 528.4 L1352.3 529.2 L1352.0 530.0 L1351.8 530.8 L1351.6 531.6 L1351.3 532.3 L1351.0 533.0 L1350.8 533.7 L1350.5 534.4 L1350.2 535.1 L1349.9 535.7 L1349.6 536.4 L1349.3 537.0 L1349.1 537.5 L1348.8 538.1 L1348.5 538.6 L1348.3 539.0 L1348.0 539.5 L1347.8 539.9 L1347.6 540.2 L1347.4 540.5 L1347.2 540.7 L1347.0 540.9 L1346.9 541.1 L1346.7 541.2 L1346.6 541.3 L1346.4 541.3 L1346.3 541.3 L1346.2 541.3 L1346.0 541.3 L1345.9 541.3 L1345.8 541.3 L1345.7 541.3 L1345.6 541.3 L1345.6 541.3 L1345.5 541.3 L1344.0 541.9 L1342.3 542.5 L1340.4 543.2 L1338.3 544.0 L1336.0 544.8 L1333.6 545.8 L1331.0 546.7 L1328.2 547.8 L1325.2 548.9 L1322.0 550.0 L1318.7 551.2 L1315.2 552.5 L1311.5 553.8 L1307.7 555.2 L1303.7 556.6 L1299.5 558.0 L1295.1 559.5 L1290.3 561.1 L1285.3 562.8 L1280.0 564.6 L1274.6 566.5 L1268.9 568.4 L1263.1 570.4 L1257.1 572.4 L1251.1 574.4 L1245.0 576.4 L1238.9 578.4 L1232.8 580.4 L1226.7 582.4 L1220.7 584.3 L1214.8 586.2 L1209.0 588.0 L1203.3 589.8 L1197.6 591.5 L1191.8 593.3 L1186.1 595.0 L1180.3 596.7 L1174.6 598.4 L1168.8 600.1 L1163.0 601.8 L1157.3 603.5 L1151.5 605.2 L1145.7 606.8 L1140.0 608.5 L1134.2 610.1 L1128.5 611.7 L1122.7 613.3 L1117.0 614.9 L1111.3 616.5 L1105.6 618.1 L1099.9 619.6 L1094.2 621.2 L1088.5 622.7 L1082.8 624.2 L1077.1 625.8 L1071.4 627.3 L1065.7 628.8 L1060.0 630.2 L1054.3 631.7 L1048.6 633.2 L1043.0 634.6 L1037.3 636.1 L1031.6 637.5 L1025.9 638.9 L1020.2 640.3 L1014.5 641.7 L1008.9 643.1 L1003.2 644.5 L997.5 645.8 L991.9 647.2 L986.2 648.5 L980.5 649.8 L974.8 651.1 L969.2 652.4 L963.5 653.7 L957.8 655.0 L952.1 656.2 L946.4 657.5 L940.7 658.7 L935.0 659.9 L929.3 661.1 L923.5 662.2 L917.8 663.4 L912.0 664.5 L906.3 665.6 L900.5 666.7 L894.8 667.8 L889.0 668.8 L883.2 669.9 L877.4 670.9 L871.7 672.0 L865.9 673.0 L860.1 674.0 L854.4 675.0 L848.6 676.0 L842.9 677.0 L837.2 678.0 L831.4 679.0 L825.7 679.9 L819.9 680.9 L814.2 681.9 L808.5 682.8 L802.7 683.7 L797.0 684.7 L791.3 685.6 L785.6 686.5 L779.9 687.4 L774.2 688.2 L768.5 689.1 L762.8 689.9 L757.1 690.8 L751.4 691.6 L745.7 692.4 L740.1 693.2 L734.4 694.0 L728.8 694.7 L723.2 695.5 L717.5 696.2 L711.9 696.9 L706.3 697.6 L700.7 698.3 L695.1 699.0 L689.5 699.7 L683.9 700.4 L678.3 701.0 L672.6 701.7 L667.0 702.4 L661.4 703.0 L655.8 703.6 L650.2 704.3 L644.6 704.9 L639.0 705.5 L633.4 706.2 L627.8 706.8 L622.3 707.4 L616.7 708.0 L611.1 708.5 L605.5 709.1 L599.8 709.7 L594.2 710.2 L588.5 710.7 L582.9 711.2 L577.1 711.7 L571.4 712.2 L565.6 712.7 L559.6 713.1 L553.4 713.5 L547.2 713.9 L541.0 714.3 L534.7 714.7 L528.4 715.1 L522.1 715.5 L515.9 715.8 L509.9 716.1 L503.9 716.4 L498.1 716.7 L492.4 717.0 L487.0 717.3 L481.9 717.6 L477.0 717.8 L472.4 718.0 L467.9 718.2 L463.7 718.4 L459.7 718.6 L455.8 718.7 L452.0 718.9 L448.4 719.0 L444.9 719.1 L441.5 719.2 L438.3 719.3 L435.1 719.4 L432.0 719.5 L428.9 719.6 L425.9 719.6 L422.9 719.7 L420.0 719.8 L417.1 719.9 L414.3 719.9 L411.6 720.0 L409.0 720.1 L406.5 720.1 L404.0 720.1 L401.6 720.2 L399.3 720.2 L397.1 720.2 L394.9 720.3 L392.8 720.3 L390.7 720.3 L388.7 720.3 L386.8 720.4 L384.9 720.4 L383.0 720.4 L381.2 720.4 L379.4 720.4 L377.6 720.5 L375.9 720.5 L374.3 720.5 L372.7 720.5 L371.2 720.5 L369.7 720.5 L368.3 720.5 L367.0 720.5 L365.7 720.5 L364.6 720.5 L363.5 720.5 L362.6 720.5 L361.7 720.5 L361.0 720.5 L360.6 720.2 L360.1 719.9 L359.5 719.6 L358.8 719.2 L358.1 718.8 L357.3 718.4 L356.5 717.9 L355.7 717.4 L354.8 716.9 L353.9 716.4 L353.0 715.8 L352.1 715.3 L351.2 714.7 L350.3 714.1 L349.4 713.5 L348.6 712.9 L347.8 712.3 L346.9 711.7 L346.0 711.0 L345.2 710.3 L344.3 709.6 L343.4 708.9 L342.5 708.2 L341.6 707.5 L340.7 706.7 L339.7 706.0 L338.8 705.2 L337.9 704.5 L337.0 703.7 L336.1 702.9 L335.2 702.2 L334.3 701.4 L333.4 700.7 L332.5 699.9 L331.6 699.2 L330.7 698.5 L329.8 697.8 L328.9 697.1 L328.0 696.4 L327.1 695.7 L326.3 695.0 L325.4 694.2 L324.5 693.4 L323.6 692.5 L322.7 691.6 L321.8 690.7 L320.9 689.7 L320.0 688.6 L319.1 687.5 L318.2 686.2 L317.2 685.0 L316.3 683.7 L315.3 682.3 L314.4 680.9 L313.4 679.4 L312.5 678.0 L311.6 676.5 L310.7 674.9 L309.8 673.4 L308.9 671.9 L308.0 670.3 L307.2 668.8 L306.4 667.2 L305.7 665.7 L305.0 664.2 L304.3 662.6 L303.7 661.1 L303.0 659.5 L302.4 657.9 L301.8 656.3 L301.3 654.7 L300.7 653.0 L300.2 651.4 L299.7 649.8 L299.2 648.1 L298.7 646.5 L298.3 644.9 L297.8 643.2 L297.4 641.6 L297.0 640.0 L296.6 638.4 L296.2 636.7 L295.9 635.0 L295.6 633.3 L295.3 631.6 L295.0 629.9 L294.7 628.2 L294.5 626.5 L294.3 624.9 L294.0 623.2 L293.8 621.6 L293.6 620.0 L293.4 618.5 L293.3 617.0 L293.1 615.6 L292.9 614.3 L292.7 613.0 L292.6 611.8 L292.5 610.5 L292.3 609.3 L292.2 608.1 L292.1 607.0 L292.0 605.9 L291.9 604.8 L291.9 603.8 L291.8 602.9 L291.7 602.0 L291.7 601.2 L291.6 600.4 L291.6 599.7 L291.5 599.1 L291.5 598.6 Z"/></clipPath>
<linearGradient id="g0" gradientUnits="userSpaceOnUse" x1="0" y1="598.4" x2="0" y2="720.6"><stop offset="0" stop-color="#696a8a"/><stop offset="0" stop-color="#696a8a"/><stop offset="0.1" stop-color="#686989"/><stop offset="0.25" stop-color="#666787"/><stop offset="0.45" stop-color="#606181"/><stop offset="0.7" stop-color="#565777"/><stop offset="1" stop-color="#464767"/></linearGradient>
<linearGradient id="g1" gradientUnits="userSpaceOnUse" x1="0" y1="595.7" x2="0" y2="720.6"><stop offset="0" stop-color="#707191"/><stop offset="0.00889" stop-color="#6a6b8b"/><stop offset="0.108" stop-color="#696a8a"/><stop offset="0.257" stop-color="#666787"/><stop offset="0.455" stop-color="#616282"/><stop offset="0.703" stop-color="#575878"/><stop offset="1" stop-color="#464767"/></linearGradient>
<linearGradient id="g2" gradientUnits="userSpaceOnUse" x1="0" y1="593.2" x2="0" y2="720.6"><stop offset="0" stop-color="#707191"/><stop offset="0.0178" stop-color="#6a6b8b"/><stop offset="0.116" stop-color="#6a6b8b"/><stop offset="0.263" stop-color="#676888"/><stop offset="0.46" stop-color="#616282"/><stop offset="0.705" stop-color="#575878"/><stop offset="1" stop-color="#464767"/></linearGradient>
<linearGradient id="g3" gradientUnits="userSpaceOnUse" x1="0" y1="590.8" x2="0" y2="720.6"><stop offset="0" stop-color="#717292"/><stop offset="0.0267" stop-color="#6b6c8c"/><stop offset="0.124" stop-color="#6a6b8b"/><stop offset="0.27" stop-color="#676888"/><stop offset="0.465" stop-color="#626383"/><stop offset="0.708" stop-color="#575878"/><stop offset="1" stop-color="#464767"/></linearGradient>
<linearGradient id="g4" gradientUnits="userSpaceOnUse" x1="0" y1="588.5" x2="0" y2="720.6"><stop offset="0" stop-color="#717292"/><stop offset="0.0356" stop-color="#6b6c8c"/><stop offset="0.132" stop-color="#6b6c8b"/><stop offset="0.277" stop-color="#686989"/><stop offset="0.47" stop-color="#626383"/><stop offset="0.711" stop-color="#575878"/><stop offset="1" stop-color="#464767"/></linearGradient>
<linearGradient id="g5" gradientUnits="userSpaceOnUse" x1="0" y1="586.2" x2="0" y2="720.6"><stop offset="0" stop-color="#727392"/><stop offset="0.0444" stop-color="#6c6d8d"/><stop offset="0.14" stop-color="#6b6c8c"/><stop offset="0.283" stop-color="#686989"/><stop offset="0.474" stop-color="#626383"/><stop offset="0.713" stop-color="#585978"/><stop offset="1" stop-color="#474867"/></linearGradient>
<linearGradient id="g6" gradientUnits="userSpaceOnUse" x1="0" y1="583.9" x2="0" y2="720.6"><stop offset="0" stop-color="#727393"/><stop offset="0.0533" stop-color="#6c6d8d"/><stop offset="0.148" stop-color="#6c6d8c"/><stop offset="0.29" stop-color="#696a8a"/><stop offset="0.479" stop-color="#636484"/><stop offset="0.716" stop-color="#585979"/><stop offset="1" stop-color="#474867"/></linearGradient>
<linearGradient id="g7" gradientUnits="userSpaceOnUse" x1="0" y1="581.6" x2="0" y2="720.6"><stop offset="0" stop-color="#737493"/><stop offset="0.0622" stop-color="#6d6e8e"/><stop offset="0.156" stop-color="#6c6d8d"/><stop offset="0.297" stop-color="#696a8a"/><stop offset="0.484" stop-color="#636484"/><stop offset="0.719" stop-color="#585979"/><stop offset="1" stop-color="#474868"/></linearGradient>
<linearGradient id="g8" gradientUnits="userSpaceOnUse" x1="0" y1="579.3" x2="0" y2="720.6"><stop offset="0" stop-color="#737494"/><stop offset="0.0711" stop-color="#6d6e8e"/><stop offset="0.164" stop-color="#6d6e8d"/><stop offset="0.303" stop-color="#6a6b8a"/><stop offset="0.489" stop-color="#636484"/><stop offset="0.721" stop-color="#585979"/><stop offset="1" stop-color="#474868"/></linearGradient>
<linearGradient id="g9" gradientUnits="userSpaceOnUse" x1="0" y1="577.1" x2="0" y2="720.5"><stop offset="0" stop-color="#737494"/><stop offset="0.08" stop-color="#6e6f8f"/><stop offset="0.172" stop-color="#6d6e8e"/><stop offset="0.31" stop-color="#6a6b8b"/><stop offset="0.494" stop-color="#646584"/><stop offset="0.724" stop-color="#595a79"/><stop offset="1" stop-color="#474868"/></linearGradient>
<linearGradient id="g10" gradientUnits="userSpaceOnUse" x1="0" y1="574.8" x2="0" y2="720.5"><stop offset="0" stop-color="#747595"/><stop offset="0.0889" stop-color="#6e6f8f"/><stop offset="0.18" stop-color="#6d6e8e"/><stop offset="0.317" stop-color="#6a6b8b"/><stop offset="0.499" stop-color="#646585"/><stop offset="0.727" stop-color="#595a79"/><stop offset="1" stop-color="#474868"/></linearGradient>
<linearGradient id="g11" gradientUnits="userSpaceOnUse" x1="0" y1="572.6" x2="0" y2="720.4"><stop offset="0" stop-color="#747595"/><stop offset="0.0978" stop-color="#6f708f"/><stop offset="0.188" stop-color="#6e6f8f"/><stop offset="0.323" stop-color="#6b6c8c"/><stop offset="0.504" stop-color="#646585"/><stop offset="0.729" stop-color="#595a7a"/><stop offset="1" stop-color="#474868"/></linearGradient>
<linearGradient id="g12" gradientUnits="userSpaceOnUse" x1="0" y1="570.4" x2="0" y2="720.3"><stop offset="0" stop-color="#757695"/><stop offset="0.107" stop-color="#6f7090"/><stop offset="0.196" stop-color="#6e6f8f"/><stop offset="0.33" stop-color="#6b6c8c"/><stop offset="0.509" stop-color="#656685"/><stop offset="0.732" stop-color="#595a7a"/><stop offset="1" stop-color="#474868"/></linearGradient>
<linearGradient id="g13" gradientUnits="userSpaceOnUse" x1="0" y1="568.2" x2="0" y2="720.3"><stop offset="0" stop-color="#757696"/><stop offset="0.116" stop-color="#707190"/><stop offset="0.204" stop-color="#6f708f"/><stop offset="0.337" stop-color="#6c6d8c"/><stop offset="0.514" stop-color="#656686"/><stop offset="0.735" stop-color="#595a7a"/><stop offset="1" stop-color="#474868"/></linearGradient>
<linearGradient id="g14" gradientUnits="userSpaceOnUse" x1="0" y1="566.0" x2="0" y2="720.1"><stop offset="0" stop-color="#767796"/><stop offset="0.125" stop-color="#707191"/><stop offset="0.213" stop-color="#6f7090"/><stop offset="0.344" stop-color="#6c6d8d"/><stop offset="0.519" stop-color="#656686"/><stop offset="0.738" stop-color="#5a5b7a"/><stop offset="1" stop-color="#474868"/></linearGradient>
<linearGradient id="g15" gradientUnits="userSpaceOnUse" x1="0" y1="563.8" x2="0" y2="720.0"><stop offset="0" stop-color="#767797"/><stop offset="0.136" stop-color="#717291"/><stop offset="0.222" stop-color="#707190"/><stop offset="0.352" stop-color="#6c6d8d"/><stop offset="0.525" stop-color="#666786"/><stop offset="0.741" stop-color="#5a5b7a"/><stop offset="1" stop-color="#484968"/></linearGradient>
<linearGradient id="g16" gradientUnits="userSpaceOnUse" x1="0" y1="561.7" x2="0" y2="719.8"><stop offset="0" stop-color="#767797"/><stop offset="0.146" stop-color="#717292"/><stop offset="0.231" stop-color="#707191"/><stop offset="0.359" stop-color="#6d6e8d"/><stop offset="0.53" stop-color="#666786"/><stop offset="0.744" stop-color="#5a5b7b"/><stop offset="1" stop-color="#484968"/></linearGradient>
<linearGradient id="g17" gradientUnits="userSpaceOnUse" x1="0" y1="559.5" x2="0" y2="719.6"><stop offset="0" stop-color="#777897"/><stop offset="0.156" stop-color="#727392"/><stop offset="0.241" stop-color="#717291"/><stop offset="0.367" stop-color="#6d6e8e"/><stop offset="0.536" stop-color="#666787"/><stop offset="0.747" stop-color="#5a5b7b"/><stop offset="1" stop-color="#484968"/></linearGradient>
<linearGradient id="g18" gradientUnits="userSpaceOnUse" x1="0" y1="557.4" x2="0" y2="719.4"><stop offset="0" stop-color="#777898"/><stop offset="0.167" stop-color="#727393"/><stop offset="0.25" stop-color="#717291"/><stop offset="0.375" stop-color="#6e6f8e"/><stop offset="0.542" stop-color="#666787"/><stop offset="0.75" stop-color="#5a5b7b"/><stop offset="1" stop-color="#484968"/></linearGradient>
<linearGradient id="g19" gradientUnits="userSpaceOnUse" x1="0" y1="555.3" x2="0" y2="719.1"><stop offset="0" stop-color="#787998"/><stop offset="0.177" stop-color="#737493"/><stop offset="0.259" stop-color="#717292"/><stop offset="0.383" stop-color="#6e6f8e"/><stop offset="0.547" stop-color="#676887"/><stop offset="0.753" stop-color="#5b5c7b"/><stop offset="1" stop-color="#484968"/></linearGradient>
<linearGradient id="g20" gradientUnits="userSpaceOnUse" x1="0" y1="553.2" x2="0" y2="718.9"><stop offset="0" stop-color="#787998"/><stop offset="0.188" stop-color="#737493"/><stop offset="0.269" stop-color="#727392"/><stop offset="0.391" stop-color="#6e6f8f"/><stop offset="0.553" stop-color="#676887"/><stop offset="0.756" stop-color="#5b5c7b"/><stop offset="1" stop-color="#484968"/></linearGradient>
<linearGradient id="g21" gradientUnits="userSpaceOnUse" x1="0" y1="551.2" x2="0" y2="718.6"><stop offset="0" stop-color="#787999"/><stop offset="0.198" stop-color="#737494"/><stop offset="0.278" stop-color="#727393"/><stop offset="0.399" stop-color="#6f708f"/><stop offset="0.559" stop-color="#676888"/><stop offset="0.759" stop-color="#5b5c7b"/><stop offset="1" stop-color="#484969"/></linearGradient>
<linearGradient id="g22" gradientUnits="userSpaceOnUse" x1="0" y1="549.1" x2="0" y2="718.2"><stop offset="0" stop-color="#797a99"/><stop offset="0.208" stop-color="#747594"/><stop offset="0.288" stop-color="#737493"/><stop offset="0.406" stop-color="#6f708f"/><stop offset="0.565" stop-color="#686988"/><stop offset="0.763" stop-color="#5b5c7c"/><stop offset="1" stop-color="#484969"/></linearGradient>
<linearGradient id="g23" gradientUnits="userSpaceOnUse" x1="0" y1="547.1" x2="0" y2="717.8"><stop offset="0" stop-color="#797a9a"/><stop offset="0.219" stop-color="#747595"/><stop offset="0.297" stop-color="#737493"/><stop offset="0.414" stop-color="#6f7090"/><stop offset="0.57" stop-color="#686988"/><stop offset="0.766" stop-color="#5b5c7c"/><stop offset="1" stop-color="#484969"/></linearGradient>
<linearGradient id="g24" gradientUnits="userSpaceOnUse" x1="0" y1="545.2" x2="0" y2="717.4"><stop offset="0" stop-color="#7a7b9a"/><stop offset="0.229" stop-color="#757695"/><stop offset="0.306" stop-color="#747594"/><stop offset="0.422" stop-color="#707190"/><stop offset="0.576" stop-color="#686988"/><stop offset="0.769" stop-color="#5c5d7c"/><stop offset="1" stop-color="#494a69"/></linearGradient>
<linearGradient id="g25" gradientUnits="userSpaceOnUse" x1="0" y1="543.3" x2="0" y2="717.0"><stop offset="0" stop-color="#7a7b9a"/><stop offset="0.24" stop-color="#757695"/><stop offset="0.316" stop-color="#747594"/><stop offset="0.43" stop-color="#707190"/><stop offset="0.582" stop-color="#686989"/><stop offset="0.772" stop-color="#5c5d7c"/><stop offset="1" stop-color="#494a69"/></linearGradient>
<linearGradient id="g26" gradientUnits="userSpaceOnUse" x1="0" y1="541.4" x2="0" y2="716.6"><stop offset="0" stop-color="#7a7b9b"/><stop offset="0.25" stop-color="#767796"/><stop offset="0.325" stop-color="#747595"/><stop offset="0.438" stop-color="#707191"/><stop offset="0.588" stop-color="#696a89"/><stop offset="0.775" stop-color="#5c5d7c"/><stop offset="1" stop-color="#494a69"/></linearGradient>
<linearGradient id="g27" gradientUnits="userSpaceOnUse" x1="0" y1="539.6" x2="0" y2="716.2"><stop offset="0" stop-color="#7b7c9b"/><stop offset="0.256" stop-color="#767796"/><stop offset="0.33" stop-color="#757695"/><stop offset="0.442" stop-color="#717291"/><stop offset="0.591" stop-color="#696a89"/><stop offset="0.777" stop-color="#5c5d7c"/><stop offset="1" stop-color="#494a69"/></linearGradient>
<linearGradient id="g28" gradientUnits="userSpaceOnUse" x1="0" y1="537.8" x2="0" y2="715.8"><stop offset="0" stop-color="#7b7c9b"/><stop offset="0.261" stop-color="#777897"/><stop offset="0.335" stop-color="#757695"/><stop offset="0.446" stop-color="#717291"/><stop offset="0.594" stop-color="#696a89"/><stop offset="0.778" stop-color="#5c5d7c"/><stop offset="1" stop-color="#494a69"/></linearGradient>
<linearGradient id="g29" gradientUnits="userSpaceOnUse" x1="0" y1="536.0" x2="0" y2="715.3"><stop offset="0" stop-color="#7c7d9c"/><stop offset="0.267" stop-color="#777897"/><stop offset="0.34" stop-color="#767796"/><stop offset="0.45" stop-color="#727392"/><stop offset="0.597" stop-color="#6a6b8a"/><stop offset="0.78" stop-color="#5c5d7d"/><stop offset="1" stop-color="#494a69"/></linearGradient>
<linearGradient id="g30" gradientUnits="userSpaceOnUse" x1="0" y1="534.2" x2="0" y2="714.9"><stop offset="0" stop-color="#7c7d9c"/><stop offset="0.272" stop-color="#777897"/><stop offset="0.345" stop-color="#767796"/><stop offset="0.454" stop-color="#727392"/><stop offset="0.6" stop-color="#6a6b8a"/><stop offset="0.782" stop-color="#5d5e7d"/><stop offset="1" stop-color="#494a69"/></linearGradient>
<linearGradient id="g31" gradientUnits="userSpaceOnUse" x1="0" y1="532.4" x2="0" y2="714.4"><stop offset="0" stop-color="#7c7d9d"/><stop offset="0.277" stop-color="#787998"/><stop offset="0.35" stop-color="#767797"/><stop offset="0.458" stop-color="#727392"/><stop offset="0.603" stop-color="#6a6b8a"/><stop offset="0.783" stop-color="#5d5e7d"/><stop offset="1" stop-color="#494a69"/></linearGradient>
<linearGradient id="g32" gradientUnits="userSpaceOnUse" x1="0" y1="530.6" x2="0" y2="713.9"><stop offset="0" stop-color="#7d7e9d"/><stop offset="0.283" stop-color="#787998"/><stop offset="0.355" stop-color="#777897"/><stop offset="0.462" stop-color="#737493"/><stop offset="0.606" stop-color="#6a6b8a"/><stop offset="0.785" stop-color="#5d5e7d"/><stop offset="1" stop-color="#494a69"/></linearGradient>
<linearGradient id="g33" gradientUnits="userSpaceOnUse" x1="0" y1="528.8" x2="0" y2="713.3"><stop offset="0" stop-color="#7d7e9d"/><stop offset="0.288" stop-color="#797a99"/><stop offset="0.36" stop-color="#777897"/><stop offset="0.466" stop-color="#737493"/><stop offset="0.609" stop-color="#6b6c8b"/><stop offset="0.787" stop-color="#5d5e7d"/><stop offset="1" stop-color="#494a69"/></linearGradient>
<linearGradient id="g34" gradientUnits="userSpaceOnUse" x1="0" y1="527.0" x2="0" y2="712.8"><stop offset="0" stop-color="#7e7f9e"/><stop offset="0.294" stop-color="#797a99"/><stop offset="0.365" stop-color="#787998"/><stop offset="0.47" stop-color="#737493"/><stop offset="0.612" stop-color="#6b6c8b"/><stop offset="0.788" stop-color="#5d5e7d"/><stop offset="1" stop-color="#4a4b6a"/></linearGradient>
<linearGradient id="g35" gradientUnits="userSpaceOnUse" x1="0" y1="525.2" x2="0" y2="712.2"><stop offset="0" stop-color="#7e7f9e"/><stop offset="0.299" stop-color="#7a7b9a"/><stop offset="0.37" stop-color="#787998"/><stop offset="0.475" stop-color="#747594"/><stop offset="0.615" stop-color="#6b6c8b"/><stop offset="0.79" stop-color="#5d5e7d"/><stop offset="1" stop-color="#4a4b6a"/></linearGradient>
<linearGradient id="g36" gradientUnits="userSpaceOnUse" x1="0" y1="523.3" x2="0" y2="711.5"><stop offset="0" stop-color="#7e7f9e"/><stop offset="0.152" stop-color="#7c7d9c"/><stop offset="0.305" stop-color="#7a7b9a"/><stop offset="0.374" stop-color="#787998"/><stop offset="0.479" stop-color="#747594"/><stop offset="0.618" stop-color="#6b6c8b"/><stop offset="0.791" stop-color="#5e5f7e"/><stop offset="1" stop-color="#4a4b6a"/></linearGradient>
<linearGradient id="g37" gradientUnits="userSpaceOnUse" x1="0" y1="521.5" x2="0" y2="710.8"><stop offset="0" stop-color="#7f809f"/><stop offset="0.155" stop-color="#7d7e9c"/><stop offset="0.31" stop-color="#7a7b9a"/><stop offset="0.379" stop-color="#797a99"/><stop offset="0.483" stop-color="#747594"/><stop offset="0.621" stop-color="#6c6d8b"/><stop offset="0.793" stop-color="#5e5f7e"/><stop offset="1" stop-color="#4a4b6a"/></linearGradient>
<linearGradient id="g38" gradientUnits="userSpaceOnUse" x1="0" y1="519.6" x2="0" y2="710.0"><stop offset="0" stop-color="#7f809f"/><stop offset="0.158" stop-color="#7d7e9d"/><stop offset="0.316" stop-color="#7b7c9b"/><stop offset="0.384" stop-color="#797a99"/><stop offset="0.487" stop-color="#757694"/><stop offset="0.624" stop-color="#6c6d8c"/><stop offset="0.795" stop-color="#5e5f7e"/><stop offset="1" stop-color="#4a4b6a"/></linearGradient>
<linearGradient id="g39" gradientUnits="userSpaceOnUse" x1="0" y1="517.8" x2="0" y2="709.3"><stop offset="0" stop-color="#80819f"/><stop offset="0.161" stop-color="#7d7e9d"/><stop offset="0.322" stop-color="#7b7c9b"/><stop offset="0.389" stop-color="#7a7b99"/><stop offset="0.491" stop-color="#757695"/><stop offset="0.627" stop-color="#6c6d8c"/><stop offset="0.796" stop-color="#5e5f7e"/><stop offset="1" stop-color="#4a4b6a"/></linearGradient>
<linearGradient id="g40" gradientUnits="userSpaceOnUse" x1="0" y1="516.0" x2="0" y2="708.4"><stop offset="0" stop-color="#8081a0"/><stop offset="0.163" stop-color="#7e7f9e"/><stop offset="0.327" stop-color="#7c7d9b"/><stop offset="0.394" stop-color="#7a7b9a"/><stop offset="0.495" stop-color="#757695"/><stop offset="0.63" stop-color="#6c6d8c"/><stop offset="0.798" stop-color="#5e5f7e"/><stop offset="1" stop-color="#4a4b6a"/></linearGradient>
<linearGradient id="g41" gradientUnits="userSpaceOnUse" x1="0" y1="514.2" x2="0" y2="707.6"><stop offset="0" stop-color="#8081a0"/><stop offset="0.166" stop-color="#7e7f9e"/><stop offset="0.333" stop-color="#7c7d9c"/><stop offset="0.399" stop-color="#7a7b9a"/><stop offset="0.499" stop-color="#757695"/><stop offset="0.633" stop-color="#6d6e8c"/><stop offset="0.8" stop-color="#5e5f7e"/><stop offset="1" stop-color="#4a4b6a"/></linearGradient>
<linearGradient id="g42" gradientUnits="userSpaceOnUse" x1="0" y1="512.4" x2="0" y2="706.8"><stop offset="0" stop-color="#8182a0"/><stop offset="0.169" stop-color="#7f809e"/><stop offset="0.338" stop-color="#7d7e9c"/><stop offset="0.404" stop-color="#7b7c9b"/><stop offset="0.503" stop-color="#767796"/><stop offset="0.636" stop-color="#6d6e8d"/><stop offset="0.801" stop-color="#5f607e"/><stop offset="1" stop-color="#4a4b6a"/></linearGradient>
<linearGradient id="g43" gradientUnits="userSpaceOnUse" x1="0" y1="510.7" x2="0" y2="705.9"><stop offset="0" stop-color="#8182a1"/><stop offset="0.172" stop-color="#7f809f"/><stop offset="0.343" stop-color="#7d7e9d"/><stop offset="0.409" stop-color="#7b7c9b"/><stop offset="0.508" stop-color="#767796"/><stop offset="0.639" stop-color="#6d6e8d"/><stop offset="0.803" stop-color="#5f607e"/><stop offset="1" stop-color="#4b4c6a"/></linearGradient>
<linearGradient id="g44" gradientUnits="userSpaceOnUse" x1="0" y1="509.0" x2="0" y2="705.0"><stop offset="0" stop-color="#8182a1"/><stop offset="0.174" stop-color="#7f809f"/><stop offset="0.349" stop-color="#7d7e9d"/><stop offset="0.414" stop-color="#7c7d9b"/><stop offset="0.512" stop-color="#767796"/><stop offset="0.642" stop-color="#6d6e8d"/><stop offset="0.805" stop-color="#5f607f"/><stop offset="1" stop-color="#4b4c6a"/></linearGradient>
<linearGradient id="g45" gradientUnits="userSpaceOnUse" x1="0" y1="507.3" x2="0" y2="704.1"><stop offset="0" stop-color="#8283a1"/><stop offset="0.177" stop-color="#80819f"/><stop offset="0.354" stop-color="#7e7f9d"/><stop offset="0.419" stop-color="#7c7d9c"/><stop offset="0.516" stop-color="#777896"/><stop offset="0.645" stop-color="#6d6e8d"/><stop offset="0.806" stop-color="#5f607f"/><stop offset="1" stop-color="#4b4c6a"/></linearGradient>
<linearGradient id="g46" gradientUnits="userSpaceOnUse" x1="0" y1="505.7" x2="0" y2="703.2"><stop offset="0" stop-color="#8283a2"/><stop offset="0.18" stop-color="#8081a0"/><stop offset="0.36" stop-color="#7e7f9e"/><stop offset="0.424" stop-color="#7c7d9c"/><stop offset="0.52" stop-color="#777897"/><stop offset="0.648" stop-color="#6e6f8d"/><stop offset="0.808" stop-color="#5f607f"/><stop offset="1" stop-color="#4b4c6a"/></linearGradient>
<linearGradient id="g47" gradientUnits="userSpaceOnUse" x1="0" y1="504.2" x2="0" y2="702.2"><stop offset="0" stop-color="#8384a2"/><stop offset="0.182" stop-color="#8182a0"/><stop offset="0.364" stop-color="#7f809e"/><stop offset="0.428" stop-color="#7d7e9c"/><stop offset="0.523" stop-color="#777897"/><stop offset="0.65" stop-color="#6e6f8d"/><stop offset="0.809" stop-color="#5f607f"/><stop offset="1" stop-color="#4b4c6b"/></linearGradient>
<linearGradient id="g48" gradientUnits="userSpaceOnUse" x1="0" y1="502.6" x2="0" y2="701.3"><stop offset="0" stop-color="#8384a2"/><stop offset="0.184" stop-color="#8182a1"/><stop offset="0.368" stop-color="#7f809f"/><stop offset="0.431" stop-color="#7d7e9d"/><stop offset="0.526" stop-color="#787997"/><stop offset="0.652" stop-color="#6e6f8e"/><stop offset="0.81" stop-color="#60617f"/><stop offset="1" stop-color="#4b4c6b"/></linearGradient>
<linearGradient id="g49" gradientUnits="userSpaceOnUse" x1="0" y1="501.2" x2="0" y2="700.4"><stop offset="0" stop-color="#8384a3"/><stop offset="0.186" stop-color="#8182a1"/><stop offset="0.372" stop-color="#7f809f"/><stop offset="0.435" stop-color="#7d7e9d"/><stop offset="0.529" stop-color="#787997"/><stop offset="0.655" stop-color="#6e6f8e"/><stop offset="0.812" stop-color="#60617f"/><stop offset="1" stop-color="#4b4c6b"/></linearGradient>
<linearGradient id="g50" gradientUnits="userSpaceOnUse" x1="0" y1="499.7" x2="0" y2="699.4"><stop offset="0" stop-color="#8485a3"/><stop offset="0.188" stop-color="#8283a1"/><stop offset="0.376" stop-color="#80819f"/><stop offset="0.438" stop-color="#7e7f9d"/><stop offset="0.532" stop-color="#787998"/><stop offset="0.657" stop-color="#6f708e"/><stop offset="0.813" stop-color="#60617f"/><stop offset="1" stop-color="#4b4c6b"/></linearGradient>
<linearGradient id="g51" gradientUnits="userSpaceOnUse" x1="0" y1="498.3" x2="0" y2="698.4"><stop offset="0" stop-color="#8485a4"/><stop offset="0.19" stop-color="#8283a2"/><stop offset="0.38" stop-color="#8081a0"/><stop offset="0.442" stop-color="#7e7f9e"/><stop offset="0.535" stop-color="#797a98"/><stop offset="0.659" stop-color="#6f708e"/><stop offset="0.814" stop-color="#60617f"/><stop offset="1" stop-color="#4b4c6b"/></linearGradient>
<linearGradient id="g52" gradientUnits="userSpaceOnUse" x1="0" y1="496.9" x2="0" y2="697.4"><stop offset="0" stop-color="#8485a4"/><stop offset="0.192" stop-color="#8384a2"/><stop offset="0.384" stop-color="#8182a0"/><stop offset="0.446" stop-color="#7e7f9e"/><stop offset="0.538" stop-color="#797a98"/><stop offset="0.661" stop-color="#6f708e"/><stop offset="0.815" stop-color="#606180"/><stop offset="1" stop-color="#4b4c6b"/></linearGradient>
<linearGradient id="g53" gradientUnits="userSpaceOnUse" x1="0" y1="495.5" x2="0" y2="696.4"><stop offset="0" stop-color="#8586a4"/><stop offset="0.194" stop-color="#8384a2"/><stop offset="0.388" stop-color="#8182a1"/><stop offset="0.449" stop-color="#7f809e"/><stop offset="0.541" stop-color="#797a99"/><stop offset="0.663" stop-color="#6f708f"/><stop offset="0.816" stop-color="#606180"/><stop offset="1" stop-color="#4c4d6b"/></linearGradient>
<linearGradient id="g54" gradientUnits="userSpaceOnUse" x1="0" y1="494.1" x2="0" y2="695.4"><stop offset="0" stop-color="#8586a5"/><stop offset="0.196" stop-color="#8384a3"/><stop offset="0.392" stop-color="#8283a1"/><stop offset="0.453" stop-color="#7f809f"/><stop offset="0.544" stop-color="#797a99"/><stop offset="0.666" stop-color="#6f708f"/><stop offset="0.818" stop-color="#606180"/><stop offset="1" stop-color="#4c4d6b"/></linearGradient>
<linearGradient id="g55" gradientUnits="userSpaceOnUse" x1="0" y1="492.8" x2="0" y2="694.3"><stop offset="0" stop-color="#8687a5"/><stop offset="0.198" stop-color="#8485a3"/><stop offset="0.396" stop-color="#8283a1"/><stop offset="0.456" stop-color="#80819f"/><stop offset="0.547" stop-color="#7a7b99"/><stop offset="0.668" stop-color="#70718f"/><stop offset="0.819" stop-color="#616280"/><stop offset="1" stop-color="#4c4d6b"/></linearGradient>
<linearGradient id="g56" gradientUnits="userSpaceOnUse" x1="0" y1="491.4" x2="0" y2="693.2"><stop offset="0" stop-color="#8687a5"/><stop offset="0.2" stop-color="#8485a3"/><stop offset="0.4" stop-color="#8283a2"/><stop offset="0.46" stop-color="#80819f"/><stop offset="0.55" stop-color="#7a7b99"/><stop offset="0.67" stop-color="#70718f"/><stop offset="0.82" stop-color="#616280"/><stop offset="1" stop-color="#4c4d6b"/></linearGradient>
<linearGradient id="g57" gradientUnits="userSpaceOnUse" x1="0" y1="490.0" x2="0" y2="692.1"><stop offset="0" stop-color="#8687a6"/><stop offset="0.202" stop-color="#8586a4"/><stop offset="0.404" stop-color="#8384a2"/><stop offset="0.464" stop-color="#8081a0"/><stop offset="0.553" stop-color="#7a7b9a"/><stop offset="0.672" stop-color="#70718f"/><stop offset="0.821" stop-color="#616280"/><stop offset="1" stop-color="#4c4d6b"/></linearGradient>
<linearGradient id="g58" gradientUnits="userSpaceOnUse" x1="0" y1="488.6" x2="0" y2="690.9"><stop offset="0" stop-color="#8788a6"/><stop offset="0.204" stop-color="#8586a4"/><stop offset="0.408" stop-color="#8384a2"/><stop offset="0.467" stop-color="#8182a0"/><stop offset="0.556" stop-color="#7b7c9a"/><stop offset="0.674" stop-color="#70718f"/><stop offset="0.822" stop-color="#616280"/><stop offset="1" stop-color="#4c4d6b"/></linearGradient>
<linearGradient id="g59" gradientUnits="userSpaceOnUse" x1="0" y1="487.2" x2="0" y2="689.8"><stop offset="0" stop-color="#8788a6"/><stop offset="0.206" stop-color="#8586a5"/><stop offset="0.412" stop-color="#8485a3"/><stop offset="0.471" stop-color="#8182a0"/><stop offset="0.559" stop-color="#7b7c9a"/><stop offset="0.677" stop-color="#707190"/><stop offset="0.824" stop-color="#616280"/><stop offset="1" stop-color="#4c4d6b"/></linearGradient>
<linearGradient id="g60" gradientUnits="userSpaceOnUse" x1="0" y1="485.8" x2="0" y2="688.6"><stop offset="0" stop-color="#8788a7"/><stop offset="0.208" stop-color="#8687a5"/><stop offset="0.416" stop-color="#8485a3"/><stop offset="0.474" stop-color="#8182a1"/><stop offset="0.562" stop-color="#7b7c9a"/><stop offset="0.679" stop-color="#717290"/><stop offset="0.825" stop-color="#616280"/><stop offset="1" stop-color="#4c4d6b"/></linearGradient>
<linearGradient id="g61" gradientUnits="userSpaceOnUse" x1="0" y1="484.4" x2="0" y2="687.3"><stop offset="0" stop-color="#8889a7"/><stop offset="0.21" stop-color="#8687a5"/><stop offset="0.42" stop-color="#8485a4"/><stop offset="0.478" stop-color="#8283a1"/><stop offset="0.565" stop-color="#7b7c9b"/><stop offset="0.681" stop-color="#717290"/><stop offset="0.826" stop-color="#616281"/><stop offset="1" stop-color="#4c4d6c"/></linearGradient>
<linearGradient id="g62" gradientUnits="userSpaceOnUse" x1="0" y1="483.1" x2="0" y2="686.1"><stop offset="0" stop-color="#8889a7"/><stop offset="0.212" stop-color="#8687a6"/><stop offset="0.424" stop-color="#8586a4"/><stop offset="0.482" stop-color="#8283a1"/><stop offset="0.568" stop-color="#7c7d9b"/><stop offset="0.683" stop-color="#717290"/><stop offset="0.827" stop-color="#616281"/><stop offset="1" stop-color="#4d4e6c"/></linearGradient>
<linearGradient id="g63" gradientUnits="userSpaceOnUse" x1="0" y1="481.7" x2="0" y2="684.8"><stop offset="0" stop-color="#8889a8"/><stop offset="0.214" stop-color="#8788a6"/><stop offset="0.428" stop-color="#8586a4"/><stop offset="0.485" stop-color="#8283a2"/><stop offset="0.571" stop-color="#7c7d9b"/><stop offset="0.685" stop-color="#717290"/><stop offset="0.828" stop-color="#626381"/><stop offset="1" stop-color="#4d4e6c"/></linearGradient>
<linearGradient id="g64" gradientUnits="userSpaceOnUse" x1="0" y1="480.3" x2="0" y2="683.5"><stop offset="0" stop-color="#898aa8"/><stop offset="0.216" stop-color="#8788a6"/><stop offset="0.432" stop-color="#8687a5"/><stop offset="0.489" stop-color="#8384a2"/><stop offset="0.574" stop-color="#7c7d9b"/><stop offset="0.688" stop-color="#717290"/><stop offset="0.83" stop-color="#626381"/><stop offset="1" stop-color="#4d4e6c"/></linearGradient>
<linearGradient id="g65" gradientUnits="userSpaceOnUse" x1="0" y1="479.0" x2="0" y2="682.2"><stop offset="0" stop-color="#898aa8"/><stop offset="0.218" stop-color="#8889a7"/><stop offset="0.436" stop-color="#8687a5"/><stop offset="0.492" stop-color="#8384a2"/><stop offset="0.577" stop-color="#7c7d9b"/><stop offset="0.69" stop-color="#727391"/><stop offset="0.831" stop-color="#626381"/><stop offset="1" stop-color="#4d4e6c"/></linearGradient>
<linearGradient id="g66" gradientUnits="userSpaceOnUse" x1="0" y1="477.7" x2="0" y2="680.9"><stop offset="0" stop-color="#8a8ba9"/><stop offset="0.22" stop-color="#8889a7"/><stop offset="0.44" stop-color="#8687a6"/><stop offset="0.496" stop-color="#8384a2"/><stop offset="0.58" stop-color="#7d7e9c"/><stop offset="0.692" stop-color="#727391"/><stop offset="0.832" stop-color="#626381"/><stop offset="1" stop-color="#4d4e6c"/></linearGradient>
<linearGradient id="g67" gradientUnits="userSpaceOnUse" x1="0" y1="476.4" x2="0" y2="679.5"><stop offset="0" stop-color="#8a8ba9"/><stop offset="0.222" stop-color="#8889a7"/><stop offset="0.444" stop-color="#8788a6"/><stop offset="0.5" stop-color="#8485a3"/><stop offset="0.583" stop-color="#7d7e9c"/><stop offset="0.694" stop-color="#727391"/><stop offset="0.833" stop-color="#626381"/><stop offset="1" stop-color="#4d4e6c"/></linearGradient>
<linearGradient id="g68" gradientUnits="userSpaceOnUse" x1="0" y1="475.1" x2="0" y2="678.2"><stop offset="0" stop-color="#8a8ba9"/><stop offset="0.224" stop-color="#898aa8"/><stop offset="0.448" stop-color="#8788a6"/><stop offset="0.503" stop-color="#8485a3"/><stop offset="0.586" stop-color="#7d7e9c"/><stop offset="0.696" stop-color="#727391"/><stop offset="0.834" stop-color="#626381"/><stop offset="1" stop-color="#4d4e6c"/></linearGradient>
<linearGradient id="g69" gradientUnits="userSpaceOnUse" x1="0" y1="473.9" x2="0" y2="676.8"><stop offset="0" stop-color="#8b8caa"/><stop offset="0.226" stop-color="#898aa8"/><stop offset="0.451" stop-color="#8889a7"/><stop offset="0.506" stop-color="#8485a3"/><stop offset="0.588" stop-color="#7d7e9c"/><stop offset="0.698" stop-color="#727391"/><stop offset="0.835" stop-color="#626381"/><stop offset="1" stop-color="#4d4e6c"/></linearGradient>
<linearGradient id="g70" gradientUnits="userSpaceOnUse" x1="0" y1="472.6" x2="0" y2="675.4"><stop offset="0" stop-color="#8b8caa"/><stop offset="0.227" stop-color="#8a8ba8"/><stop offset="0.454" stop-color="#8889a7"/><stop offset="0.508" stop-color="#8586a4"/><stop offset="0.59" stop-color="#7e7f9d"/><stop offset="0.7" stop-color="#727391"/><stop offset="0.836" stop-color="#626381"/><stop offset="1" stop-color="#4d4e6c"/></linearGradient>
<linearGradient id="g71" gradientUnits="userSpaceOnUse" x1="0" y1="471.5" x2="0" y2="674.0"><stop offset="0" stop-color="#8b8caa"/><stop offset="0.228" stop-color="#8a8ba9"/><stop offset="0.456" stop-color="#898aa7"/><stop offset="0.511" stop-color="#8586a4"/><stop offset="0.592" stop-color="#7e7f9d"/><stop offset="0.701" stop-color="#737491"/><stop offset="0.837" stop-color="#636481"/><stop offset="1" stop-color="#4d4e6c"/></linearGradient>
<linearGradient id="g72" gradientUnits="userSpaceOnUse" x1="0" y1="470.3" x2="0" y2="672.6"><stop offset="0" stop-color="#8c8dab"/><stop offset="0.229" stop-color="#8a8ba9"/><stop offset="0.459" stop-color="#898aa8"/><stop offset="0.513" stop-color="#8586a4"/><stop offset="0.594" stop-color="#7e7f9d"/><stop offset="0.702" stop-color="#737492"/><stop offset="0.838" stop-color="#636482"/><stop offset="1" stop-color="#4e4f6c"/></linearGradient>
<linearGradient id="g73" gradientUnits="userSpaceOnUse" x1="0" y1="469.1" x2="0" y2="671.2"><stop offset="0" stop-color="#8c8dab"/><stop offset="0.231" stop-color="#8b8ca9"/><stop offset="0.461" stop-color="#898aa8"/><stop offset="0.515" stop-color="#8687a5"/><stop offset="0.596" stop-color="#7e7f9d"/><stop offset="0.704" stop-color="#737492"/><stop offset="0.838" stop-color="#636482"/><stop offset="1" stop-color="#4e4f6c"/></linearGradient>
<linearGradient id="g74" gradientUnits="userSpaceOnUse" x1="0" y1="468.0" x2="0" y2="669.8"><stop offset="0" stop-color="#8c8dab"/><stop offset="0.232" stop-color="#8b8caa"/><stop offset="0.464" stop-color="#8a8ba9"/><stop offset="0.517" stop-color="#8687a5"/><stop offset="0.598" stop-color="#7f809d"/><stop offset="0.705" stop-color="#737492"/><stop offset="0.839" stop-color="#636482"/><stop offset="1" stop-color="#4e4f6d"/></linearGradient>
<linearGradient id="g75" gradientUnits="userSpaceOnUse" x1="0" y1="466.9" x2="0" y2="668.3"><stop offset="0" stop-color="#8d8eac"/><stop offset="0.233" stop-color="#8b8caa"/><stop offset="0.466" stop-color="#8a8ba9"/><stop offset="0.52" stop-color="#8687a5"/><stop offset="0.6" stop-color="#7f809e"/><stop offset="0.706" stop-color="#737492"/><stop offset="0.84" stop-color="#636482"/><stop offset="1" stop-color="#4e4f6d"/></linearGradient>
<linearGradient id="g76" gradientUnits="userSpaceOnUse" x1="0" y1="465.8" x2="0" y2="666.8"><stop offset="0" stop-color="#8d8eac"/><stop offset="0.234" stop-color="#8c8dab"/><stop offset="0.469" stop-color="#8b8ca9"/><stop offset="0.522" stop-color="#8788a5"/><stop offset="0.602" stop-color="#7f809e"/><stop offset="0.708" stop-color="#737492"/><stop offset="0.841" stop-color="#636482"/><stop offset="1" stop-color="#4e4f6d"/></linearGradient>
<linearGradient id="g77" gradientUnits="userSpaceOnUse" x1="0" y1="464.8" x2="0" y2="665.3"><stop offset="0" stop-color="#8d8eac"/><stop offset="0.236" stop-color="#8c8dab"/><stop offset="0.471" stop-color="#8b8caa"/><stop offset="0.524" stop-color="#8788a6"/><stop offset="0.603" stop-color="#7f809e"/><stop offset="0.709" stop-color="#747592"/><stop offset="0.841" stop-color="#636482"/><stop offset="1" stop-color="#4e4f6d"/></linearGradient>
<linearGradient id="g78" gradientUnits="userSpaceOnUse" x1="0" y1="463.7" x2="0" y2="663.7"><stop offset="0" stop-color="#8e8fac"/><stop offset="0.237" stop-color="#8d8eab"/><stop offset="0.474" stop-color="#8b8caa"/><stop offset="0.526" stop-color="#8788a6"/><stop offset="0.605" stop-color="#80819e"/><stop offset="0.711" stop-color="#747592"/><stop offset="0.842" stop-color="#636482"/><stop offset="1" stop-color="#4e4f6d"/></linearGradient>
<linearGradient id="g79" gradientUnits="userSpaceOnUse" x1="0" y1="462.6" x2="0" y2="662.1"><stop offset="0" stop-color="#8e8fad"/><stop offset="0.238" stop-color="#8d8eac"/><stop offset="0.476" stop-color="#8c8daa"/><stop offset="0.529" stop-color="#8889a6"/><stop offset="0.607" stop-color="#80819e"/><stop offset="0.712" stop-color="#747592"/><stop offset="0.843" stop-color="#636482"/><stop offset="1" stop-color="#4e4f6d"/></linearGradient>
<linearGradient id="g80" gradientUnits="userSpaceOnUse" x1="0" y1="461.6" x2="0" y2="660.5"><stop offset="0" stop-color="#8f90ad"/><stop offset="0.239" stop-color="#8d8eac"/><stop offset="0.479" stop-color="#8c8dab"/><stop offset="0.531" stop-color="#8889a7"/><stop offset="0.609" stop-color="#80819f"/><stop offset="0.713" stop-color="#747593"/><stop offset="0.844" stop-color="#646582"/><stop offset="1" stop-color="#4e4f6d"/></linearGradient>
<linearGradient id="g81" gradientUnits="userSpaceOnUse" x1="0" y1="460.5" x2="0" y2="658.9"><stop offset="0" stop-color="#8f90ad"/><stop offset="0.241" stop-color="#8e8fac"/><stop offset="0.481" stop-color="#8d8eab"/><stop offset="0.533" stop-color="#8889a7"/><stop offset="0.611" stop-color="#80819f"/><stop offset="0.715" stop-color="#747593"/><stop offset="0.844" stop-color="#646582"/><stop offset="1" stop-color="#4e4f6d"/></linearGradient>
<linearGradient id="g82" gradientUnits="userSpaceOnUse" x1="0" y1="459.4" x2="0" y2="657.1"><stop offset="0" stop-color="#8f90ae"/><stop offset="0.242" stop-color="#8e8fad"/><stop offset="0.484" stop-color="#8d8eab"/><stop offset="0.535" stop-color="#898aa7"/><stop offset="0.613" stop-color="#80819f"/><stop offset="0.716" stop-color="#747593"/><stop offset="0.845" stop-color="#646582"/><stop offset="1" stop-color="#4f506d"/></linearGradient>
<linearGradient id="g83" gradientUnits="userSpaceOnUse" x1="0" y1="458.4" x2="0" y2="655.4"><stop offset="0" stop-color="#9091ae"/><stop offset="0.243" stop-color="#8e8fad"/><stop offset="0.486" stop-color="#8d8eac"/><stop offset="0.538" stop-color="#898aa7"/><stop offset="0.615" stop-color="#81829f"/><stop offset="0.717" stop-color="#747593"/><stop offset="0.846" stop-color="#646582"/><stop offset="1" stop-color="#4f506d"/></linearGradient>
<linearGradient id="g84" gradientUnits="userSpaceOnUse" x1="0" y1="457.3" x2="0" y2="653.6"><stop offset="0" stop-color="#9091ae"/><stop offset="0.244" stop-color="#8f90ad"/><stop offset="0.489" stop-color="#8e8fac"/><stop offset="0.54" stop-color="#898aa8"/><stop offset="0.617" stop-color="#81829f"/><stop offset="0.719" stop-color="#757693"/><stop offset="0.847" stop-color="#646582"/><stop offset="1" stop-color="#4f506d"/></linearGradient>
<linearGradient id="g85" gradientUnits="userSpaceOnUse" x1="0" y1="456.2" x2="0" y2="651.8"><stop offset="0" stop-color="#9091af"/><stop offset="0.246" stop-color="#8f90ae"/><stop offset="0.491" stop-color="#8e8fad"/><stop offset="0.542" stop-color="#8a8ba8"/><stop offset="0.618" stop-color="#8182a0"/><stop offset="0.72" stop-color="#757693"/><stop offset="0.847" stop-color="#646583"/><stop offset="1" stop-color="#4f506d"/></linearGradient>
<linearGradient id="g86" gradientUnits="userSpaceOnUse" x1="0" y1="455.2" x2="0" y2="649.9"><stop offset="0" stop-color="#9192af"/><stop offset="0.247" stop-color="#9091ae"/><stop offset="0.494" stop-color="#8f90ad"/><stop offset="0.544" stop-color="#8a8ba8"/><stop offset="0.62" stop-color="#8283a0"/><stop offset="0.722" stop-color="#757694"/><stop offset="0.848" stop-color="#646583"/><stop offset="1" stop-color="#4f506d"/></linearGradient>
<linearGradient id="g87" gradientUnits="userSpaceOnUse" x1="0" y1="454.1" x2="0" y2="648.1"><stop offset="0" stop-color="#9192af"/><stop offset="0.248" stop-color="#9091ae"/><stop offset="0.496" stop-color="#8f90ad"/><stop offset="0.547" stop-color="#8a8ba9"/><stop offset="0.622" stop-color="#8283a0"/><stop offset="0.723" stop-color="#757694"/><stop offset="0.849" stop-color="#656683"/><stop offset="1" stop-color="#4f506e"/></linearGradient>
<linearGradient id="g88" gradientUnits="userSpaceOnUse" x1="0" y1="453.1" x2="0" y2="646.2"><stop offset="0" stop-color="#9192b0"/><stop offset="0.249" stop-color="#9091af"/><stop offset="0.499" stop-color="#8f90ae"/><stop offset="0.549" stop-color="#8b8ca9"/><stop offset="0.624" stop-color="#8283a1"/><stop offset="0.724" stop-color="#767794"/><stop offset="0.85" stop-color="#656683"/><stop offset="1" stop-color="#4f506e"/></linearGradient>
<linearGradient id="g89" gradientUnits="userSpaceOnUse" x1="0" y1="452.1" x2="0" y2="644.3"><stop offset="0" stop-color="#9293b0"/><stop offset="0.251" stop-color="#9192af"/><stop offset="0.503" stop-color="#9091ae"/><stop offset="0.553" stop-color="#8b8ca9"/><stop offset="0.627" stop-color="#8384a1"/><stop offset="0.727" stop-color="#767794"/><stop offset="0.851" stop-color="#656683"/><stop offset="1" stop-color="#4f506e"/></linearGradient>
<linearGradient id="g90" gradientUnits="userSpaceOnUse" x1="0" y1="451.0" x2="0" y2="642.3"><stop offset="0" stop-color="#9293b0"/><stop offset="0.254" stop-color="#9192af"/><stop offset="0.508" stop-color="#9091ae"/><stop offset="0.558" stop-color="#8c8daa"/><stop offset="0.631" stop-color="#8384a1"/><stop offset="0.73" stop-color="#767795"/><stop offset="0.853" stop-color="#656684"/><stop offset="1" stop-color="#4f506e"/></linearGradient>
<linearGradient id="g91" gradientUnits="userSpaceOnUse" x1="0" y1="450.0" x2="0" y2="640.4"><stop offset="0" stop-color="#9293b1"/><stop offset="0.257" stop-color="#9192b0"/><stop offset="0.514" stop-color="#9192af"/><stop offset="0.563" stop-color="#8c8daa"/><stop offset="0.635" stop-color="#8384a2"/><stop offset="0.733" stop-color="#777895"/><stop offset="0.854" stop-color="#656684"/><stop offset="1" stop-color="#50516e"/></linearGradient>
<linearGradient id="g92" gradientUnits="userSpaceOnUse" x1="0" y1="449.0" x2="0" y2="638.4"><stop offset="0" stop-color="#9394b1"/><stop offset="0.26" stop-color="#9293b0"/><stop offset="0.52" stop-color="#9192af"/><stop offset="0.568" stop-color="#8c8dab"/><stop offset="0.64" stop-color="#8485a2"/><stop offset="0.736" stop-color="#777895"/><stop offset="0.856" stop-color="#666784"/><stop offset="1" stop-color="#50516e"/></linearGradient>
<linearGradient id="g93" gradientUnits="userSpaceOnUse" x1="0" y1="448.0" x2="0" y2="636.4"><stop offset="0" stop-color="#9394b1"/><stop offset="0.263" stop-color="#9293b0"/><stop offset="0.525" stop-color="#9192b0"/><stop offset="0.573" stop-color="#8d8eab"/><stop offset="0.644" stop-color="#8485a2"/><stop offset="0.739" stop-color="#777895"/><stop offset="0.858" stop-color="#666784"/><stop offset="1" stop-color="#50516e"/></linearGradient>
<linearGradient id="g94" gradientUnits="userSpaceOnUse" x1="0" y1="447.3" x2="0" y2="634.9"><stop offset="0" stop-color="#9394b2"/><stop offset="0.265" stop-color="#9293b1"/><stop offset="0.529" stop-color="#9293b0"/><stop offset="0.576" stop-color="#8d8eab"/><stop offset="0.647" stop-color="#8485a2"/><stop offset="0.741" stop-color="#777896"/><stop offset="0.859" stop-color="#666784"/><stop offset="1" stop-color="#50516e"/></linearGradient>
<linearGradient id="g95" gradientUnits="userSpaceOnUse" x1="0" y1="446.8" x2="0" y2="633.9"><stop offset="0" stop-color="#9495b2"/><stop offset="0.266" stop-color="#9394b1"/><stop offset="0.532" stop-color="#9293b0"/><stop offset="0.579" stop-color="#8d8eab"/><stop offset="0.649" stop-color="#8485a3"/><stop offset="0.743" stop-color="#777896"/><stop offset="0.86" stop-color="#666784"/><stop offset="1" stop-color="#50516e"/></linearGradient>
<linearGradient id="g96" gradientUnits="userSpaceOnUse" x1="0" y1="446.3" x2="0" y2="632.8"><stop offset="0" stop-color="#9495b2"/><stop offset="0.267" stop-color="#9394b1"/><stop offset="0.535" stop-color="#9293b0"/><stop offset="0.581" stop-color="#8d8eab"/><stop offset="0.651" stop-color="#8586a3"/><stop offset="0.744" stop-color="#787996"/><stop offset="0.86" stop-color="#666784"/><stop offset="1" stop-color="#50516e"/></linearGradient>
<linearGradient id="g97" gradientUnits="userSpaceOnUse" x1="0" y1="445.8" x2="0" y2="631.8"><stop offset="0" stop-color="#9495b2"/><stop offset="0.269" stop-color="#9394b1"/><stop offset="0.538" stop-color="#9293b0"/><stop offset="0.584" stop-color="#8d8eac"/><stop offset="0.653" stop-color="#8586a3"/><stop offset="0.746" stop-color="#787996"/><stop offset="0.861" stop-color="#666784"/><stop offset="1" stop-color="#50516e"/></linearGradient>
<linearGradient id="g98" gradientUnits="userSpaceOnUse" x1="0" y1="445.4" x2="0" y2="630.8"><stop offset="0" stop-color="#9495b2"/><stop offset="0.27" stop-color="#9394b1"/><stop offset="0.541" stop-color="#9293b1"/><stop offset="0.587" stop-color="#8e8fac"/><stop offset="0.655" stop-color="#8586a3"/><stop offset="0.747" stop-color="#787996"/><stop offset="0.862" stop-color="#666784"/><stop offset="1" stop-color="#50516e"/></linearGradient>
<linearGradient id="g99" gradientUnits="userSpaceOnUse" x1="0" y1="444.9" x2="0" y2="629.7"><stop offset="0" stop-color="#9495b2"/><stop offset="0.272" stop-color="#9394b2"/><stop offset="0.543" stop-color="#9394b1"/><stop offset="0.589" stop-color="#8e8fac"/><stop offset="0.658" stop-color="#8586a3"/><stop offset="0.749" stop-color="#787996"/><stop offset="0.863" stop-color="#666785"/><stop offset="1" stop-color="#50516e"/></linearGradient>
<linearGradient id="g100" gradientUnits="userSpaceOnUse" x1="0" y1="444.4" x2="0" y2="628.7"><stop offset="0" stop-color="#9495b3"/><stop offset="0.273" stop-color="#9495b2"/><stop offset="0.546" stop-color="#9394b1"/><stop offset="0.592" stop-color="#8e8fac"/><stop offset="0.66" stop-color="#8586a3"/><stop offset="0.75" stop-color="#787996"/><stop offset="0.864" stop-color="#676885"/><stop offset="1" stop-color="#50516e"/></linearGradient>
<linearGradient id="g101" gradientUnits="userSpaceOnUse" x1="0" y1="443.9" x2="0" y2="627.6"><stop offset="0" stop-color="#9596b3"/><stop offset="0.274" stop-color="#9495b2"/><stop offset="0.549" stop-color="#9394b1"/><stop offset="0.594" stop-color="#8e8fac"/><stop offset="0.662" stop-color="#8586a3"/><stop offset="0.752" stop-color="#787996"/><stop offset="0.865" stop-color="#676885"/><stop offset="1" stop-color="#50516e"/></linearGradient>
<linearGradient id="g102" gradientUnits="userSpaceOnUse" x1="0" y1="443.5" x2="0" y2="626.6"><stop offset="0" stop-color="#9596b3"/><stop offset="0.276" stop-color="#9495b2"/><stop offset="0.552" stop-color="#9394b1"/><stop offset="0.597" stop-color="#8e8fac"/><stop offset="0.664" stop-color="#8687a4"/><stop offset="0.753" stop-color="#787997"/><stop offset="0.866" stop-color="#676885"/><stop offset="1" stop-color="#50516e"/></linearGradient>
<linearGradient id="g103" gradientUnits="userSpaceOnUse" x1="0" y1="443.0" x2="0" y2="625.5"><stop offset="0" stop-color="#9596b3"/><stop offset="0.277" stop-color="#9495b2"/><stop offset="0.555" stop-color="#9394b1"/><stop offset="0.599" stop-color="#8f90ad"/><stop offset="0.666" stop-color="#8687a4"/><stop offset="0.755" stop-color="#797a97"/><stop offset="0.866" stop-color="#676885"/><stop offset="1" stop-color="#50516e"/></linearGradient>
<linearGradient id="g104" gradientUnits="userSpaceOnUse" x1="0" y1="442.6" x2="0" y2="624.4"><stop offset="0" stop-color="#9596b3"/><stop offset="0.279" stop-color="#9495b2"/><stop offset="0.557" stop-color="#9495b2"/><stop offset="0.602" stop-color="#8f90ad"/><stop offset="0.668" stop-color="#8687a4"/><stop offset="0.757" stop-color="#797a97"/><stop offset="0.867" stop-color="#676885"/><stop offset="1" stop-color="#50516e"/></linearGradient>
<linearGradient id="g105" gradientUnits="userSpaceOnUse" x1="0" y1="442.1" x2="0" y2="623.4"><stop offset="0" stop-color="#9596b3"/><stop offset="0.28" stop-color="#9596b3"/><stop offset="0.56" stop-color="#9495b2"/><stop offset="0.604" stop-color="#8f90ad"/><stop offset="0.67" stop-color="#8687a4"/><stop offset="0.758" stop-color="#797a97"/><stop offset="0.868" stop-color="#676885"/><stop offset="1" stop-color="#50516e"/></linearGradient>
<linearGradient id="g106" gradientUnits="userSpaceOnUse" x1="0" y1="441.7" x2="0" y2="622.3"><stop offset="0" stop-color="#9596b3"/><stop offset="0.281" stop-color="#9596b3"/><stop offset="0.563" stop-color="#9495b2"/><stop offset="0.607" stop-color="#8f90ad"/><stop offset="0.672" stop-color="#8687a4"/><stop offset="0.76" stop-color="#797a97"/><stop offset="0.869" stop-color="#676885"/><stop offset="1" stop-color="#50516e"/></linearGradient>
<linearGradient id="g107" gradientUnits="userSpaceOnUse" x1="0" y1="441.2" x2="0" y2="621.2"><stop offset="0" stop-color="#9697b4"/><stop offset="0.283" stop-color="#9596b3"/><stop offset="0.566" stop-color="#9495b2"/><stop offset="0.609" stop-color="#8f90ad"/><stop offset="0.674" stop-color="#8687a4"/><stop offset="0.761" stop-color="#797a97"/><stop offset="0.87" stop-color="#676885"/><stop offset="1" stop-color="#51526f"/></linearGradient>
<linearGradient id="g108" gradientUnits="userSpaceOnUse" x1="0" y1="440.8" x2="0" y2="620.1"><stop offset="0" stop-color="#9697b4"/><stop offset="0.284" stop-color="#9596b3"/><stop offset="0.569" stop-color="#9495b2"/><stop offset="0.612" stop-color="#9091ae"/><stop offset="0.676" stop-color="#8788a5"/><stop offset="0.763" stop-color="#797a97"/><stop offset="0.871" stop-color="#676885"/><stop offset="1" stop-color="#51526f"/></linearGradient>
<linearGradient id="g109" gradientUnits="userSpaceOnUse" x1="0" y1="440.3" x2="0" y2="619.0"><stop offset="0" stop-color="#9697b4"/><stop offset="0.286" stop-color="#9596b3"/><stop offset="0.572" stop-color="#9596b3"/><stop offset="0.615" stop-color="#9091ae"/><stop offset="0.679" stop-color="#8788a5"/><stop offset="0.765" stop-color="#797a97"/><stop offset="0.872" stop-color="#676885"/><stop offset="1" stop-color="#51526f"/></linearGradient>
<linearGradient id="g110" gradientUnits="userSpaceOnUse" x1="0" y1="439.9" x2="0" y2="617.9"><stop offset="0" stop-color="#9697b4"/><stop offset="0.288" stop-color="#9596b3"/><stop offset="0.577" stop-color="#9596b3"/><stop offset="0.619" stop-color="#9091ae"/><stop offset="0.682" stop-color="#8788a5"/><stop offset="0.767" stop-color="#7a7b98"/><stop offset="0.873" stop-color="#686986"/><stop offset="1" stop-color="#51526f"/></linearGradient>
<linearGradient id="g111" gradientUnits="userSpaceOnUse" x1="0" y1="439.5" x2="0" y2="616.8"><stop offset="0" stop-color="#9697b4"/><stop offset="0.29" stop-color="#9697b4"/><stop offset="0.581" stop-color="#9596b3"/><stop offset="0.623" stop-color="#9091ae"/><stop offset="0.686" stop-color="#8788a5"/><stop offset="0.77" stop-color="#7a7b98"/><stop offset="0.874" stop-color="#686986"/><stop offset="1" stop-color="#51526f"/></linearGradient>
<linearGradient id="g112" gradientUnits="userSpaceOnUse" x1="0" y1="439.0" x2="0" y2="615.7"><stop offset="0" stop-color="#9798b4"/><stop offset="0.293" stop-color="#9697b4"/><stop offset="0.585" stop-color="#9596b3"/><stop offset="0.627" stop-color="#9091ae"/><stop offset="0.689" stop-color="#8788a5"/><stop offset="0.772" stop-color="#7a7b98"/><stop offset="0.876" stop-color="#686986"/><stop offset="1" stop-color="#51526f"/></linearGradient>
<linearGradient id="g113" gradientUnits="userSpaceOnUse" x1="0" y1="438.6" x2="0" y2="614.6"><stop offset="0" stop-color="#9798b5"/><stop offset="0.295" stop-color="#9697b4"/><stop offset="0.59" stop-color="#9596b3"/><stop offset="0.631" stop-color="#9091ae"/><stop offset="0.692" stop-color="#8788a5"/><stop offset="0.774" stop-color="#7a7b98"/><stop offset="0.877" stop-color="#686986"/><stop offset="1" stop-color="#51526f"/></linearGradient>
<linearGradient id="g114" gradientUnits="userSpaceOnUse" x1="0" y1="438.2" x2="0" y2="613.5"><stop offset="0" stop-color="#9798b5"/><stop offset="0.297" stop-color="#9697b4"/><stop offset="0.594" stop-color="#9697b3"/><stop offset="0.635" stop-color="#9192af"/><stop offset="0.696" stop-color="#8889a5"/><stop offset="0.777" stop-color="#7a7b98"/><stop offset="0.878" stop-color="#686986"/><stop offset="1" stop-color="#51526f"/></linearGradient>
<linearGradient id="g115" gradientUnits="userSpaceOnUse" x1="0" y1="437.7" x2="0" y2="612.4"><stop offset="0" stop-color="#9798b5"/><stop offset="0.299" stop-color="#9697b4"/><stop offset="0.599" stop-color="#9697b4"/><stop offset="0.639" stop-color="#9192af"/><stop offset="0.699" stop-color="#8889a6"/><stop offset="0.779" stop-color="#7a7b98"/><stop offset="0.88" stop-color="#686986"/><stop offset="1" stop-color="#51526f"/></linearGradient>
<linearGradient id="g116" gradientUnits="userSpaceOnUse" x1="0" y1="437.3" x2="0" y2="611.3"><stop offset="0" stop-color="#9798b5"/><stop offset="0.301" stop-color="#9798b4"/><stop offset="0.603" stop-color="#9697b4"/><stop offset="0.643" stop-color="#9192af"/><stop offset="0.702" stop-color="#8889a6"/><stop offset="0.782" stop-color="#7a7b98"/><stop offset="0.881" stop-color="#686986"/><stop offset="1" stop-color="#51526f"/></linearGradient>
<linearGradient id="g117" gradientUnits="userSpaceOnUse" x1="0" y1="436.9" x2="0" y2="610.1"><stop offset="0" stop-color="#9798b5"/><stop offset="0.304" stop-color="#9798b5"/><stop offset="0.607" stop-color="#9697b4"/><stop offset="0.647" stop-color="#9192af"/><stop offset="0.706" stop-color="#8889a6"/><stop offset="0.784" stop-color="#7b7c98"/><stop offset="0.882" stop-color="#686986"/><stop offset="1" stop-color="#51526f"/></linearGradient>
<linearGradient id="g118" gradientUnits="userSpaceOnUse" x1="0" y1="436.5" x2="0" y2="609.0"><stop offset="0" stop-color="#9899b5"/><stop offset="0.306" stop-color="#9798b5"/><stop offset="0.612" stop-color="#9697b4"/><stop offset="0.651" stop-color="#9192af"/><stop offset="0.709" stop-color="#8889a6"/><stop offset="0.786" stop-color="#7b7c98"/><stop offset="0.884" stop-color="#686986"/><stop offset="1" stop-color="#51526f"/></linearGradient>
<linearGradient id="g119" gradientUnits="userSpaceOnUse" x1="0" y1="436.0" x2="0" y2="607.9"><stop offset="0" stop-color="#9899b6"/><stop offset="0.308" stop-color="#9798b5"/><stop offset="0.616" stop-color="#9697b4"/><stop offset="0.655" stop-color="#9293af"/><stop offset="0.712" stop-color="#8889a6"/><stop offset="0.789" stop-color="#7b7c99"/><stop offset="0.885" stop-color="#686986"/><stop offset="1" stop-color="#51526f"/></linearGradient>
<linearGradient id="g120" gradientUnits="userSpaceOnUse" x1="0" y1="435.6" x2="0" y2="606.7"><stop offset="0" stop-color="#9899b6"/><stop offset="0.31" stop-color="#9798b5"/><stop offset="0.621" stop-color="#9798b4"/><stop offset="0.659" stop-color="#9293b0"/><stop offset="0.715" stop-color="#898aa6"/><stop offset="0.791" stop-color="#7b7c99"/><stop offset="0.886" stop-color="#696a86"/><stop offset="1" stop-color="#51526f"/></linearGradient>
<linearGradient id="g121" gradientUnits="userSpaceOnUse" x1="0" y1="435.2" x2="0" y2="605.6"><stop offset="0" stop-color="#9899b6"/><stop offset="0.312" stop-color="#9798b5"/><stop offset="0.625" stop-color="#9798b5"/><stop offset="0.662" stop-color="#9293b0"/><stop offset="0.719" stop-color="#898aa7"/><stop offset="0.794" stop-color="#7b7c99"/><stop offset="0.887" stop-color="#696a86"/><stop offset="1" stop-color="#51526f"/></linearGradient>
<linearGradient id="g122" gradientUnits="userSpaceOnUse" x1="0" y1="434.8" x2="0" y2="604.4"><stop offset="0" stop-color="#9899b6"/><stop offset="0.315" stop-color="#9899b5"/><stop offset="0.629" stop-color="#9798b5"/><stop offset="0.666" stop-color="#9293b0"/><stop offset="0.722" stop-color="#898aa7"/><stop offset="0.796" stop-color="#7b7c99"/><stop offset="0.889" stop-color="#696a87"/><stop offset="1" stop-color="#51526f"/></linearGradient>
<linearGradient id="g123" gradientUnits="userSpaceOnUse" x1="0" y1="434.4" x2="0" y2="603.3"><stop offset="0" stop-color="#9899b6"/><stop offset="0.317" stop-color="#9899b6"/><stop offset="0.634" stop-color="#9798b5"/><stop offset="0.67" stop-color="#9293b0"/><stop offset="0.725" stop-color="#898aa7"/><stop offset="0.799" stop-color="#7b7c99"/><stop offset="0.89" stop-color="#696a87"/><stop offset="1" stop-color="#51526f"/></linearGradient>
<linearGradient id="g124" gradientUnits="userSpaceOnUse" x1="0" y1="434.0" x2="0" y2="602.1"><stop offset="0" stop-color="#999ab6"/><stop offset="0.319" stop-color="#9899b6"/><stop offset="0.638" stop-color="#9798b5"/><stop offset="0.674" stop-color="#9394b0"/><stop offset="0.729" stop-color="#898aa7"/><stop offset="0.801" stop-color="#7b7c99"/><stop offset="0.891" stop-color="#696a87"/><stop offset="1" stop-color="#51526f"/></linearGradient>
<linearGradient id="g125" gradientUnits="userSpaceOnUse" x1="0" y1="433.6" x2="0" y2="601.0"><stop offset="0" stop-color="#999ab6"/><stop offset="0.321" stop-color="#9899b6"/><stop offset="0.643" stop-color="#9899b5"/><stop offset="0.678" stop-color="#9394b0"/><stop offset="0.732" stop-color="#898aa7"/><stop offset="0.803" stop-color="#7c7d99"/><stop offset="0.893" stop-color="#696a87"/><stop offset="1" stop-color="#51526f"/></linearGradient>
<linearGradient id="g126" gradientUnits="userSpaceOnUse" x1="0" y1="433.2" x2="0" y2="599.8"><stop offset="0" stop-color="#999ab7"/><stop offset="0.324" stop-color="#9899b6"/><stop offset="0.647" stop-color="#9899b6"/><stop offset="0.682" stop-color="#9394b1"/><stop offset="0.735" stop-color="#8a8ba7"/><stop offset="0.806" stop-color="#7c7d99"/><stop offset="0.894" stop-color="#696a87"/><stop offset="1" stop-color="#52536f"/></linearGradient>
<linearGradient id="g127" gradientUnits="userSpaceOnUse" x1="0" y1="432.8" x2="0" y2="598.6"><stop offset="0" stop-color="#999ab7"/><stop offset="0.326" stop-color="#999ab6"/><stop offset="0.651" stop-color="#9899b6"/><stop offset="0.686" stop-color="#9394b1"/><stop offset="0.739" stop-color="#8a8ba7"/><stop offset="0.808" stop-color="#7c7d9a"/><stop offset="0.895" stop-color="#696a87"/><stop offset="1" stop-color="#52536f"/></linearGradient>
<linearGradient id="g128" gradientUnits="userSpaceOnUse" x1="0" y1="432.4" x2="0" y2="597.4"><stop offset="0" stop-color="#999ab7"/><stop offset="0.328" stop-color="#999ab6"/><stop offset="0.656" stop-color="#9899b6"/><stop offset="0.69" stop-color="#9394b1"/><stop offset="0.742" stop-color="#8a8ba8"/><stop offset="0.811" stop-color="#7c7d9a"/><stop offset="0.897" stop-color="#696a87"/><stop offset="1" stop-color="#52536f"/></linearGradient>
<linearGradient id="g129" gradientUnits="userSpaceOnUse" x1="0" y1="432.0" x2="0" y2="596.2"><stop offset="0" stop-color="#999ab7"/><stop offset="0.33" stop-color="#999ab7"/><stop offset="0.66" stop-color="#9899b6"/><stop offset="0.694" stop-color="#9394b1"/><stop offset="0.745" stop-color="#8a8ba8"/><stop offset="0.813" stop-color="#7c7d9a"/><stop offset="0.898" stop-color="#696a87"/><stop offset="1" stop-color="#52536f"/></linearGradient>
<linearGradient id="g130" gradientUnits="userSpaceOnUse" x1="0" y1="431.6" x2="0" y2="595.0"><stop offset="0" stop-color="#9a9bb7"/><stop offset="0.332" stop-color="#999ab7"/><stop offset="0.665" stop-color="#999ab6"/><stop offset="0.698" stop-color="#9495b1"/><stop offset="0.748" stop-color="#8a8ba8"/><stop offset="0.816" stop-color="#7c7d9a"/><stop offset="0.899" stop-color="#6a6b87"/><stop offset="1" stop-color="#52536f"/></linearGradient>
<linearGradient id="g131" gradientUnits="userSpaceOnUse" x1="0" y1="431.2" x2="0" y2="593.8"><stop offset="0" stop-color="#9a9bb7"/><stop offset="0.335" stop-color="#999ab7"/><stop offset="0.669" stop-color="#999ab6"/><stop offset="0.702" stop-color="#9495b1"/><stop offset="0.752" stop-color="#8a8ba8"/><stop offset="0.818" stop-color="#7c7d9a"/><stop offset="0.901" stop-color="#6a6b87"/><stop offset="1" stop-color="#52536f"/></linearGradient>
<linearGradient id="g132" gradientUnits="userSpaceOnUse" x1="0" y1="430.9" x2="0" y2="592.6"><stop offset="0" stop-color="#9a9bb8"/><stop offset="0.337" stop-color="#999ab7"/><stop offset="0.673" stop-color="#999ab7"/><stop offset="0.706" stop-color="#9495b2"/><stop offset="0.755" stop-color="#8b8ca8"/><stop offset="0.82" stop-color="#7d7e9a"/><stop offset="0.902" stop-color="#6a6b87"/><stop offset="1" stop-color="#52536f"/></linearGradient>
<linearGradient id="g133" gradientUnits="userSpaceOnUse" x1="0" y1="430.5" x2="0" y2="591.4"><stop offset="0" stop-color="#9a9bb8"/><stop offset="0.339" stop-color="#9a9bb7"/><stop offset="0.678" stop-color="#999ab7"/><stop offset="0.71" stop-color="#9495b2"/><stop offset="0.758" stop-color="#8b8ca8"/><stop offset="0.823" stop-color="#7d7e9a"/><stop offset="0.903" stop-color="#6a6b87"/><stop offset="1" stop-color="#52536f"/></linearGradient>
<linearGradient id="g134" gradientUnits="userSpaceOnUse" x1="0" y1="430.1" x2="0" y2="590.2"><stop offset="0" stop-color="#9a9bb8"/><stop offset="0.342" stop-color="#9a9bb7"/><stop offset="0.684" stop-color="#999ab7"/><stop offset="0.715" stop-color="#9495b2"/><stop offset="0.763" stop-color="#8b8ca8"/><stop offset="0.826" stop-color="#7d7e9a"/><stop offset="0.905" stop-color="#6a6b88"/><stop offset="1" stop-color="#525370"/></linearGradient>
<linearGradient id="g135" gradientUnits="userSpaceOnUse" x1="0" y1="429.7" x2="0" y2="588.9"><stop offset="0" stop-color="#9a9bb8"/><stop offset="0.345" stop-color="#9a9bb8"/><stop offset="0.691" stop-color="#9a9bb7"/><stop offset="0.722" stop-color="#9596b2"/><stop offset="0.768" stop-color="#8b8ca9"/><stop offset="0.83" stop-color="#7d7e9b"/><stop offset="0.907" stop-color="#6a6b88"/><stop offset="1" stop-color="#525370"/></linearGradient>
<linearGradient id="g136" gradientUnits="userSpaceOnUse" x1="0" y1="429.3" x2="0" y2="587.7"><stop offset="0" stop-color="#9b9cb8"/><stop offset="0.349" stop-color="#9a9bb8"/><stop offset="0.698" stop-color="#9a9bb7"/><stop offset="0.728" stop-color="#9596b2"/><stop offset="0.773" stop-color="#8b8ca9"/><stop offset="0.834" stop-color="#7d7e9b"/><stop offset="0.909" stop-color="#6a6b88"/><stop offset="1" stop-color="#525370"/></linearGradient>
<linearGradient id="g137" gradientUnits="userSpaceOnUse" x1="0" y1="429.0" x2="0" y2="586.4"><stop offset="0" stop-color="#9b9cb8"/><stop offset="0.352" stop-color="#9a9bb8"/><stop offset="0.705" stop-color="#9a9bb8"/><stop offset="0.734" stop-color="#9596b2"/><stop offset="0.779" stop-color="#8b8ca9"/><stop offset="0.838" stop-color="#7d7e9b"/><stop offset="0.911" stop-color="#6a6b88"/><stop offset="1" stop-color="#525370"/></linearGradient>
<linearGradient id="g138" gradientUnits="userSpaceOnUse" x1="0" y1="428.6" x2="0" y2="585.2"><stop offset="0" stop-color="#9b9cb9"/><stop offset="0.356" stop-color="#9b9cb8"/><stop offset="0.712" stop-color="#9a9bb8"/><stop offset="0.741" stop-color="#9596b3"/><stop offset="0.784" stop-color="#8c8da9"/><stop offset="0.842" stop-color="#7d7e9b"/><stop offset="0.914" stop-color="#6a6b88"/><stop offset="1" stop-color="#525370"/></linearGradient>
<linearGradient id="g139" gradientUnits="userSpaceOnUse" x1="0" y1="428.2" x2="0" y2="583.9"><stop offset="0" stop-color="#9b9cb9"/><stop offset="0.359" stop-color="#9b9cb8"/><stop offset="0.719" stop-color="#9a9bb8"/><stop offset="0.747" stop-color="#9596b3"/><stop offset="0.789" stop-color="#8c8da9"/><stop offset="0.845" stop-color="#7e7f9b"/><stop offset="0.916" stop-color="#6a6b88"/><stop offset="1" stop-color="#525370"/></linearGradient>
<linearGradient id="g140" gradientUnits="userSpaceOnUse" x1="0" y1="427.9" x2="0" y2="582.6"><stop offset="0" stop-color="#9b9cb9"/><stop offset="0.363" stop-color="#9b9cb8"/><stop offset="0.726" stop-color="#9b9cb8"/><stop offset="0.753" stop-color="#9596b3"/><stop offset="0.795" stop-color="#8c8da9"/><stop offset="0.849" stop-color="#7e7f9b"/><stop offset="0.918" stop-color="#6b6c88"/><stop offset="1" stop-color="#525370"/></linearGradient>
<linearGradient id="g141" gradientUnits="userSpaceOnUse" x1="0" y1="427.5" x2="0" y2="581.3"><stop offset="0" stop-color="#9b9cb9"/><stop offset="0.367" stop-color="#9b9cb9"/><stop offset="0.733" stop-color="#9b9cb8"/><stop offset="0.76" stop-color="#9697b3"/><stop offset="0.8" stop-color="#8c8daa"/><stop offset="0.853" stop-color="#7e7f9b"/><stop offset="0.92" stop-color="#6b6c88"/><stop offset="1" stop-color="#525370"/></linearGradient>
<linearGradient id="g142" gradientUnits="userSpaceOnUse" x1="0" y1="427.1" x2="0" y2="580.0"><stop offset="0" stop-color="#9c9db9"/><stop offset="0.37" stop-color="#9b9cb9"/><stop offset="0.74" stop-color="#9b9cb8"/><stop offset="0.766" stop-color="#9697b3"/><stop offset="0.805" stop-color="#8c8daa"/><stop offset="0.857" stop-color="#7e7f9b"/><stop offset="0.922" stop-color="#6b6c88"/><stop offset="1" stop-color="#525370"/></linearGradient>
<linearGradient id="g143" gradientUnits="userSpaceOnUse" x1="0" y1="426.8" x2="0" y2="578.7"><stop offset="0" stop-color="#9c9db9"/><stop offset="0.374" stop-color="#9b9cb9"/><stop offset="0.747" stop-color="#9b9cb9"/><stop offset="0.773" stop-color="#9697b3"/><stop offset="0.81" stop-color="#8c8daa"/><stop offset="0.861" stop-color="#7e7f9c"/><stop offset="0.924" stop-color="#6b6c88"/><stop offset="1" stop-color="#525370"/></linearGradient>
<linearGradient id="g144" gradientUnits="userSpaceOnUse" x1="0" y1="426.4" x2="0" y2="577.4"><stop offset="0" stop-color="#9c9db9"/><stop offset="0.377" stop-color="#9c9db9"/><stop offset="0.754" stop-color="#9b9cb9"/><stop offset="0.779" stop-color="#9697b4"/><stop offset="0.816" stop-color="#8d8eaa"/><stop offset="0.865" stop-color="#7e7f9c"/><stop offset="0.926" stop-color="#6b6c88"/><stop offset="1" stop-color="#525370"/></linearGradient>
<linearGradient id="g145" gradientUnits="userSpaceOnUse" x1="0" y1="426.1" x2="0" y2="576.1"><stop offset="0" stop-color="#9c9dba"/><stop offset="0.381" stop-color="#9c9db9"/><stop offset="0.761" stop-color="#9c9db9"/><stop offset="0.785" stop-color="#9697b4"/><stop offset="0.821" stop-color="#8d8eaa"/><stop offset="0.869" stop-color="#7e7f9c"/><stop offset="0.928" stop-color="#6b6c89"/><stop offset="1" stop-color="#535470"/></linearGradient>
<linearGradient id="g146" gradientUnits="userSpaceOnUse" x1="0" y1="425.7" x2="0" y2="574.7"><stop offset="0" stop-color="#9c9dba"/><stop offset="0.384" stop-color="#9c9db9"/><stop offset="0.768" stop-color="#9c9db9"/><stop offset="0.792" stop-color="#9798b4"/><stop offset="0.826" stop-color="#8d8eaa"/><stop offset="0.873" stop-color="#7f809c"/><stop offset="0.931" stop-color="#6b6c89"/><stop offset="1" stop-color="#535470"/></linearGradient>
<linearGradient id="g147" gradientUnits="userSpaceOnUse" x1="0" y1="425.4" x2="0" y2="573.4"><stop offset="0" stop-color="#9d9eba"/><stop offset="0.388" stop-color="#9c9dba"/><stop offset="0.776" stop-color="#9c9db9"/><stop offset="0.798" stop-color="#9798b4"/><stop offset="0.832" stop-color="#8d8eaa"/><stop offset="0.877" stop-color="#7f809c"/><stop offset="0.933" stop-color="#6b6c89"/><stop offset="1" stop-color="#535470"/></linearGradient>
<linearGradient id="g148" gradientUnits="userSpaceOnUse" x1="0" y1="425.0" x2="0" y2="572.1"><stop offset="0" stop-color="#9d9eba"/><stop offset="0.391" stop-color="#9c9dba"/><stop offset="0.783" stop-color="#9c9db9"/><stop offset="0.804" stop-color="#9798b4"/><stop offset="0.837" stop-color="#8d8eab"/><stop offset="0.88" stop-color="#7f809c"/><stop offset="0.935" stop-color="#6b6c89"/><stop offset="1" stop-color="#535470"/></linearGradient>
<linearGradient id="g149" gradientUnits="userSpaceOnUse" x1="0" y1="424.7" x2="0" y2="570.7"><stop offset="0" stop-color="#9d9eba"/><stop offset="0.395" stop-color="#9d9eba"/><stop offset="0.79" stop-color="#9c9dba"/><stop offset="0.811" stop-color="#9798b4"/><stop offset="0.842" stop-color="#8d8eab"/><stop offset="0.884" stop-color="#7f809c"/><stop offset="0.937" stop-color="#6b6c89"/><stop offset="1" stop-color="#535470"/></linearGradient>
<linearGradient id="g150" gradientUnits="userSpaceOnUse" x1="0" y1="424.3" x2="0" y2="569.4"><stop offset="0" stop-color="#9d9eba"/><stop offset="0.398" stop-color="#9d9eba"/><stop offset="0.797" stop-color="#9c9dba"/><stop offset="0.817" stop-color="#9798b5"/><stop offset="0.848" stop-color="#8e8fab"/><stop offset="0.888" stop-color="#7f809c"/><stop offset="0.939" stop-color="#6c6d89"/><stop offset="1" stop-color="#535470"/></linearGradient>
<linearGradient id="g151" gradientUnits="userSpaceOnUse" x1="0" y1="424.0" x2="0" y2="568.0"><stop offset="0" stop-color="#9d9ebb"/><stop offset="0.402" stop-color="#9d9eba"/><stop offset="0.804" stop-color="#9d9eba"/><stop offset="0.824" stop-color="#9798b5"/><stop offset="0.853" stop-color="#8e8fab"/><stop offset="0.892" stop-color="#7f809d"/><stop offset="0.941" stop-color="#6c6d89"/><stop offset="1" stop-color="#535470"/></linearGradient>
<linearGradient id="g152" gradientUnits="userSpaceOnUse" x1="0" y1="423.6" x2="0" y2="566.7"><stop offset="0" stop-color="#9d9ebb"/><stop offset="0.405" stop-color="#9d9eba"/><stop offset="0.811" stop-color="#9d9eba"/><stop offset="0.83" stop-color="#9899b5"/><stop offset="0.858" stop-color="#8e8fab"/><stop offset="0.896" stop-color="#7f809d"/><stop offset="0.943" stop-color="#6c6d89"/><stop offset="1" stop-color="#535470"/></linearGradient>
<linearGradient id="g153" gradientUnits="userSpaceOnUse" x1="0" y1="423.3" x2="0" y2="565.3"><stop offset="0" stop-color="#9e9fbb"/><stop offset="0.409" stop-color="#9d9ebb"/><stop offset="0.818" stop-color="#9d9eba"/><stop offset="0.836" stop-color="#9899b5"/><stop offset="0.864" stop-color="#8e8fab"/><stop offset="0.9" stop-color="#7f809d"/><stop offset="0.945" stop-color="#6c6d89"/><stop offset="1" stop-color="#535470"/></linearGradient>
<linearGradient id="g154" gradientUnits="userSpaceOnUse" x1="0" y1="422.9" x2="0" y2="564.0"><stop offset="0" stop-color="#9e9fbb"/><stop offset="0.413" stop-color="#9d9ebb"/><stop offset="0.825" stop-color="#9d9ebb"/><stop offset="0.843" stop-color="#9899b5"/><stop offset="0.869" stop-color="#8e8fab"/><stop offset="0.904" stop-color="#80819d"/><stop offset="0.948" stop-color="#6c6d89"/><stop offset="1" stop-color="#535470"/></linearGradient>
<linearGradient id="g155" gradientUnits="userSpaceOnUse" x1="0" y1="422.6" x2="0" y2="562.6"><stop offset="0" stop-color="#9e9fbb"/><stop offset="0.416" stop-color="#9e9fbb"/><stop offset="0.832" stop-color="#9d9ebb"/><stop offset="0.849" stop-color="#9899b5"/><stop offset="0.874" stop-color="#8e8fac"/><stop offset="0.908" stop-color="#80819d"/><stop offset="0.95" stop-color="#6c6d89"/><stop offset="1" stop-color="#535470"/></linearGradient>
<linearGradient id="g156" gradientUnits="userSpaceOnUse" x1="0" y1="422.3" x2="0" y2="561.2"><stop offset="0" stop-color="#9e9fbb"/><stop offset="0.42" stop-color="#9e9fbb"/><stop offset="0.839" stop-color="#9e9fbb"/><stop offset="0.855" stop-color="#9899b6"/><stop offset="0.879" stop-color="#8f90ac"/><stop offset="0.912" stop-color="#80819d"/><stop offset="0.952" stop-color="#6c6d89"/><stop offset="1" stop-color="#535470"/></linearGradient>
<linearGradient id="g157" gradientUnits="userSpaceOnUse" x1="0" y1="422.0" x2="0" y2="559.9"><stop offset="0" stop-color="#9e9fbb"/><stop offset="0.423" stop-color="#9e9fbb"/><stop offset="0.846" stop-color="#9e9fbb"/><stop offset="0.862" stop-color="#999ab6"/><stop offset="0.885" stop-color="#8f90ac"/><stop offset="0.916" stop-color="#80819d"/><stop offset="0.954" stop-color="#6c6d8a"/><stop offset="1" stop-color="#535470"/></linearGradient>
<linearGradient id="g158" gradientUnits="userSpaceOnUse" x1="0" y1="421.7" x2="0" y2="558.5"><stop offset="0" stop-color="#9e9fbc"/><stop offset="0.427" stop-color="#9e9fbb"/><stop offset="0.853" stop-color="#9e9fbb"/><stop offset="0.868" stop-color="#999ab6"/><stop offset="0.89" stop-color="#8f90ac"/><stop offset="0.919" stop-color="#80819d"/><stop offset="0.956" stop-color="#6c6d8a"/><stop offset="1" stop-color="#535470"/></linearGradient>
<linearGradient id="g159" gradientUnits="userSpaceOnUse" x1="0" y1="421.4" x2="0" y2="557.1"><stop offset="0" stop-color="#9fa0bc"/><stop offset="0.431" stop-color="#9e9fbc"/><stop offset="0.862" stop-color="#9e9fbb"/><stop offset="0.876" stop-color="#999ab6"/><stop offset="0.896" stop-color="#8f90ac"/><stop offset="0.924" stop-color="#80819e"/><stop offset="0.959" stop-color="#6c6d8a"/><stop offset="1" stop-color="#535470"/></linearGradient>
<linearGradient id="g160" gradientUnits="userSpaceOnUse" x1="0" y1="421.1" x2="0" y2="555.8"><stop offset="0" stop-color="#9fa0bc"/><stop offset="0.436" stop-color="#9fa0bc"/><stop offset="0.872" stop-color="#9e9fbc"/><stop offset="0.885" stop-color="#999ab6"/><stop offset="0.904" stop-color="#8f90ac"/><stop offset="0.929" stop-color="#80819e"/><stop offset="0.962" stop-color="#6d6e8a"/><stop offset="1" stop-color="#535470"/></linearGradient>
<linearGradient id="g161" gradientUnits="userSpaceOnUse" x1="0" y1="420.8" x2="0" y2="554.3"><stop offset="0" stop-color="#9fa0bc"/><stop offset="0.441" stop-color="#9fa0bc"/><stop offset="0.881" stop-color="#9fa0bc"/><stop offset="0.893" stop-color="#999ab6"/><stop offset="0.911" stop-color="#8f90ad"/><stop offset="0.935" stop-color="#81829e"/><stop offset="0.964" stop-color="#6d6e8a"/><stop offset="1" stop-color="#535471"/></linearGradient>
<linearGradient id="g162" gradientUnits="userSpaceOnUse" x1="0" y1="420.5" x2="0" y2="552.9"><stop offset="0" stop-color="#9fa0bc"/><stop offset="0.446" stop-color="#9fa0bc"/><stop offset="0.891" stop-color="#9fa0bc"/><stop offset="0.902" stop-color="#999ab7"/><stop offset="0.918" stop-color="#8f90ad"/><stop offset="0.94" stop-color="#81829e"/><stop offset="0.967" stop-color="#6d6e8a"/><stop offset="1" stop-color="#535471"/></linearGradient>
<linearGradient id="g163" gradientUnits="userSpaceOnUse" x1="0" y1="420.2" x2="0" y2="551.5"><stop offset="0" stop-color="#9fa0bc"/><stop offset="0.451" stop-color="#9fa0bc"/><stop offset="0.901" stop-color="#9fa0bc"/><stop offset="0.911" stop-color="#9a9bb7"/><stop offset="0.926" stop-color="#9091ad"/><stop offset="0.946" stop-color="#81829e"/><stop offset="0.97" stop-color="#6d6e8a"/><stop offset="1" stop-color="#535471"/></linearGradient>
<linearGradient id="g164" gradientUnits="userSpaceOnUse" x1="0" y1="419.9" x2="0" y2="550.0"><stop offset="0" stop-color="#9fa0bd"/><stop offset="0.455" stop-color="#9fa0bc"/><stop offset="0.911" stop-color="#9fa0bc"/><stop offset="0.92" stop-color="#9a9bb7"/><stop offset="0.933" stop-color="#9091ad"/><stop offset="0.951" stop-color="#81829e"/><stop offset="0.973" stop-color="#6d6e8a"/><stop offset="1" stop-color="#545571"/></linearGradient>
<linearGradient id="g165" gradientUnits="userSpaceOnUse" x1="0" y1="419.6" x2="0" y2="548.6"><stop offset="0" stop-color="#a0a1bd"/><stop offset="0.46" stop-color="#9fa0bd"/><stop offset="0.921" stop-color="#9fa0bd"/><stop offset="0.929" stop-color="#9a9bb7"/><stop offset="0.941" stop-color="#9091ad"/><stop offset="0.956" stop-color="#81829e"/><stop offset="0.976" stop-color="#6d6e8a"/><stop offset="1" stop-color="#545571"/></linearGradient>
<linearGradient id="g166" gradientUnits="userSpaceOnUse" x1="0" y1="419.4" x2="0" y2="547.1"><stop offset="0" stop-color="#a0a1bd"/><stop offset="0.465" stop-color="#a0a1bd"/><stop offset="0.93" stop-color="#a0a1bd"/><stop offset="0.937" stop-color="#9a9bb7"/><stop offset="0.948" stop-color="#9091ad"/><stop offset="0.962" stop-color="#81829e"/><stop offset="0.979" stop-color="#6d6e8a"/><stop offset="1" stop-color="#545571"/></linearGradient>
<linearGradient id="g167" gradientUnits="userSpaceOnUse" x1="0" y1="419.1" x2="0" y2="545.6"><stop offset="0" stop-color="#a0a1bd"/><stop offset="0.47" stop-color="#a0a1bd"/><stop offset="0.94" stop-color="#a0a1bd"/><stop offset="0.946" stop-color="#9a9bb7"/><stop offset="0.955" stop-color="#9091ad"/><stop offset="0.967" stop-color="#81829e"/><stop offset="0.982" stop-color="#6d6e8a"/><stop offset="1" stop-color="#545571"/></linearGradient>
<linearGradient id="g168" gradientUnits="userSpaceOnUse" x1="0" y1="418.8" x2="0" y2="544.1"><stop offset="0" stop-color="#a0a1bd"/><stop offset="0.475" stop-color="#a0a1bd"/><stop offset="0.95" stop-color="#a0a1bd"/><stop offset="0.955" stop-color="#9b9cb8"/><stop offset="0.963" stop-color="#9091ae"/><stop offset="0.973" stop-color="#82839f"/><stop offset="0.985" stop-color="#6d6e8a"/><stop offset="1" stop-color="#545571"/></linearGradient>
<linearGradient id="g169" gradientUnits="userSpaceOnUse" x1="0" y1="418.5" x2="0" y2="542.6"><stop offset="0" stop-color="#a0a1bd"/><stop offset="0.479" stop-color="#a0a1bd"/><stop offset="0.958" stop-color="#a0a1bd"/><stop offset="0.962" stop-color="#9b9cb8"/><stop offset="0.968" stop-color="#9192ae"/><stop offset="0.977" stop-color="#82839f"/><stop offset="0.987" stop-color="#6d6e8b"/><stop offset="1" stop-color="#545571"/></linearGradient>
<linearGradient id="g170" gradientUnits="userSpaceOnUse" x1="0" y1="418.3" x2="0" y2="544.3"><stop offset="0" stop-color="#a0a1bd"/><stop offset="0.482" stop-color="#a0a1bd"/><stop offset="0.964" stop-color="#a0a1bd"/><stop offset="0.968" stop-color="#9b9cb8"/><stop offset="0.973" stop-color="#9192ae"/><stop offset="0.98" stop-color="#82839f"/><stop offset="0.989" stop-color="#6e6f8b"/><stop offset="1" stop-color="#545571"/></linearGradient>
<linearGradient id="g171" gradientUnits="userSpaceOnUse" x1="0" y1="418.0" x2="0" y2="568.3"><stop offset="0" stop-color="#a1a2be"/><stop offset="0.485" stop-color="#a1a2be"/><stop offset="0.97" stop-color="#a1a2be"/><stop offset="0.973" stop-color="#9b9cb8"/><stop offset="0.978" stop-color="#9192ae"/><stop offset="0.984" stop-color="#82839f"/><stop offset="0.991" stop-color="#6e6f8b"/><stop offset="1" stop-color="#545571"/></linearGradient>
<linearGradient id="g172" gradientUnits="userSpaceOnUse" x1="0" y1="417.7" x2="0" y2="592.3"><stop offset="0" stop-color="#a1a2be"/><stop offset="0.488" stop-color="#a1a2be"/><stop offset="0.976" stop-color="#a1a2be"/><stop offset="0.978" stop-color="#9b9cb8"/><stop offset="0.982" stop-color="#9192ae"/><stop offset="0.987" stop-color="#82839f"/><stop offset="0.993" stop-color="#6e6f8b"/><stop offset="1" stop-color="#545571"/></linearGradient>
<linearGradient id="g173" gradientUnits="userSpaceOnUse" x1="0" y1="417.5" x2="0" y2="616.3"><stop offset="0" stop-color="#a1a2be"/><stop offset="0.491" stop-color="#a1a2be"/><stop offset="0.982" stop-color="#a1a2be"/><stop offset="0.984" stop-color="#9b9cb8"/><stop offset="0.986" stop-color="#9192ae"/><stop offset="0.99" stop-color="#82839f"/><stop offset="0.995" stop-color="#6e6f8b"/><stop offset="1" stop-color="#545571"/></linearGradient>
<linearGradient id="g174" gradientUnits="userSpaceOnUse" x1="0" y1="417.3" x2="0" y2="640.3"><stop offset="0" stop-color="#a1a2be"/><stop offset="0.494" stop-color="#a1a2be"/><stop offset="0.988" stop-color="#a1a2be"/><stop offset="0.989" stop-color="#9c9db9"/><stop offset="0.991" stop-color="#9192ae"/><stop offset="0.993" stop-color="#82839f"/><stop offset="0.996" stop-color="#6e6f8b"/><stop offset="1" stop-color="#545571"/></linearGradient>
</defs>
<g clip-path="url(#hc)"><rect x="288" y="592" width="9" height="134" fill="url(#g0)"/><rect x="296" y="590" width="9" height="136" fill="url(#g1)"/><rect x="304" y="587" width="9" height="139" fill="url(#g2)"/><rect x="312" y="585" width="9" height="141" fill="url(#g3)"/><rect x="320" y="582" width="9" height="144" fill="url(#g4)"/><rect x="328" y="580" width="9" height="146" fill="url(#g5)"/><rect x="336" y="578" width="9" height="148" fill="url(#g6)"/><rect x="344" y="576" width="9" height="150" fill="url(#g7)"/><rect x="352" y="573" width="9" height="153" fill="url(#g8)"/><rect x="360" y="571" width="9" height="155" fill="url(#g9)"/><rect x="368" y="569" width="9" height="157" fill="url(#g10)"/><rect x="376" y="567" width="9" height="159" fill="url(#g11)"/><rect x="384" y="564" width="9" height="162" fill="url(#g12)"/><rect x="392" y="562" width="9" height="164" fill="url(#g13)"/><rect x="400" y="560" width="9" height="166" fill="url(#g14)"/><rect x="408" y="558" width="9" height="168" fill="url(#g15)"/><rect x="416" y="556" width="9" height="170" fill="url(#g16)"/><rect x="424" y="554" width="9" height="172" fill="url(#g17)"/><rect x="432" y="551" width="9" height="175" fill="url(#g18)"/><rect x="440" y="549" width="9" height="177" fill="url(#g19)"/><rect x="448" y="547" width="9" height="179" fill="url(#g20)"/><rect x="456" y="545" width="9" height="181" fill="url(#g21)"/><rect x="464" y="543" width="9" height="183" fill="url(#g22)"/><rect x="472" y="541" width="9" height="185" fill="url(#g23)"/><rect x="480" y="539" width="9" height="187" fill="url(#g24)"/><rect x="488" y="537" width="9" height="189" fill="url(#g25)"/><rect x="496" y="535" width="9" height="191" fill="url(#g26)"/><rect x="504" y="534" width="9" height="192" fill="url(#g27)"/><rect x="512" y="532" width="9" height="194" fill="url(#g28)"/><rect x="520" y="530" width="9" height="196" fill="url(#g29)"/><rect x="528" y="528" width="9" height="198" fill="url(#g30)"/><rect x="536" y="526" width="9" height="200" fill="url(#g31)"/><rect x="544" y="525" width="9" height="201" fill="url(#g32)"/><rect x="552" y="523" width="9" height="203" fill="url(#g33)"/><rect x="560" y="521" width="9" height="205" fill="url(#g34)"/><rect x="568" y="519" width="9" height="207" fill="url(#g35)"/><rect x="576" y="517" width="9" height="209" fill="url(#g36)"/><rect x="584" y="515" width="9" height="211" fill="url(#g37)"/><rect x="592" y="514" width="9" height="212" fill="url(#g38)"/><rect x="600" y="512" width="9" height="214" fill="url(#g39)"/><rect x="608" y="510" width="9" height="216" fill="url(#g40)"/><rect x="616" y="508" width="9" height="218" fill="url(#g41)"/><rect x="624" y="506" width="9" height="220" fill="url(#g42)"/><rect x="632" y="505" width="9" height="221" fill="url(#g43)"/><rect x="640" y="503" width="9" height="223" fill="url(#g44)"/><rect x="648" y="501" width="9" height="225" fill="url(#g45)"/><rect x="656" y="500" width="9" height="226" fill="url(#g46)"/><rect x="664" y="498" width="9" height="228" fill="url(#g47)"/><rect x="672" y="497" width="9" height="229" fill="url(#g48)"/><rect x="680" y="495" width="9" height="231" fill="url(#g49)"/><rect x="688" y="494" width="9" height="232" fill="url(#g50)"/><rect x="696" y="492" width="9" height="234" fill="url(#g51)"/><rect x="704" y="491" width="9" height="235" fill="url(#g52)"/><rect x="712" y="490" width="9" height="236" fill="url(#g53)"/><rect x="720" y="488" width="9" height="238" fill="url(#g54)"/><rect x="728" y="487" width="9" height="239" fill="url(#g55)"/><rect x="736" y="485" width="9" height="241" fill="url(#g56)"/><rect x="744" y="484" width="9" height="242" fill="url(#g57)"/><rect x="752" y="483" width="9" height="243" fill="url(#g58)"/><rect x="760" y="481" width="9" height="245" fill="url(#g59)"/><rect x="768" y="480" width="9" height="246" fill="url(#g60)"/><rect x="776" y="478" width="9" height="248" fill="url(#g61)"/><rect x="784" y="477" width="9" height="249" fill="url(#g62)"/><rect x="792" y="476" width="9" height="250" fill="url(#g63)"/><rect x="800" y="474" width="9" height="252" fill="url(#g64)"/><rect x="808" y="473" width="9" height="253" fill="url(#g65)"/><rect x="816" y="472" width="9" height="254" fill="url(#g66)"/><rect x="824" y="470" width="9" height="256" fill="url(#g67)"/><rect x="832" y="469" width="9" height="257" fill="url(#g68)"/><rect x="840" y="468" width="9" height="258" fill="url(#g69)"/><rect x="848" y="467" width="9" height="259" fill="url(#g70)"/><rect x="856" y="465" width="9" height="261" fill="url(#g71)"/><rect x="864" y="464" width="9" height="262" fill="url(#g72)"/><rect x="872" y="463" width="9" height="263" fill="url(#g73)"/><rect x="880" y="462" width="9" height="264" fill="url(#g74)"/><rect x="888" y="461" width="9" height="265" fill="url(#g75)"/><rect x="896" y="460" width="9" height="266" fill="url(#g76)"/><rect x="904" y="459" width="9" height="267" fill="url(#g77)"/><rect x="912" y="458" width="9" height="268" fill="url(#g78)"/><rect x="920" y="457" width="9" height="269" fill="url(#g79)"/><rect x="928" y="456" width="9" height="270" fill="url(#g80)"/><rect x="936" y="454" width="9" height="272" fill="url(#g81)"/><rect x="944" y="453" width="9" height="273" fill="url(#g82)"/><rect x="952" y="452" width="9" height="274" fill="url(#g83)"/><rect x="960" y="451" width="9" height="275" fill="url(#g84)"/><rect x="968" y="450" width="9" height="276" fill="url(#g85)"/><rect x="976" y="449" width="9" height="277" fill="url(#g86)"/><rect x="984" y="448" width="9" height="278" fill="url(#g87)"/><rect x="992" y="447" width="9" height="279" fill="url(#g88)"/><rect x="1000" y="446" width="9" height="280" fill="url(#g89)"/><rect x="1008" y="445" width="9" height="281" fill="url(#g90)"/><rect x="1016" y="444" width="9" height="282" fill="url(#g91)"/><rect x="1024" y="443" width="9" height="283" fill="url(#g92)"/><rect x="1032" y="442" width="9" height="284" fill="url(#g93)"/><rect x="1040" y="441" width="5" height="285" fill="url(#g94)"/><rect x="1044" y="441" width="5" height="285" fill="url(#g95)"/><rect x="1048" y="440" width="5" height="286" fill="url(#g96)"/><rect x="1052" y="440" width="5" height="286" fill="url(#g97)"/><rect x="1056" y="439" width="5" height="287" fill="url(#g98)"/><rect x="1060" y="439" width="5" height="287" fill="url(#g99)"/><rect x="1064" y="438" width="5" height="288" fill="url(#g100)"/><rect x="1068" y="438" width="5" height="288" fill="url(#g101)"/><rect x="1072" y="437" width="5" height="289" fill="url(#g102)"/><rect x="1076" y="437" width="5" height="289" fill="url(#g103)"/><rect x="1080" y="437" width="5" height="289" fill="url(#g104)"/><rect x="1084" y="436" width="5" height="290" fill="url(#g105)"/><rect x="1088" y="436" width="5" height="290" fill="url(#g106)"/><rect x="1092" y="435" width="5" height="291" fill="url(#g107)"/><rect x="1096" y="435" width="5" height="291" fill="url(#g108)"/><rect x="1100" y="434" width="5" height="292" fill="url(#g109)"/><rect x="1104" y="434" width="5" height="292" fill="url(#g110)"/><rect x="1108" y="433" width="5" height="293" fill="url(#g111)"/><rect x="1112" y="433" width="5" height="293" fill="url(#g112)"/><rect x="1116" y="433" width="5" height="293" fill="url(#g113)"/><rect x="1120" y="432" width="5" height="294" fill="url(#g114)"/><rect x="1124" y="432" width="5" height="294" fill="url(#g115)"/><rect x="1128" y="431" width="5" height="295" fill="url(#g116)"/><rect x="1132" y="431" width="5" height="295" fill="url(#g117)"/><rect x="1136" y="430" width="5" height="296" fill="url(#g118)"/><rect x="1140" y="430" width="5" height="296" fill="url(#g119)"/><rect x="1144" y="430" width="5" height="296" fill="url(#g120)"/><rect x="1148" y="429" width="5" height="297" fill="url(#g121)"/><rect x="1152" y="429" width="5" height="297" fill="url(#g122)"/><rect x="1156" y="428" width="5" height="298" fill="url(#g123)"/><rect x="1160" y="428" width="5" height="298" fill="url(#g124)"/><rect x="1164" y="428" width="5" height="298" fill="url(#g125)"/><rect x="1168" y="427" width="5" height="299" fill="url(#g126)"/><rect x="1172" y="427" width="5" height="299" fill="url(#g127)"/><rect x="1176" y="426" width="5" height="300" fill="url(#g128)"/><rect x="1180" y="426" width="5" height="300" fill="url(#g129)"/><rect x="1184" y="426" width="5" height="300" fill="url(#g130)"/><rect x="1188" y="425" width="5" height="301" fill="url(#g131)"/><rect x="1192" y="425" width="5" height="301" fill="url(#g132)"/><rect x="1196" y="424" width="5" height="302" fill="url(#g133)"/><rect x="1200" y="424" width="5" height="302" fill="url(#g134)"/><rect x="1204" y="424" width="5" height="302" fill="url(#g135)"/><rect x="1208" y="423" width="5" height="303" fill="url(#g136)"/><rect x="1212" y="423" width="5" height="303" fill="url(#g137)"/><rect x="1216" y="423" width="5" height="303" fill="url(#g138)"/><rect x="1220" y="422" width="5" height="304" fill="url(#g139)"/><rect x="1224" y="422" width="5" height="304" fill="url(#g140)"/><rect x="1228" y="422" width="5" height="304" fill="url(#g141)"/><rect x="1232" y="421" width="5" height="305" fill="url(#g142)"/><rect x="1236" y="421" width="5" height="305" fill="url(#g143)"/><rect x="1240" y="420" width="5" height="306" fill="url(#g144)"/><rect x="1244" y="420" width="5" height="306" fill="url(#g145)"/><rect x="1248" y="420" width="5" height="306" fill="url(#g146)"/><rect x="1252" y="419" width="5" height="307" fill="url(#g147)"/><rect x="1256" y="419" width="5" height="307" fill="url(#g148)"/><rect x="1260" y="419" width="5" height="307" fill="url(#g149)"/><rect x="1264" y="418" width="5" height="308" fill="url(#g150)"/><rect x="1268" y="418" width="5" height="308" fill="url(#g151)"/><rect x="1272" y="418" width="5" height="308" fill="url(#g152)"/><rect x="1276" y="417" width="5" height="309" fill="url(#g153)"/><rect x="1280" y="417" width="5" height="309" fill="url(#g154)"/><rect x="1284" y="417" width="5" height="309" fill="url(#g155)"/><rect x="1288" y="416" width="5" height="310" fill="url(#g156)"/><rect x="1292" y="416" width="5" height="310" fill="url(#g157)"/><rect x="1296" y="416" width="5" height="310" fill="url(#g158)"/><rect x="1300" y="415" width="5" height="311" fill="url(#g159)"/><rect x="1304" y="415" width="5" height="311" fill="url(#g160)"/><rect x="1308" y="415" width="5" height="311" fill="url(#g161)"/><rect x="1312" y="414" width="5" height="312" fill="url(#g162)"/><rect x="1316" y="414" width="5" height="312" fill="url(#g163)"/><rect x="1320" y="414" width="5" height="312" fill="url(#g164)"/><rect x="1324" y="414" width="5" height="312" fill="url(#g165)"/><rect x="1328" y="413" width="5" height="313" fill="url(#g166)"/><rect x="1332" y="413" width="5" height="313" fill="url(#g167)"/><rect x="1336" y="413" width="5" height="313" fill="url(#g168)"/><rect x="1340" y="413" width="5" height="313" fill="url(#g169)"/><rect x="1344" y="412" width="5" height="314" fill="url(#g170)"/><rect x="1348" y="412" width="5" height="314" fill="url(#g171)"/><rect x="1352" y="412" width="5" height="314" fill="url(#g172)"/><rect x="1356" y="411" width="5" height="315" fill="url(#g173)"/><rect x="1360" y="411" width="5" height="315" fill="url(#g174)"/></g>
<path d="M315.0 591.3 L315.1 592.6 L315.3 594.2 L315.5 596.2 L315.7 598.3 L315.9 600.7 L316.3 603.3 L316.6 605.9 L317.1 608.6 L317.6 611.4 L318.2 614.5 L318.9 617.8 L319.6 621.1 L320.4 624.5 L321.2 627.9 L322.0 631.2 L322.9 634.3 L323.8 637.3 L324.7 640.1 L325.6 642.9 L326.6 645.6 L327.7 648.4 L328.8 651.2 L330.0 654.0 L331.4 657.0 L332.9 660.1 L334.5 663.4 L336.3 666.8 L338.1 670.3 L340.0 673.7 L341.9 676.9 L343.8 680.0 L345.7 682.9 L347.6 685.6 L349.7 688.1 L351.7 690.5 L353.8 692.8 L355.9 695.0 L357.8 697.0 L359.7 698.8 L361.4 700.5 L362.9 702.0 L364.3 703.2 L365.6 704.2 L366.8 705.1 L368.0 705.9 L369.1 706.7 L370.3 707.6 L371.4 708.5 L372.6 709.6 L373.8 710.7 L375.1 711.9 L376.3 713.0 L377.5 714.1 L378.5 715.1 L379.3 715.9 L380.0 716.5" fill="none" stroke="#ffff00" stroke-width="1" shape-rendering="crispEdges"/>
<path d="M393.9 568.9 L394.1 570.6 L394.4 572.9 L394.8 575.6 L395.2 578.7 L395.6 581.9 L396.1 585.2 L396.6 588.4 L397.1 591.4 L397.7 594.3 L398.2 597.3 L398.9 600.3 L399.5 603.3 L400.2 606.3 L401.0 609.2 L401.7 612.1 L402.5 615.0 L403.3 617.8 L404.2 620.5 L405.0 623.2 L405.9 625.8 L406.9 628.5 L407.9 631.1 L408.9 633.7 L410.0 636.4 L411.2 639.1 L412.4 641.9 L413.8 644.7 L415.2 647.4 L416.5 650.2 L417.9 652.9 L419.3 655.4 L420.7 657.9 L422.0 660.2 L423.3 662.4 L424.5 664.5 L425.8 666.5 L427.1 668.5 L428.4 670.5 L429.9 672.5 L431.4 674.6 L433.1 676.8 L434.8 679.0 L436.6 681.2 L438.5 683.4 L440.4 685.6 L442.4 687.8 L444.4 690.0 L446.4 692.1 L448.5 694.2 L450.6 696.4 L452.8 698.5 L455.1 700.7 L457.3 702.7 L459.5 704.7 L461.6 706.5 L463.6 708.2 L465.6 709.8 L467.6 711.2 L469.7 712.6 L471.6 713.9 L473.5 715.1 L475.1 716.1 L476.5 716.9 L477.5 717.6" fill="none" stroke="#ffff00" stroke-width="1" shape-rendering="crispEdges"/>
<path d="M477.5 546.9 L477.7 548.7 L478.0 551.0 L478.4 553.8 L478.8 556.8 L479.2 560.1 L479.7 563.5 L480.2 566.8 L480.7 570.0 L481.3 573.1 L481.8 576.3 L482.5 579.5 L483.1 582.8 L483.8 586.1 L484.6 589.4 L485.3 592.6 L486.1 595.7 L486.9 598.8 L487.8 601.8 L488.7 604.9 L489.7 607.9 L490.6 610.9 L491.6 613.8 L492.6 616.6 L493.6 619.3 L494.6 621.9 L495.7 624.5 L496.7 627.0 L497.8 629.5 L498.9 631.9 L499.9 634.2 L501.0 636.4 L502.1 638.6 L503.1 640.7 L504.1 642.6 L505.0 644.4 L506.0 646.1 L507.0 647.8 L508.1 649.6 L509.3 651.5 L510.7 653.6 L512.3 655.8 L513.9 658.1 L515.8 660.6 L517.7 663.0 L519.6 665.6 L521.6 668.1 L523.7 670.5 L525.7 672.9 L527.8 675.3 L529.9 677.7 L532.1 680.0 L534.3 682.4 L536.5 684.7 L538.7 687.0 L540.8 689.1 L542.9 691.1 L544.9 693.0 L546.9 694.8 L548.8 696.5 L550.7 698.1 L552.5 699.7 L554.4 701.1 L556.1 702.5 L557.9 703.9 L559.7 705.2 L561.6 706.5 L563.4 707.7 L565.2 708.9 L566.9 710.0 L568.5 710.9 L569.7 711.7 L570.7 712.3" fill="none" stroke="#ffff00" stroke-width="1" shape-rendering="crispEdges"/>
<path d="M564.3 526.9 L564.5 528.5 L564.8 530.7 L565.2 533.3 L565.6 536.1 L566.0 539.2 L566.5 542.4 L567.0 545.5 L567.5 548.6 L568.1 551.6 L568.6 554.7 L569.3 557.9 L569.9 561.2 L570.6 564.5 L571.4 567.8 L572.1 571.1 L572.9 574.3 L573.7 577.5 L574.6 580.8 L575.5 584.1 L576.5 587.4 L577.4 590.7 L578.4 593.9 L579.4 597.0 L580.4 600.0 L581.4 603.0 L582.6 605.9 L583.7 608.9 L584.8 611.7 L586.0 614.4 L587.0 617.0 L588.0 619.3 L588.9 621.4 L589.6 623.1 L590.1 624.4 L590.5 625.4 L590.8 626.3 L591.2 627.2 L591.7 628.2 L592.3 629.5 L593.2 631.1 L594.3 633.1 L595.5 635.5 L596.9 638.0 L598.4 640.6 L600.0 643.4 L601.6 646.1 L603.3 648.8 L605.0 651.4 L606.7 653.9 L608.5 656.3 L610.3 658.8 L612.2 661.2 L614.1 663.7 L616.0 666.0 L618.0 668.4 L620.0 670.7 L622.0 673.0 L624.0 675.2 L626.0 677.4 L628.0 679.6 L630.1 681.7 L632.3 683.8 L634.6 685.9 L637.1 687.9 L639.9 690.0 L643.1 692.2 L646.5 694.4 L650.0 696.6 L653.3 698.7 L656.3 700.5 L658.8 702.0 L660.7 703.2" fill="none" stroke="#ffff00" stroke-width="1" shape-rendering="crispEdges"/>
<path d="M653.9 507.2 L654.1 508.3 L654.2 509.8 L654.5 511.5 L654.7 513.4 L655.0 515.6 L655.4 517.9 L655.7 520.4 L656.1 522.9 L656.5 525.6 L657.0 528.6 L657.5 531.8 L658.0 535.1 L658.5 538.5 L659.1 541.9 L659.7 545.3 L660.4 548.6 L661.1 551.8 L661.8 555.1 L662.6 558.4 L663.4 561.7 L664.2 565.0 L665.1 568.2 L665.9 571.3 L666.8 574.3 L667.7 577.2 L668.6 580.1 L669.6 582.9 L670.6 585.7 L671.6 588.3 L672.6 590.9 L673.5 593.4 L674.3 595.7 L675.0 597.9 L675.7 599.8 L676.3 601.6 L676.8 603.3 L677.4 605.0 L678.0 606.8 L678.7 608.7 L679.6 610.7 L680.6 612.9 L681.6 615.2 L682.8 617.6 L684.0 620.1 L685.2 622.6 L686.6 625.1 L687.9 627.6 L689.3 630.0 L690.7 632.4 L692.2 634.9 L693.8 637.4 L695.4 639.8 L697.0 642.3 L698.7 644.7 L700.4 647.0 L702.1 649.3 L703.8 651.5 L705.6 653.6 L707.4 655.6 L709.2 657.6 L711.1 659.5 L713.0 661.5 L715.0 663.4 L717.1 665.4 L719.3 667.4 L721.7 669.5 L724.1 671.7 L726.6 673.8 L729.1 675.8 L731.6 677.8 L734.1 679.7 L736.4 681.4 L738.8 683.0 L741.3 684.6 L743.8 686.1 L746.2 687.5 L748.5 688.8 L750.6 689.9 L752.3 690.9 L753.6 691.6" fill="none" stroke="#ffff00" stroke-width="1" shape-rendering="crispEdges"/>
<path d="M748.6 489.8 L748.8 491.5 L749.1 493.7 L749.4 496.4 L749.7 499.3 L750.1 502.5 L750.5 505.8 L751.0 509.0 L751.4 512.1 L751.9 515.1 L752.3 518.3 L752.8 521.4 L753.3 524.7 L753.9 527.9 L754.4 531.2 L755.1 534.6 L755.7 537.9 L756.4 541.3 L757.1 544.8 L757.8 548.3 L758.6 551.8 L759.4 555.3 L760.3 558.9 L761.2 562.3 L762.1 565.7 L763.1 569.1 L764.2 572.7 L765.4 576.4 L766.6 579.9 L767.8 583.3 L768.9 586.4 L769.9 589.1 L770.7 591.4 L771.3 593.0 L771.7 593.9 L771.9 594.4 L772.1 594.6 L772.3 594.9 L772.6 595.2 L773.1 596.0 L773.9 597.4 L774.9 599.4 L776.2 601.8 L777.6 604.5 L779.1 607.5 L780.7 610.5 L782.3 613.6 L784.0 616.5 L785.7 619.3 L787.4 621.9 L789.2 624.6 L791.0 627.2 L792.9 629.7 L794.8 632.3 L796.7 634.8 L798.7 637.2 L800.7 639.6 L802.7 641.9 L804.6 644.1 L806.6 646.1 L808.6 648.2 L810.7 650.3 L813.0 652.4 L815.3 654.5 L817.9 656.8 L820.9 659.3 L824.3 662.1 L828.0 665.0 L831.8 667.9 L835.5 670.7 L838.8 673.2 L841.6 675.3 L843.6 676.9" fill="none" stroke="#ffff00" stroke-width="1" shape-rendering="crispEdges"/>
<path d="M847.4 473.4 L847.5 474.7 L847.7 476.4 L847.9 478.4 L848.1 480.6 L848.3 483.0 L848.5 485.4 L848.8 487.7 L849.0 490.0 L849.2 492.1 L849.4 494.2 L849.6 496.2 L849.8 498.2 L850.1 500.4 L850.3 502.7 L850.7 505.2 L851.1 507.9 L851.6 510.9 L852.2 514.2 L852.8 517.7 L853.5 521.3 L854.2 525.0 L854.9 528.7 L855.7 532.3 L856.4 535.7 L857.2 539.1 L857.9 542.4 L858.8 545.8 L859.6 549.1 L860.4 552.3 L861.3 555.5 L862.1 558.5 L862.9 561.4 L863.7 564.1 L864.5 566.7 L865.2 569.1 L866.0 571.4 L866.7 573.7 L867.5 576.0 L868.4 578.3 L869.3 580.7 L870.2 583.1 L871.1 585.5 L872.1 587.8 L873.1 590.2 L874.1 592.6 L875.2 595.0 L876.5 597.5 L877.9 600.0 L879.5 602.6 L881.2 605.3 L883.0 608.0 L884.9 610.8 L886.8 613.5 L888.9 616.2 L890.9 618.9 L892.9 621.4 L894.9 623.8 L896.9 626.1 L898.8 628.4 L900.8 630.6 L902.9 632.8 L905.1 635.0 L907.5 637.3 L910.0 639.6 L912.9 642.2 L916.2 644.9 L919.8 647.8 L923.4 650.7 L926.8 653.5 L930.0 656.0 L932.7 658.0 L934.6 659.6" fill="none" stroke="#ffff00" stroke-width="1" shape-rendering="crispEdges"/>
<path d="M949.3 459.2 L949.5 461.1 L949.7 463.7 L949.9 466.7 L950.1 470.1 L950.4 473.7 L950.7 477.4 L951.1 481.0 L951.4 484.3 L951.7 487.5 L952.1 490.7 L952.5 493.9 L952.9 497.1 L953.3 500.3 L953.7 503.6 L954.1 506.8 L954.6 510.0 L955.1 513.3 L955.6 516.6 L956.1 519.9 L956.6 523.3 L957.2 526.5 L957.7 529.7 L958.3 532.8 L958.9 535.7 L959.5 538.4 L960.2 541.1 L960.8 543.6 L961.5 546.0 L962.2 548.4 L962.9 550.6 L963.6 552.8 L964.3 555.0 L965.0 557.1 L965.6 559.0 L966.2 560.8 L966.8 562.6 L967.5 564.4 L968.1 566.2 L968.8 568.1 L969.6 570.0 L970.4 572.0 L971.2 574.1 L972.1 576.3 L973.0 578.4 L973.9 580.6 L974.9 582.8 L976.0 584.9 L977.1 587.1 L978.3 589.3 L979.5 591.4 L980.8 593.6 L982.2 595.8 L983.6 598.0 L985.0 600.2 L986.4 602.3 L987.9 604.3 L989.3 606.2 L990.7 608.1 L992.0 609.9 L993.4 611.6 L994.9 613.4 L996.6 615.3 L998.5 617.2 L1000.7 619.3 L1003.4 621.7 L1006.6 624.3 L1010.2 627.2 L1013.9 630.0 L1017.4 632.8 L1020.7 635.3 L1023.4 637.4 L1025.4 638.9" fill="none" stroke="#ffff00" stroke-width="1" shape-rendering="crispEdges"/>
<path d="M1055.8 445.6 L1055.9 447.6 L1056.1 450.1 L1056.2 453.2 L1056.4 456.6 L1056.7 460.3 L1056.9 464.1 L1057.2 467.8 L1057.5 471.4 L1057.8 475.0 L1058.2 478.7 L1058.5 482.5 L1058.9 486.4 L1059.4 490.3 L1059.8 494.1 L1060.2 497.8 L1060.7 501.4 L1061.2 504.8 L1061.7 508.2 L1062.2 511.5 L1062.7 514.8 L1063.3 518.0 L1063.8 521.1 L1064.4 524.1 L1065.0 527.1 L1065.6 530.1 L1066.3 533.0 L1067.0 535.9 L1067.7 538.7 L1068.4 541.4 L1069.1 544.0 L1069.8 546.4 L1070.4 548.6 L1071.0 550.5 L1071.5 552.1 L1071.9 553.6 L1072.4 554.8 L1072.8 556.1 L1073.3 557.4 L1073.9 558.8 L1074.6 560.4 L1075.4 562.2 L1076.2 564.1 L1077.0 566.1 L1077.9 568.2 L1078.9 570.3 L1079.9 572.4 L1081.0 574.4 L1082.1 576.4 L1083.3 578.3 L1084.6 580.3 L1085.9 582.2 L1087.3 584.2 L1088.7 586.1 L1090.1 587.9 L1091.5 589.7 L1092.9 591.4 L1094.2 593.0 L1095.5 594.6 L1096.8 596.1 L1098.1 597.5 L1099.4 598.9 L1100.8 600.3 L1102.2 601.7 L1103.6 603.2 L1105.2 604.8 L1107.0 606.4 L1108.8 608.1 L1110.7 609.8 L1112.4 611.4 L1114.1 612.9 L1115.4 614.1 L1116.4 615.0" fill="none" stroke="#ffff00" stroke-width="1" shape-rendering="crispEdges"/>
<path d="M1166.3 433.7 L1166.4 435.8 L1166.6 438.5 L1166.7 441.7 L1166.9 445.3 L1167.2 449.2 L1167.4 453.2 L1167.6 457.2 L1167.9 461.0 L1168.2 464.8 L1168.5 468.7 L1168.8 472.8 L1169.1 476.9 L1169.4 481.0 L1169.8 485.1 L1170.1 489.1 L1170.5 493.0 L1170.9 496.9 L1171.3 500.7 L1171.8 504.6 L1172.2 508.4 L1172.7 512.1 L1173.1 515.7 L1173.6 519.0 L1174.0 522.0 L1174.4 524.7 L1174.8 527.2 L1175.2 529.4 L1175.6 531.5 L1176.0 533.4 L1176.4 535.3 L1176.9 537.1 L1177.3 538.9 L1177.7 540.7 L1178.2 542.3 L1178.6 543.9 L1179.1 545.4 L1179.6 546.9 L1180.1 548.4 L1180.6 549.9 L1181.2 551.4 L1181.8 553.0 L1182.4 554.6 L1183.1 556.2 L1183.8 557.8 L1184.5 559.4 L1185.2 561.0 L1185.9 562.5 L1186.7 564.0 L1187.5 565.5 L1188.4 566.9 L1189.3 568.3 L1190.2 569.8 L1191.1 571.1 L1192.1 572.4 L1192.9 573.6 L1193.8 574.8 L1194.6 575.9 L1195.3 576.8 L1196.1 577.7 L1196.8 578.6 L1197.5 579.4 L1198.3 580.2 L1199.1 581.0 L1200.0 581.8 L1201.1 582.7 L1202.3 583.6 L1203.6 584.5 L1204.9 585.3 L1206.2 586.2 L1207.3 586.9 L1208.3 587.5 L1209.0 588.0" fill="none" stroke="#ffff00" stroke-width="1" shape-rendering="crispEdges"/>
<path d="M1281.5 423.0 L1281.6 425.0 L1281.7 427.6 L1281.8 430.7 L1282.0 434.2 L1282.1 437.9 L1282.3 441.8 L1282.4 445.6 L1282.6 449.3 L1282.8 453.0 L1282.9 456.8 L1283.1 460.7 L1283.3 464.7 L1283.5 468.7 L1283.7 472.7 L1283.9 476.7 L1284.1 480.7 L1284.4 484.7 L1284.6 488.7 L1284.9 492.8 L1285.2 496.9 L1285.5 500.9 L1285.8 504.8 L1286.2 508.5 L1286.5 512.1 L1286.9 515.5 L1287.3 518.9 L1287.7 522.2 L1288.1 525.3 L1288.5 528.3 L1288.9 531.0 L1289.3 533.5 L1289.6 535.7 L1289.9 537.5 L1290.1 538.9 L1290.2 540.1 L1290.4 541.0 L1290.5 541.9 L1290.7 542.6 L1290.9 543.5 L1291.2 544.4 L1291.5 545.4 L1291.8 546.5 L1292.2 547.5 L1292.6 548.5 L1293.0 549.4 L1293.4 550.4 L1293.9 551.3 L1294.4 552.2 L1295.0 553.1 L1295.7 554.0 L1296.4 554.8 L1297.2 555.7 L1297.9 556.5 L1298.5 557.2 L1299.1 557.7 L1299.5 558.2" fill="none" stroke="#ffff00" stroke-width="1" shape-rendering="crispEdges"/>
<path d="M291.5 598.6 L292.2 598.4 L292.9 598.1 L293.5 597.9 L294.3 597.6 L295.0 597.4 L295.9 597.1 L296.8 596.7 L297.9 596.4 L299.1 596.0 L300.6 595.5 L302.2 595.0 L304.0 594.4 L306.2 593.7 L308.6 593.0 L311.3 592.2 L314.3 591.3 L317.7 590.3 L321.6 589.2 L325.7 588.0 L330.2 586.7 L335.0 585.3 L340.0 583.9 L345.2 582.4 L350.6 580.8 L356.1 579.3 L361.7 577.7 L367.3 576.1 L372.9 574.6 L378.4 573.0 L383.9 571.5 L389.2 570.0 L394.4 568.6 L399.5 567.2 L404.6 565.8 L409.7 564.4 L414.8 563.1 L419.9 561.7 L425.0 560.3 L430.1 558.9 L435.3 557.6 L440.4 556.2 L445.6 554.9 L450.8 553.5 L456.0 552.2 L461.2 550.8 L466.4 549.5 L471.7 548.2 L477.0 546.9 L482.3 545.6 L487.6 544.3 L493.0 543.1 L498.4 541.8 L503.8 540.6 L509.2 539.3 L514.6 538.1 L520.0 536.9 L525.5 535.6 L531.0 534.4 L536.4 533.2 L541.9 531.9 L547.4 530.7 L553.0 529.5 L558.5 528.2 L564.0 527.0 L569.5 525.7 L575.1 524.5 L580.6 523.2 L586.2 521.9 L591.8 520.6 L597.4 519.3 L603.0 518.0 L608.6 516.8 L614.2 515.5 L619.8 514.2 L625.5 513.0 L631.1 511.7 L636.8 510.5 L642.5 509.3 L648.3 508.1 L654.0 506.9 L659.8 505.8 L665.5 504.6 L671.3 503.5 L677.1 502.4 L682.9 501.4 L688.7 500.3 L694.6 499.3 L700.4 498.2 L706.3 497.2 L712.2 496.2 L718.1 495.2 L724.1 494.1 L730.0 493.1 L736.0 492.1 L742.0 491.0 L748.0 490.0 L754.0 488.9 L760.1 487.9 L766.2 486.8 L772.3 485.8 L778.5 484.7 L784.6 483.6 L790.8 482.6 L797.0 481.5 L803.2 480.5 L809.4 479.4 L815.7 478.4 L821.9 477.4 L828.2 476.4 L834.4 475.4 L840.7 474.4 L847.0 473.4 L853.3 472.4 L859.6 471.5 L865.9 470.6 L872.2 469.7 L878.5 468.8 L884.8 467.9 L891.2 467.0 L897.5 466.2 L903.9 465.3 L910.3 464.4 L916.7 463.6 L923.1 462.7 L929.5 461.9 L936.0 461.0 L942.5 460.2 L949.0 459.3 L955.5 458.4 L962.1 457.6 L968.7 456.7 L975.3 455.8 L981.9 454.9 L988.6 454.1 L995.3 453.2 L1001.9 452.3 L1008.6 451.5 L1015.4 450.6 L1022.1 449.7 L1028.8 448.9 L1035.6 448.1 L1042.4 447.2 L1049.1 446.4 L1055.9 445.6 L1062.7 444.8 L1069.5 444.0 L1076.3 443.2 L1083.1 442.4 L1089.9 441.7 L1096.7 440.9 L1103.6 440.2 L1110.4 439.4 L1117.3 438.7 L1124.2 437.9 L1131.1 437.2 L1138.0 436.5 L1145.0 435.7 L1152.0 435.0 L1159.0 434.3 L1166.0 433.6 L1173.1 432.9 L1180.4 432.2 L1187.8 431.5 L1195.3 430.7 L1202.9 430.0 L1210.4 429.3 L1218.0 428.6 L1225.6 427.9 L1233.1 427.2 L1240.5 426.6 L1247.8 425.9 L1254.9 425.3 L1261.8 424.7 L1268.6 424.1 L1275.1 423.5 L1281.3 423.0 L1287.4 422.5 L1293.5 422.0 L1299.5 421.5 L1305.5 421.1 L1311.3 420.7 L1317.1 420.3 L1322.7 419.9 L1328.1 419.5 L1333.2 419.1 L1338.1 418.8 L1342.7 418.5 L1347.0 418.2 L1351.0 417.9 L1354.5 417.7 L1357.7 417.5 L1360.4 417.3 L1360.4 418.2 L1360.4 419.3 L1360.4 420.5 L1360.4 421.9 L1360.4 423.4 L1360.4 425.0 L1360.4 426.7 L1360.4 428.5 L1360.4 430.3 L1360.3 432.1 L1360.3 434.0 L1360.3 435.8 L1360.3 437.7 L1360.3 439.5 L1360.2 441.2 L1360.2 442.8 L1360.2 444.4 L1360.1 445.9 L1360.1 447.5 L1360.0 449.0 L1360.0 450.6 L1359.9 452.1 L1359.9 453.6 L1359.8 455.2 L1359.8 456.7 L1359.7 458.3 L1359.6 459.8 L1359.6 461.4 L1359.5 463.0 L1359.4 464.7 L1359.3 466.3 L1359.2 468.0 L1359.1 469.7 L1359.0 471.5 L1358.9 473.4 L1358.7 475.3 L1358.6 477.2 L1358.5 479.2 L1358.3 481.1 L1358.2 483.1 L1358.0 485.0 L1357.9 486.9 L1357.7 488.8 L1357.6 490.6 L1357.4 492.4 L1357.3 494.1 L1357.1 495.8 L1357.0 497.3 L1356.9 498.8 L1356.7 500.2 L1356.6 501.5 L1356.5 502.8 L1356.4 504.1 L1356.3 505.3 L1356.2 506.4 L1356.1 507.6 L1355.9 508.7 L1355.8 509.7 L1355.7 510.8 L1355.6 511.8 L1355.4 512.9 L1355.3 513.9 L1355.2 515.0 L1355.0 516.0 L1354.8 517.0 L1354.7 518.1 L1354.5 519.1 L1354.3 520.1 L1354.1 521.1 L1353.9 522.1 L1353.7 523.0 L1353.5 524.0 L1353.3 524.9 L1353.1 525.8 L1352.9 526.7 L1352.7 527.6 L1352.5 528.4 L1352.3 529.2 L1352.0 530.0 L1351.8 530.8 L1351.6 531.6 L1351.3 532.3 L1351.0 533.0 L1350.8 533.7 L1350.5 534.4 L1350.2 535.1 L1349.9 535.7 L1349.6 536.4 L1349.3 537.0 L1349.1 537.5 L1348.8 538.1 L1348.5 538.6 L1348.3 539.0 L1348.0 539.5 L1347.8 539.9 L1347.6 540.2 L1347.4 540.5 L1347.2 540.7 L1347.0 540.9 L1346.9 541.1 L1346.7 541.2 L1346.6 541.3 L1346.4 541.3 L1346.3 541.3 L1346.2 541.3 L1346.0 541.3 L1345.9 541.3 L1345.8 541.3 L1345.7 541.3 L1345.6 541.3 L1345.6 541.3 L1345.5 541.3 L1344.0 541.9 L1342.3 542.5 L1340.4 543.2 L1338.3 544.0 L1336.0 544.8 L1333.6 545.8 L1331.0 546.7 L1328.2 547.8 L1325.2 548.9 L1322.0 550.0 L1318.7 551.2 L1315.2 552.5 L1311.5 553.8 L1307.7 555.2 L1303.7 556.6 L1299.5 558.0 L1295.1 559.5 L1290.3 561.1 L1285.3 562.8 L1280.0 564.6 L1274.6 566.5 L1268.9 568.4 L1263.1 570.4 L1257.1 572.4 L1251.1 574.4 L1245.0 576.4 L1238.9 578.4 L1232.8 580.4 L1226.7 582.4 L1220.7 584.3 L1214.8 586.2 L1209.0 588.0 L1203.3 589.8 L1197.6 591.5 L1191.8 593.3 L1186.1 595.0 L1180.3 596.7 L1174.6 598.4 L1168.8 600.1 L1163.0 601.8 L1157.3 603.5 L1151.5 605.2 L1145.7 606.8 L1140.0 608.5 L1134.2 610.1 L1128.5 611.7 L1122.7 613.3 L1117.0 614.9 L1111.3 616.5 L1105.6 618.1 L1099.9 619.6 L1094.2 621.2 L1088.5 622.7 L1082.8 624.2 L1077.1 625.8 L1071.4 627.3 L1065.7 628.8 L1060.0 630.2 L1054.3 631.7 L1048.6 633.2 L1043.0 634.6 L1037.3 636.1 L1031.6 637.5 L1025.9 638.9 L1020.2 640.3 L1014.5 641.7 L1008.9 643.1 L1003.2 644.5 L997.5 645.8 L991.9 647.2 L986.2 648.5 L980.5 649.8 L974.8 651.1 L969.2 652.4 L963.5 653.7 L957.8 655.0 L952.1 656.2 L946.4 657.5 L940.7 658.7 L935.0 659.9 L929.3 661.1 L923.5 662.2 L917.8 663.4 L912.0 664.5 L906.3 665.6 L900.5 666.7 L894.8 667.8 L889.0 668.8 L883.2 669.9 L877.4 670.9 L871.7 672.0 L865.9 673.0 L860.1 674.0 L854.4 675.0 L848.6 676.0 L842.9 677.0 L837.2 678.0 L831.4 679.0 L825.7 679.9 L819.9 680.9 L814.2 681.9 L808.5 682.8 L802.7 683.7 L797.0 684.7 L791.3 685.6 L785.6 686.5 L779.9 687.4 L774.2 688.2 L768.5 689.1 L762.8 689.9 L757.1 690.8 L751.4 691.6 L745.7 692.4 L740.1 693.2 L734.4 694.0 L728.8 694.7 L723.2 695.5 L717.5 696.2 L711.9 696.9 L706.3 697.6 L700.7 698.3 L695.1 699.0 L689.5 699.7 L683.9 700.4 L678.3 701.0 L672.6 701.7 L667.0 702.4 L661.4 703.0 L655.8 703.6 L650.2 704.3 L644.6 704.9 L639.0 705.5 L633.4 706.2 L627.8 706.8 L622.3 707.4 L616.7 708.0 L611.1 708.5 L605.5 709.1 L599.8 709.7 L594.2 710.2 L588.5 710.7 L582.9 711.2 L577.1 711.7 L571.4 712.2 L565.6 712.7 L559.6 713.1 L553.4 713.5 L547.2 713.9 L541.0 714.3 L534.7 714.7 L528.4 715.1 L522.1 715.5 L515.9 715.8 L509.9 716.1 L503.9 716.4 L498.1 716.7 L492.4 717.0 L487.0 717.3 L481.9 717.6 L477.0 717.8 L472.4 718.0 L467.9 718.2 L463.7 718.4 L459.7 718.6 L455.8 718.7 L452.0 718.9 L448.4 719.0 L444.9 719.1 L441.5 719.2 L438.3 719.3 L435.1 719.4 L432.0 719.5 L428.9 719.6 L425.9 719.6 L422.9 719.7 L420.0 719.8 L417.1 719.9 L414.3 719.9 L411.6 720.0 L409.0 720.1 L406.5 720.1 L404.0 720.1 L401.6 720.2 L399.3 720.2 L397.1 720.2 L394.9 720.3 L392.8 720.3 L390.7 720.3 L388.7 720.3 L386.8 720.4 L384.9 720.4 L383.0 720.4 L381.2 720.4 L379.4 720.4 L377.6 720.5 L375.9 720.5 L374.3 720.5 L372.7 720.5 L371.2 720.5 L369.7 720.5 L368.3 720.5 L367.0 720.5 L365.7 720.5 L364.6 720.5 L363.5 720.5 L362.6 720.5 L361.7 720.5 L361.0 720.5 L360.6 720.2 L360.1 719.9 L359.5 719.6 L358.8 719.2 L358.1 718.8 L357.3 718.4 L356.5 717.9 L355.7 717.4 L354.8 716.9 L353.9 716.4 L353.0 715.8 L352.1 715.3 L351.2 714.7 L350.3 714.1 L349.4 713.5 L348.6 712.9 L347.8 712.3 L346.9 711.7 L346.0 711.0 L345.2 710.3 L344.3 709.6 L343.4 708.9 L342.5 708.2 L341.6 707.5 L340.7 706.7 L339.7 706.0 L338.8 705.2 L337.9 704.5 L337.0 703.7 L336.1 702.9 L335.2 702.2 L334.3 701.4 L333.4 700.7 L332.5 699.9 L331.6 699.2 L330.7 698.5 L329.8 697.8 L328.9 697.1 L328.0 696.4 L327.1 695.7 L326.3 695.0 L325.4 694.2 L324.5 693.4 L323.6 692.5 L322.7 691.6 L321.8 690.7 L320.9 689.7 L320.0 688.6 L319.1 687.5 L318.2 686.2 L317.2 685.0 L316.3 683.7 L315.3 682.3 L314.4 680.9 L313.4 679.4 L312.5 678.0 L311.6 676.5 L310.7 674.9 L309.8 673.4 L308.9 671.9 L308.0 670.3 L307.2 668.8 L306.4 667.2 L305.7 665.7 L305.0 664.2 L304.3 662.6 L303.7 661.1 L303.0 659.5 L302.4 657.9 L301.8 656.3 L301.3 654.7 L300.7 653.0 L300.2 651.4 L299.7 649.8 L299.2 648.1 L298.7 646.5 L298.3 644.9 L297.8 643.2 L297.4 641.6 L297.0 640.0 L296.6 638.4 L296.2 636.7 L295.9 635.0 L295.6 633.3 L295.3 631.6 L295.0 629.9 L294.7 628.2 L294.5 626.5 L294.3 624.9 L294.0 623.2 L293.8 621.6 L293.6 620.0 L293.4 618.5 L293.3 617.0 L293.1 615.6 L292.9 614.3 L292.7 613.0 L292.6 611.8 L292.5 610.5 L292.3 609.3 L292.2 608.1 L292.1 607.0 L292.0 605.9 L291.9 604.8 L291.9 603.8 L291.8 602.9 L291.7 602.0 L291.7 601.2 L291.6 600.4 L291.6 599.7 L291.5 599.1 L291.5 598.6 Z" fill="none" stroke="#a8a8a8" stroke-width="2" stroke-linejoin="round" shape-rendering="crispEdges"/>
<g shape-rendering="crispEdges"><rect x="230" y="749" width="1" height="1" fill="#000"/><rect x="238" y="748" width="1" height="1" fill="#000"/><rect x="246" y="746" width="1" height="1" fill="#000"/><rect x="254" y="745" width="1" height="1" fill="#000"/><rect x="262" y="743" width="1" height="1" fill="#000"/><rect x="270" y="742" width="1" height="1" fill="#000"/><rect x="278" y="740" width="1" height="1" fill="#000"/><rect x="286" y="739" width="1" height="1" fill="#000"/><rect x="294" y="737" width="1" height="1" fill="#000"/><rect x="302" y="736" width="1" height="1" fill="#000"/><rect x="310" y="734" width="1" height="1" fill="#000"/><rect x="318" y="733" width="1" height="1" fill="#000"/><rect x="326" y="731" width="1" height="1" fill="#000"/><rect x="334" y="730" width="1" height="1" fill="#000"/><rect x="342" y="728" width="1" height="1" fill="#000"/><rect x="350" y="727" width="1" height="1" fill="#000"/><rect x="358" y="725" width="1" height="1" fill="#000"/><rect x="366" y="724" width="1" height="1" fill="#000"/><rect x="374" y="722" width="1" height="1" fill="#000"/><rect x="382" y="721" width="1" height="1" fill="#000"/><rect x="390" y="719" width="1" height="1" fill="rgba(0,0,0,0.42)"/><rect x="398" y="718" width="1" height="1" fill="rgba(0,0,0,0.42)"/><rect x="406" y="716" width="1" height="1" fill="rgba(0,0,0,0.42)"/><rect x="414" y="715" width="1" height="1" fill="rgba(0,0,0,0.42)"/><rect x="422" y="713" width="1" height="1" fill="rgba(0,0,0,0.42)"/><rect x="430" y="712" width="1" height="1" fill="rgba(0,0,0,0.42)"/><rect x="438" y="710" width="1" height="1" fill="rgba(0,0,0,0.42)"/><rect x="446" y="709" width="1" height="1" fill="rgba(0,0,0,0.42)"/><rect x="454" y="707" width="1" height="1" fill="rgba(0,0,0,0.42)"/><rect x="462" y="706" width="1" height="1" fill="rgba(0,0,0,0.42)"/><rect x="470" y="704" width="1" height="1" fill="rgba(0,0,0,0.42)"/><rect x="478" y="703" width="1" height="1" fill="rgba(0,0,0,0.42)"/><rect x="486" y="701" width="1" height="1" fill="rgba(0,0,0,0.42)"/><rect x="494" y="700" width="1" height="1" fill="rgba(0,0,0,0.42)"/><rect x="502" y="698" width="1" height="1" fill="rgba(0,0,0,0.42)"/><rect x="510" y="697" width="1" height="1" fill="rgba(0,0,0,0.42)"/><rect x="518" y="695" width="1" height="1" fill="rgba(0,0,0,0.42)"/><rect x="526" y="694" width="1" height="1" fill="rgba(0,0,0,0.42)"/><rect x="534" y="692" width="1" height="1" fill="rgba(0,0,0,0.42)"/><rect x="542" y="691" width="1" height="1" fill="rgba(0,0,0,0.42)"/><rect x="550" y="689" width="1" height="1" fill="rgba(0,0,0,0.42)"/><rect x="558" y="688" width="1" height="1" fill="rgba(0,0,0,0.42)"/><rect x="566" y="686" width="1" height="1" fill="rgba(0,0,0,0.42)"/><rect x="574" y="685" width="1" height="1" fill="rgba(0,0,0,0.42)"/><rect x="582" y="683" width="1" height="1" fill="rgba(0,0,0,0.42)"/><rect x="590" y="682" width="1" height="1" fill="rgba(0,0,0,0.42)"/><rect x="598" y="680" width="1" height="1" fill="rgba(0,0,0,0.42)"/><rect x="606" y="679" width="1" height="1" fill="rgba(0,0,0,0.42)"/><rect x="614" y="677" width="1" height="1" fill="rgba(0,0,0,0.42)"/><rect x="622" y="676" width="1" height="1" fill="rgba(0,0,0,0.42)"/><rect x="630" y="674" width="1" height="1" fill="rgba(0,0,0,0.42)"/><rect x="638" y="673" width="1" height="1" fill="rgba(0,0,0,0.42)"/><rect x="646" y="671" width="1" height="1" fill="rgba(0,0,0,0.42)"/><rect x="654" y="670" width="1" height="1" fill="rgba(0,0,0,0.42)"/><rect x="662" y="668" width="1" height="1" fill="rgba(0,0,0,0.42)"/><rect x="670" y="667" width="1" height="1" fill="rgba(0,0,0,0.42)"/><rect x="678" y="665" width="1" height="1" fill="rgba(0,0,0,0.42)"/><rect x="686" y="664" width="1" height="1" fill="rgba(0,0,0,0.42)"/><rect x="694" y="662" width="1" height="1" fill="rgba(0,0,0,0.42)"/><rect x="702" y="661" width="1" height="1" fill="rgba(0,0,0,0.42)"/><rect x="710" y="659" width="1" height="1" fill="rgba(0,0,0,0.42)"/><rect x="718" y="658" width="1" height="1" fill="rgba(0,0,0,0.42)"/><rect x="726" y="656" width="1" height="1" fill="rgba(0,0,0,0.42)"/><rect x="734" y="655" width="1" height="1" fill="rgba(0,0,0,0.42)"/><rect x="742" y="653" width="1" height="1" fill="rgba(0,0,0,0.42)"/><rect x="750" y="652" width="1" height="1" fill="rgba(0,0,0,0.42)"/><rect x="758" y="650" width="1" height="1" fill="rgba(0,0,0,0.42)"/><rect x="766" y="649" width="1" height="1" fill="rgba(0,0,0,0.42)"/><rect x="774" y="647" width="1" height="1" fill="rgba(0,0,0,0.42)"/><rect x="782" y="646" width="1" height="1" fill="rgba(0,0,0,0.42)"/><rect x="790" y="644" width="1" height="1" fill="rgba(0,0,0,0.42)"/><rect x="798" y="643" width="1" height="1" fill="rgba(0,0,0,0.42)"/><rect x="806" y="641" width="1" height="1" fill="rgba(0,0,0,0.42)"/><rect x="814" y="640" width="1" height="1" fill="rgba(0,0,0,0.42)"/><rect x="822" y="638" width="1" height="1" fill="rgba(0,0,0,0.42)"/><rect x="830" y="637" width="1" height="1" fill="rgba(0,0,0,0.42)"/><rect x="838" y="635" width="1" height="1" fill="rgba(0,0,0,0.42)"/><rect x="846" y="634" width="1" height="1" fill="rgba(0,0,0,0.42)"/><rect x="854" y="632" width="1" height="1" fill="rgba(0,0,0,0.42)"/><rect x="862" y="631" width="1" height="1" fill="rgba(0,0,0,0.42)"/><rect x="870" y="629" width="1" height="1" fill="rgba(0,0,0,0.42)"/><rect x="878" y="628" width="1" height="1" fill="rgba(0,0,0,0.42)"/><rect x="886" y="626" width="1" height="1" fill="rgba(0,0,0,0.42)"/><rect x="894" y="625" width="1" height="1" fill="rgba(0,0,0,0.42)"/><rect x="902" y="623" width="1" height="1" fill="rgba(0,0,0,0.42)"/><rect x="910" y="622" width="1" height="1" fill="rgba(0,0,0,0.42)"/><rect x="918" y="620" width="1" height="1" fill="rgba(0,0,0,0.42)"/><rect x="926" y="619" width="1" height="1" fill="rgba(0,0,0,0.42)"/><rect x="934" y="617" width="1" height="1" fill="rgba(0,0,0,0.42)"/><rect x="942" y="616" width="1" height="1" fill="rgba(0,0,0,0.42)"/><rect x="950" y="614" width="1" height="1" fill="rgba(0,0,0,0.42)"/><rect x="958" y="613" width="1" height="1" fill="rgba(0,0,0,0.42)"/><rect x="966" y="611" width="1" height="1" fill="rgba(0,0,0,0.42)"/><rect x="974" y="610" width="1" height="1" fill="rgba(0,0,0,0.42)"/><rect x="982" y="608" width="1" height="1" fill="rgba(0,0,0,0.42)"/><rect x="990" y="607" width="1" height="1" fill="rgba(0,0,0,0.42)"/><rect x="998" y="605" width="1" height="1" fill="rgba(0,0,0,0.42)"/><rect x="1006" y="604" width="1" height="1" fill="rgba(0,0,0,0.42)"/><rect x="1014" y="602" width="1" height="1" fill="rgba(0,0,0,0.42)"/><rect x="1022" y="601" width="1" height="1" fill="rgba(0,0,0,0.42)"/><rect x="1030" y="599" width="1" height="1" fill="rgba(0,0,0,0.42)"/><rect x="1038" y="598" width="1" height="1" fill="rgba(0,0,0,0.42)"/><rect x="1046" y="596" width="1" height="1" fill="rgba(0,0,0,0.42)"/><rect x="1054" y="595" width="1" height="1" fill="rgba(0,0,0,0.42)"/><rect x="1062" y="593" width="1" height="1" fill="rgba(0,0,0,0.42)"/><rect x="1070" y="592" width="1" height="1" fill="rgba(0,0,0,0.42)"/><rect x="1078" y="590" width="1" height="1" fill="rgba(0,0,0,0.42)"/><rect x="1086" y="589" width="1" height="1" fill="rgba(0,0,0,0.42)"/><rect x="1094" y="587" width="1" height="1" fill="rgba(0,0,0,0.42)"/><rect x="1102" y="586" width="1" height="1" fill="rgba(0,0,0,0.42)"/><rect x="1110" y="584" width="1" height="1" fill="rgba(0,0,0,0.42)"/><rect x="1118" y="583" width="1" height="1" fill="rgba(0,0,0,0.42)"/><rect x="1126" y="581" width="1" height="1" fill="rgba(0,0,0,0.42)"/><rect x="1134" y="580" width="1" height="1" fill="rgba(0,0,0,0.42)"/><rect x="1142" y="578" width="1" height="1" fill="rgba(0,0,0,0.42)"/><rect x="1150" y="577" width="1" height="1" fill="rgba(0,0,0,0.42)"/><rect x="1158" y="575" width="1" height="1" fill="rgba(0,0,0,0.42)"/><rect x="1166" y="574" width="1" height="1" fill="rgba(0,0,0,0.42)"/><rect x="1174" y="572" width="1" height="1" fill="rgba(0,0,0,0.42)"/><rect x="1182" y="571" width="1" height="1" fill="rgba(0,0,0,0.42)"/><rect x="1190" y="569" width="1" height="1" fill="rgba(0,0,0,0.42)"/><rect x="1198" y="568" width="1" height="1" fill="rgba(0,0,0,0.42)"/><rect x="1206" y="566" width="1" height="1" fill="rgba(0,0,0,0.42)"/><rect x="1214" y="565" width="1" height="1" fill="rgba(0,0,0,0.42)"/><rect x="1222" y="563" width="1" height="1" fill="rgba(0,0,0,0.42)"/><rect x="1230" y="562" width="1" height="1" fill="rgba(0,0,0,0.42)"/><rect x="1238" y="560" width="1" height="1" fill="rgba(0,0,0,0.42)"/><rect x="1246" y="559" width="1" height="1" fill="rgba(0,0,0,0.42)"/><rect x="1254" y="557" width="1" height="1" fill="rgba(0,0,0,0.42)"/><rect x="1262" y="556" width="1" height="1" fill="rgba(0,0,0,0.42)"/><rect x="1270" y="554" width="1" height="1" fill="rgba(0,0,0,0.42)"/><rect x="1278" y="553" width="1" height="1" fill="rgba(0,0,0,0.42)"/><rect x="1286" y="551" width="1" height="1" fill="rgba(0,0,0,0.42)"/><rect x="1294" y="550" width="1" height="1" fill="rgba(0,0,0,0.42)"/><rect x="1302" y="548" width="1" height="1" fill="rgba(0,0,0,0.42)"/><rect x="1310" y="547" width="1" height="1" fill="rgba(0,0,0,0.42)"/><rect x="1318" y="545" width="1" height="1" fill="rgba(0,0,0,0.42)"/><rect x="1326" y="544" width="1" height="1" fill="rgba(0,0,0,0.42)"/><rect x="1334" y="542" width="1" height="1" fill="rgba(0,0,0,0.42)"/><rect x="1342" y="541" width="1" height="1" fill="rgba(0,0,0,0.42)"/><rect x="1350" y="539" width="1" height="1" fill="#000"/><rect x="1358" y="538" width="1" height="1" fill="#000"/><rect x="1366" y="536" width="1" height="1" fill="#000"/><rect x="1374" y="535" width="1" height="1" fill="#000"/><rect x="1382" y="533" width="1" height="1" fill="#000"/><rect x="1390" y="532" width="1" height="1" fill="#000"/><rect x="1102" y="399" width="1" height="1" fill="#000"/><rect x="1110" y="403" width="1" height="1" fill="#000"/><rect x="1118" y="408" width="1" height="1" fill="#000"/><rect x="1126" y="412" width="1" height="1" fill="#000"/><rect x="1134" y="416" width="1" height="1" fill="#000"/><rect x="1142" y="420" width="1" height="1" fill="#000"/><rect x="1150" y="425" width="1" height="1" fill="#000"/><rect x="1158" y="429" width="1" height="1" fill="#000"/><rect x="1166" y="433" width="1" height="1" fill="#000"/><rect x="1174" y="438" width="1" height="1" fill="rgba(0,0,0,0.42)"/><rect x="1182" y="442" width="1" height="1" fill="rgba(0,0,0,0.42)"/><rect x="1190" y="446" width="1" height="1" fill="rgba(0,0,0,0.42)"/><rect x="1198" y="451" width="1" height="1" fill="rgba(0,0,0,0.42)"/><rect x="1206" y="455" width="1" height="1" fill="rgba(0,0,0,0.42)"/><rect x="1214" y="459" width="1" height="1" fill="rgba(0,0,0,0.42)"/><rect x="1222" y="464" width="1" height="1" fill="rgba(0,0,0,0.42)"/><rect x="1230" y="468" width="1" height="1" fill="rgba(0,0,0,0.42)"/><rect x="1238" y="472" width="1" height="1" fill="rgba(0,0,0,0.42)"/><rect x="1246" y="476" width="1" height="1" fill="rgba(0,0,0,0.42)"/><rect x="1254" y="481" width="1" height="1" fill="rgba(0,0,0,0.42)"/><rect x="1262" y="485" width="1" height="1" fill="rgba(0,0,0,0.42)"/><rect x="1270" y="489" width="1" height="1" fill="rgba(0,0,0,0.42)"/><rect x="1278" y="494" width="1" height="1" fill="rgba(0,0,0,0.42)"/><rect x="1286" y="498" width="1" height="1" fill="rgba(0,0,0,0.42)"/><rect x="1294" y="502" width="1" height="1" fill="rgba(0,0,0,0.42)"/><rect x="1302" y="506" width="1" height="1" fill="rgba(0,0,0,0.42)"/><rect x="1310" y="511" width="1" height="1" fill="rgba(0,0,0,0.42)"/><rect x="1318" y="515" width="1" height="1" fill="rgba(0,0,0,0.42)"/><rect x="1326" y="519" width="1" height="1" fill="rgba(0,0,0,0.42)"/><rect x="1334" y="524" width="1" height="1" fill="rgba(0,0,0,0.42)"/><rect x="1342" y="528" width="1" height="1" fill="rgba(0,0,0,0.42)"/><rect x="1350" y="532" width="1" height="1" fill="rgba(0,0,0,0.42)"/><rect x="1358" y="537" width="1" height="1" fill="#000"/><rect x="1366" y="541" width="1" height="1" fill="#000"/><rect x="1374" y="545" width="1" height="1" fill="#000"/><rect x="1382" y="550" width="1" height="1" fill="#000"/><rect x="1390" y="554" width="1" height="1" fill="#000"/><rect x="1360" y="126" width="1" height="1" fill="#000"/><rect x="1360" y="134" width="1" height="1" fill="#000"/><rect x="1360" y="142" width="1" height="1" fill="#000"/><rect x="1360" y="150" width="1" height="1" fill="#000"/><rect x="1360" y="158" width="1" height="1" fill="#000"/><rect x="1360" y="166" width="1" height="1" fill="#000"/><rect x="1360" y="174" width="1" height="1" fill="#000"/><rect x="1360" y="182" width="1" height="1" fill="#000"/><rect x="1360" y="190" width="1" height="1" fill="#000"/><rect x="1360" y="198" width="1" height="1" fill="#000"/><rect x="1360" y="206" width="1" height="1" fill="#000"/><rect x="1360" y="214" width="1" height="1" fill="#000"/><rect x="1360" y="222" width="1" height="1" fill="#000"/><rect x="1360" y="230" width="1" height="1" fill="#000"/><rect x="1360" y="238" width="1" height="1" fill="#000"/><rect x="1360" y="246" width="1" height="1" fill="#000"/><rect x="1360" y="254" width="1" height="1" fill="#000"/><rect x="1360" y="262" width="1" height="1" fill="#000"/><rect x="1360" y="270" width="1" height="1" fill="#000"/><rect x="1360" y="278" width="1" height="1" fill="#000"/><rect x="1360" y="286" width="1" height="1" fill="#000"/><rect x="1360" y="294" width="1" height="1" fill="#000"/><rect x="1360" y="302" width="1" height="1" fill="#000"/><rect x="1360" y="310" width="1" height="1" fill="#000"/><rect x="1360" y="318" width="1" height="1" fill="#000"/><rect x="1360" y="326" width="1" height="1" fill="#000"/><rect x="1360" y="334" width="1" height="1" fill="#000"/><rect x="1360" y="342" width="1" height="1" fill="#000"/><rect x="1360" y="350" width="1" height="1" fill="#000"/><rect x="1360" y="358" width="1" height="1" fill="#000"/><rect x="1360" y="366" width="1" height="1" fill="#000"/><rect x="1360" y="374" width="1" height="1" fill="#000"/><rect x="1360" y="382" width="1" height="1" fill="#000"/><rect x="1360" y="390" width="1" height="1" fill="#000"/><rect x="1360" y="398" width="1" height="1" fill="#000"/><rect x="1360" y="406" width="1" height="1" fill="#000"/><rect x="1360" y="414" width="1" height="1" fill="#000"/><rect x="1360" y="422" width="1" height="1" fill="#000"/><rect x="1360" y="430" width="1" height="1" fill="#000"/><rect x="1360" y="438" width="1" height="1" fill="#000"/><rect x="1360" y="446" width="1" height="1" fill="#000"/><rect x="1360" y="454" width="1" height="1" fill="#000"/><rect x="1360" y="462" width="1" height="1" fill="#000"/><rect x="1360" y="470" width="1" height="1" fill="#000"/><rect x="1360" y="478" width="1" height="1" fill="#000"/><rect x="1360" y="486" width="1" height="1" fill="#000"/><rect x="1360" y="494" width="1" height="1" fill="#000"/><rect x="1360" y="502" width="1" height="1" fill="#000"/><rect x="1360" y="510" width="1" height="1" fill="#000"/><rect x="1360" y="518" width="1" height="1" fill="#000"/><rect x="1360" y="526" width="1" height="1" fill="#000"/><rect x="1360" y="534" width="1" height="1" fill="#000"/><rect x="1360" y="542" width="1" height="1" fill="#000"/><rect x="1360" y="550" width="1" height="1" fill="#000"/><rect x="1360" y="558" width="1" height="1" fill="#000"/><rect x="1360" y="566" width="1" height="1" fill="#000"/><rect x="1360" y="574" width="1" height="1" fill="#000"/><rect x="1360" y="582" width="1" height="1" fill="#000"/><rect x="1360" y="590" width="1" height="1" fill="#000"/><rect x="1360" y="598" width="1" height="1" fill="#000"/><rect x="1360" y="606" width="1" height="1" fill="#000"/><rect x="1360" y="614" width="1" height="1" fill="#000"/><rect x="1360" y="622" width="1" height="1" fill="#000"/><rect x="1360" y="630" width="1" height="1" fill="#000"/><rect x="1360" y="638" width="1" height="1" fill="#000"/><rect x="1360" y="646" width="1" height="1" fill="#000"/><rect x="1360" y="654" width="1" height="1" fill="#000"/><rect x="1360" y="662" width="1" height="1" fill="#000"/><rect x="1360" y="670" width="1" height="1" fill="#000"/><rect x="1360" y="678" width="1" height="1" fill="#000"/><rect x="1360" y="686" width="1" height="1" fill="#000"/><rect x="1360" y="694" width="1" height="1" fill="#000"/><rect x="1360" y="702" width="1" height="1" fill="#000"/><rect x="1360" y="710" width="1" height="1" fill="#000"/><rect x="1360" y="718" width="1" height="1" fill="#000"/><rect x="1360" y="726" width="1" height="1" fill="#000"/><rect x="1360" y="734" width="1" height="1" fill="#000"/><rect x="1360" y="742" width="1" height="1" fill="#000"/><rect x="1360" y="750" width="1" height="1" fill="#000"/><rect x="1360" y="758" width="1" height="1" fill="#000"/><rect x="1360" y="766" width="1" height="1" fill="#000"/><rect x="1360" y="774" width="1" height="1" fill="#000"/><rect x="1360" y="782" width="1" height="1" fill="#000"/><rect x="1360" y="790" width="1" height="1" fill="#000"/><rect x="1360" y="798" width="1" height="1" fill="#000"/><rect x="1360" y="806" width="1" height="1" fill="#000"/><rect x="1360" y="814" width="1" height="1" fill="#000"/><rect x="1360" y="822" width="1" height="1" fill="#000"/><rect x="1360" y="830" width="1" height="1" fill="#000"/><rect x="1360" y="838" width="1" height="1" fill="#000"/><rect x="1360" y="846" width="1" height="1" fill="#000"/><rect x="1360" y="854" width="1" height="1" fill="#000"/><rect x="1360" y="862" width="1" height="1" fill="#000"/><rect x="1360" y="870" width="1" height="1" fill="#000"/><rect x="1360" y="878" width="1" height="1" fill="#000"/></g>
<path d="M384.3 719.0 L383.9 718.6 L383.4 718.1 L382.7 717.5 L382.0 716.8 L381.3 716.1 L380.6 715.3 L380.0 714.6 L379.6 714.0 L379.3 713.4 L379.0 712.8 L378.8 712.2 L378.7 711.6 L378.5 711.1 L378.5 710.5 L378.5 709.9 L378.5 709.3 L378.6 708.7 L378.7 708.1 L378.8 707.5 L379.0 706.9 L379.3 706.3 L379.6 705.7 L379.9 705.1 L380.2 704.5 L380.5 703.9 L380.9 703.4 L381.2 702.9 L381.6 702.4 L382.1 701.8 L382.6 701.3 L383.3 700.7 L384.0 700.0 L384.8 699.3 L385.6 698.5 L386.5 697.7 L387.5 696.9 L388.6 696.0 L389.8 695.1 L391.3 694.2 L392.9 693.2 L394.8 692.2 L396.9 691.2 L399.2 690.1 L401.7 688.9 L404.3 687.8 L406.9 686.7 L409.5 685.6 L412.1 684.6 L414.6 683.6 L417.1 682.7 L419.5 681.8 L422.0 680.9 L424.7 680.0 L427.4 679.1 L430.4 678.1 L433.6 677.1 L437.0 676.0 L440.6 674.9 L444.3 673.8 L448.2 672.7 L452.3 671.5 L456.5 670.2 L461.0 668.9 L465.7 667.5 L470.7 666.0 L476.1 664.3 L481.8 662.6 L487.7 660.8 L493.6 659.1 L499.4 657.3 L505.2 655.6 L510.7 654.0 L516.0 652.5 L521.2 651.1 L526.2 649.7 L531.2 648.3 L536.2 647.0 L541.2 645.6 L546.3 644.3 L551.4 642.9 L556.6 641.5 L561.7 640.1 L566.9 638.7 L572.1 637.3 L577.3 635.9 L582.6 634.5 L587.9 633.1 L593.2 631.8 L598.6 630.5 L604.1 629.2 L609.6 627.9 L615.1 626.7 L620.6 625.4 L626.1 624.2 L631.6 623.0 L637.1 621.8 L642.5 620.6 L647.8 619.4 L653.2 618.3 L658.5 617.1 L663.8 616.0 L669.2 614.9 L674.5 613.7 L680.0 612.6 L685.5 611.5 L691.1 610.4 L696.7 609.2 L702.3 608.1 L707.9 607.0 L713.6 605.9 L719.3 604.9 L725.0 603.8 L730.7 602.8 L736.4 601.7 L742.1 600.7 L747.8 599.7 L753.6 598.7 L759.4 597.7 L765.3 596.7 L771.4 595.7 L777.6 594.7 L784.1 593.6 L790.6 592.6 L797.2 591.6 L803.8 590.5 L810.3 589.5 L816.7 588.6 L822.9 587.7 L828.9 586.9 L834.9 586.1 L840.7 585.3 L846.5 584.6 L852.1 583.9 L857.7 583.2 L863.2 582.5 L868.6 581.9 L873.9 581.3 L878.9 580.7 L883.9 580.1 L888.8 579.6 L893.6 579.0 L898.5 578.5 L903.5 578.0 L908.6 577.4 L913.8 576.8 L919.0 576.3 L924.2 575.7 L929.5 575.2 L934.8 574.6 L940.2 574.1 L945.8 573.5 L951.4 572.9 L957.0 572.3 L962.5 571.7 L968.1 571.2 L973.7 570.6 L979.6 569.9 L985.9 569.3 L992.6 568.6 L1000.0 567.8 L1007.9 567.0 L1016.1 566.1 L1024.7 565.1 L1033.7 564.1 L1043.1 563.1 L1053.1 562.1 L1063.6 561.0 L1074.6 560.0 L1086.4 558.9 L1098.9 557.8 L1112.1 556.7 L1125.7 555.6 L1139.6 554.4 L1153.6 553.3 L1167.5 552.2 L1181.2 551.2 L1195.2 550.2 L1209.8 549.2 L1224.7 548.2 L1239.6 547.3 L1254.0 546.4 L1267.7 545.5 L1280.2 544.7 L1291.2 544.0 L1300.9 543.4 L1309.6 542.8 L1317.3 542.3 L1324.2 541.9 L1330.3 541.5 L1335.5 541.1 L1339.9 540.8 L1343.5 540.6" fill="none" stroke="#ff55ff" stroke-width="2.7" stroke-linecap="round" stroke-linejoin="round"/>
<rect x="382" y="718" width="5" height="5" fill="#5555ff"/>
<rect x="1343" y="539" width="5" height="5" fill="#5555ff"/>
<rect x="1234" y="514" width="6" height="6" fill="#ff5555"/>
</svg>
<div class="t" style="left:384px;top:722px;font-size:13px;font-weight:bold;color:#5555ff">ring2</div>
<div class="t" style="left:1346px;top:544px;font-size:13px;font-weight:bold;letter-spacing:-0.26px;color:#5555ff">ring1</div>
<div class="t" style="left:1236px;top:518px;font-size:13px;font-weight:bold;letter-spacing:0.16px;color:#ff5555">id_hull</div>
<div class="t" style="left:753px;top:602px;font-size:13px;font-weight:bold;letter-spacing:-0.23px;color:#ff55ff">n_wl</div>
<svg style="left:224px;top:754px" width="10" height="11" viewBox="0 0 10 11"><path d="M0.8 0.5 L8.4 9.8 M8.4 0.5 L0.8 9.8" stroke="#000" stroke-width="1.5" fill="none"/></svg>
<svg style="left:1098px;top:401px" width="11" height="11" viewBox="0 0 11 11"><path d="M0.6 0.6 L5 5.2 L9.6 0.6 M5 5.2 V10" stroke="#000" stroke-width="1.5" fill="none"/></svg>
<svg style="left:1360px;top:108px" width="10" height="11" viewBox="0 0 10 11"><path d="M0.6 1.2 H8.6 L0.8 9.4 H9" stroke="#000" stroke-width="1.4" fill="none"/></svg>
</body></html>
